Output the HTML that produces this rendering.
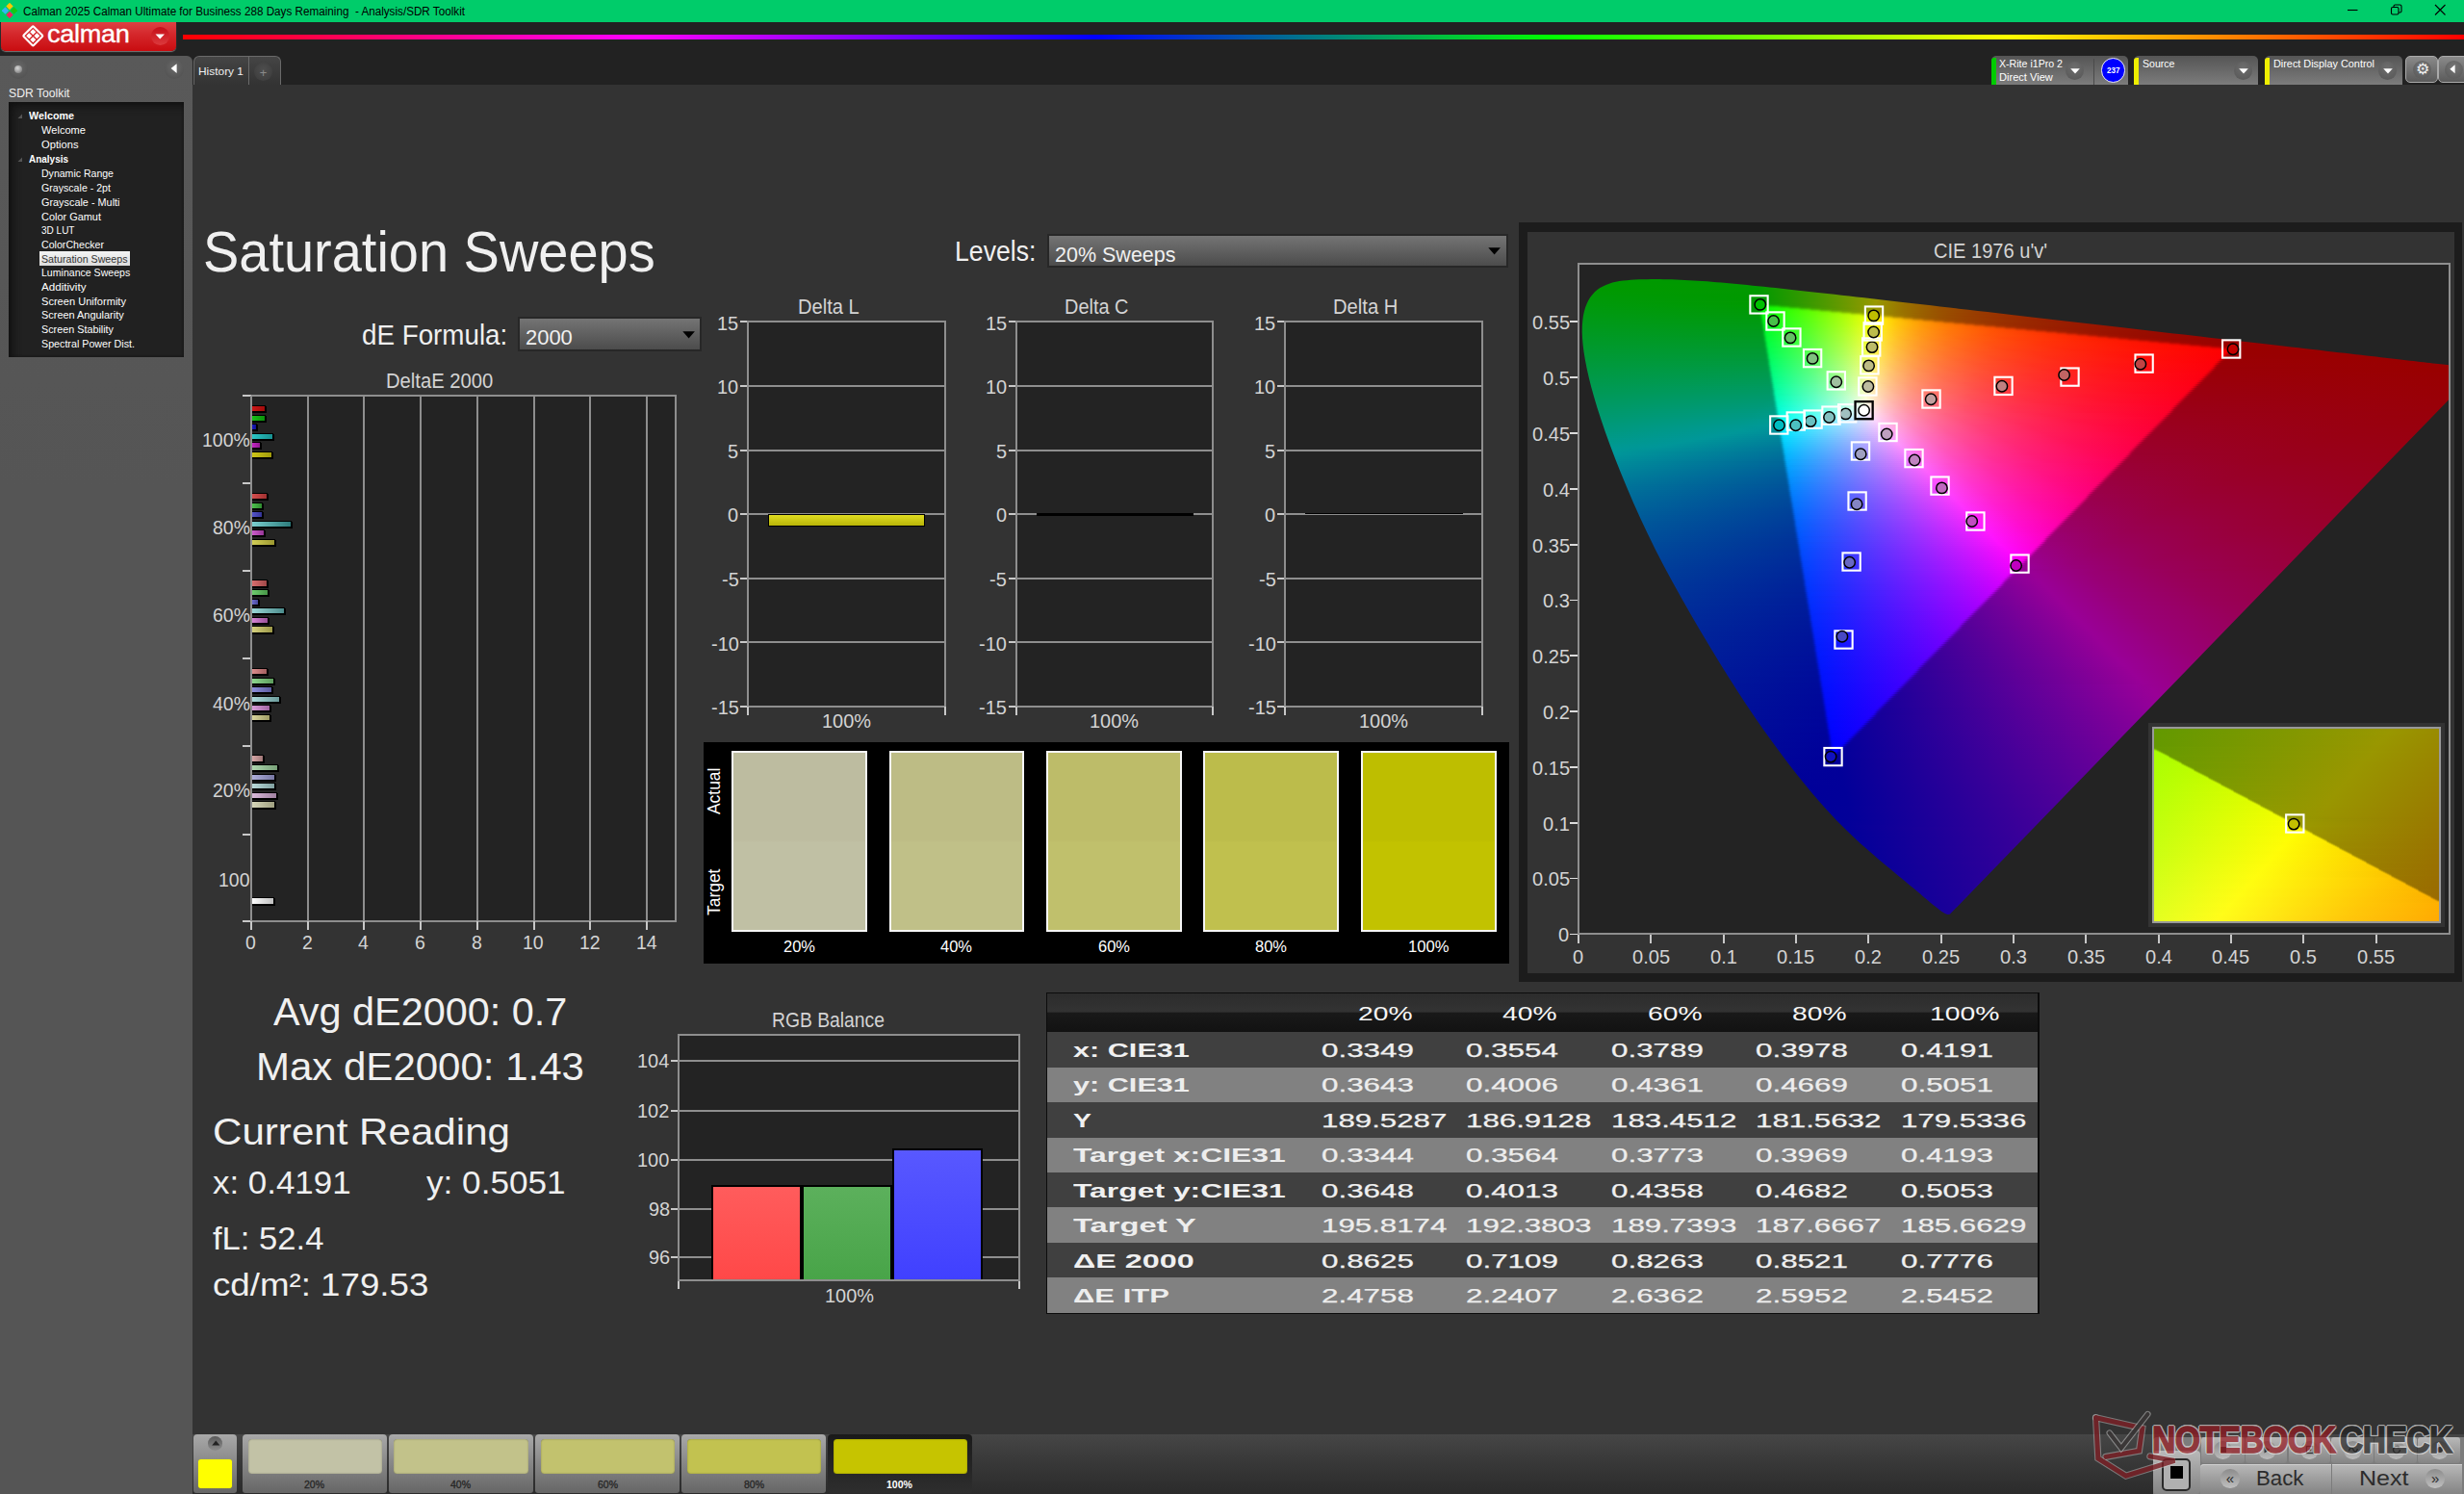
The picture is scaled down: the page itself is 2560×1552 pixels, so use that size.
<!DOCTYPE html>
<html><head><meta charset="utf-8"><title>Calman - Saturation Sweeps</title>
<style>
html,body{margin:0;padding:0;background:#333;}
body{width:2560px;height:1552px;position:relative;overflow:hidden;font-family:"Liberation Sans",sans-serif;}
div,svg.a{position:absolute;}
.t{position:absolute;white-space:nowrap;line-height:1;transform-origin:0 0;}
.cie i{display:block;height:2px;}
.c1 i,.cie i.h{height:1px;}
</style></head><body>
<!-- s_chrome -->
<div style="left:0px;top:0px;width:2560px;height:23px;background:#00cc6a"></div>
<svg class="a" style="left:2px;top:3px" width="16" height="16" viewBox="0 0 16 16"><rect x="5.4" y="0.9" width="5.2" height="5.2" transform="rotate(45 8 3.5)" fill="#ffc800"/><rect x="0.9" y="5.4" width="5.2" height="5.2" transform="rotate(45 3.5 8)" fill="#35b4f4"/><rect x="9.9" y="5.4" width="5.2" height="5.2" transform="rotate(45 12.5 8)" fill="#14c814"/><rect x="5.4" y="9.9" width="5.2" height="5.2" transform="rotate(45 8 12.5)" fill="#ee2460"/></svg>
<span class="t" style="left:23.8px;top:6px;font-size:12px;color:#000;transform:scaleX(0.9738);white-space:pre;">Calman 2025 Calman Ultimate for Business 288 Days Remaining  - Analysis/SDR Toolkit</span>
<svg class="a" style="left:2430px;top:0" width="130" height="23" viewBox="0 0 130 23" fill="none" stroke="#000" stroke-width="1.1"><path d="M9 10.5h10.5"/><rect x="54.5" y="7.5" width="7.5" height="7.5" rx="1.5"/><path d="M57 7.5v-1a1.5 1.5 0 0 1 1.5-1.5h5a1.5 1.5 0 0 1 1.5 1.5v5a1.5 1.5 0 0 1-1.5 1.5h-1.5"/><path d="M100 5l10.5 10.5M110.5 5l-10.5 10.5"/></svg>
<div style="left:0px;top:23px;width:2560px;height:65px;background:#222"></div>
<div style="left:190px;top:35.5px;width:2370px;height:5px;background:linear-gradient(90deg,#f00 0%,#f0f 20%,#00f 40%,#0f0 60%,#ff0 80%,#f00 100%)"></div>
<div style="left:1px;top:23px;width:181.5px;height:29.5px;background:linear-gradient(#de4043,#d4262a 45%,#c90c10);border-radius:0 0 5px 5px;box-shadow:0 1px 1px #777"></div>
<svg class="a" style="left:21px;top:24px" width="28" height="28" viewBox="0 0 28 28"><g transform="translate(13.3 13.3) rotate(45)"><rect x="-7.3" y="-7.3" width="14.6" height="14.6" rx="1" fill="none" stroke="#fff" stroke-width="2.1"/><rect x="-5" y="-5" width="4.3" height="4.3" fill="#fff"/><rect x="0.7" y="-5" width="4.3" height="4.3" fill="#fff"/><rect x="-5" y="0.7" width="4.3" height="4.3" fill="#fff"/><rect x="0.7" y="0.7" width="4.3" height="4.3" fill="#fff"/></g></svg>
<span class="t" style="left:49.3px;top:22px;font-size:26.5px;color:#fff;transform:scaleX(1.0242);letter-spacing:-0.3px;-webkit-text-stroke:0.35px #fff;">calman</span>
<div style="left:156.5px;top:27.5px;width:19.5px;height:19.5px;border-radius:50%;background:linear-gradient(#c40d18,#dc3a3d)"></div>
<svg class="a" style="left:161px;top:35px" width="11" height="7"><path d="M0.5 0.5h9.5l-4.75 5z" fill="#fff"/></svg>
<div style="left:0px;top:58px;width:199.5px;height:1494px;background:linear-gradient(#595959,#555 30%);border-radius:0 6px 0 0"></div>
<div style="left:9px;top:62px;width:20px;height:20px;border-radius:50%;background:radial-gradient(circle at 50% 40%,#6a6a6a,#4c4c4c)"></div>
<div style="left:14.5px;top:67.5px;width:8.5px;height:8.5px;border-radius:50%;background:radial-gradient(circle at 40% 35%,#d8d8d8,#8a8a8a 70%,#666)"></div>
<div style="left:171px;top:62px;width:20px;height:20px;border-radius:50%;background:radial-gradient(circle at 50% 40%,#6a6a6a,#4c4c4c)"></div>
<svg class="a" style="left:177px;top:66px" width="8" height="11"><path d="M6.6 0.3v9.6L0.6 5.1z" fill="#fff"/></svg>
<span class="t" style="left:9px;top:91px;font-size:12.5px;color:#f0f0f0;transform:scaleX(0.9759);">SDR Toolkit</span>
<div style="left:9px;top:105.5px;width:182px;height:265px;background:#212121;box-shadow:inset 6px 6px 8px -2px #111, inset 0 0 3px #111"></div>
<div style="left:41px;top:260.7px;width:94.2px;height:15.3px;background:linear-gradient(#f4f4f4,#dcdcdc)"></div>
<span class="t" style="left:30px;top:115px;font-size:11.3px;color:#fff;font-weight:700;transform:scaleX(0.9513);">Welcome</span>
<span class="t" style="left:43px;top:130px;font-size:11.3px;color:#fff;transform:scaleX(0.9810);">Welcome</span>
<span class="t" style="left:43px;top:145px;font-size:11.3px;color:#fff;transform:scaleX(0.9886);">Options</span>
<span class="t" style="left:30px;top:160px;font-size:11.3px;color:#fff;font-weight:700;transform:scaleX(0.8821);">Analysis</span>
<span class="t" style="left:43px;top:175px;font-size:11.3px;color:#fff;transform:scaleX(0.9329);">Dynamic Range</span>
<span class="t" style="left:43px;top:190px;font-size:11.3px;color:#fff;transform:scaleX(0.9397);">Grayscale - 2pt</span>
<span class="t" style="left:43px;top:205px;font-size:11.3px;color:#fff;transform:scaleX(0.9614);">Grayscale - Multi</span>
<span class="t" style="left:43px;top:220px;font-size:11.3px;color:#fff;transform:scaleX(0.9679);">Color Gamut</span>
<span class="t" style="left:43px;top:234px;font-size:11.3px;color:#fff;transform:scaleX(0.8861);">3D LUT</span>
<span class="t" style="left:43px;top:249px;font-size:11.3px;color:#fff;transform:scaleX(0.9409);">ColorChecker</span>
<span class="t" style="left:43px;top:264px;font-size:11.3px;color:#333;transform:scaleX(0.9435);">Saturation Sweeps</span>
<span class="t" style="left:43px;top:278px;font-size:11.3px;color:#fff;transform:scaleX(0.9349);">Luminance Sweeps</span>
<span class="t" style="left:43px;top:293px;font-size:11.3px;color:#fff;transform:scaleX(1.0284);">Additivity</span>
<span class="t" style="left:43px;top:308px;font-size:11.3px;color:#fff;transform:scaleX(0.9799);">Screen Uniformity</span>
<span class="t" style="left:43px;top:322px;font-size:11.3px;color:#fff;transform:scaleX(0.9676);">Screen Angularity</span>
<span class="t" style="left:43px;top:337px;font-size:11.3px;color:#fff;transform:scaleX(0.9553);">Screen Stability</span>
<span class="t" style="left:43px;top:352px;font-size:11.3px;color:#fff;transform:scaleX(0.9476);">Spectral Power Dist.</span>
<svg class="a" style="left:18px;top:117.5px" width="6" height="6"><path d="M5 0.5v4.5H0.5z" fill="#555"/></svg>
<svg class="a" style="left:18px;top:162.5px" width="6" height="6"><path d="M5 0.5v4.5H0.5z" fill="#555"/></svg>
<div style="left:200px;top:88px;width:2360px;height:1464px;background:#333"></div>
<div style="left:200.5px;top:58px;width:91.5px;height:30px;background:linear-gradient(#454545,#333);border:1px solid #6a6a6a;border-bottom:none;border-radius:6px 6px 0 0;box-sizing:border-box"></div>
<div style="left:257.5px;top:59px;width:1.2px;height:29px;background:#6a6a6a"></div>
<span class="t" style="left:206px;top:69px;font-size:11.5px;color:#f0f0f0;transform:scaleX(1.0359);">History 1</span>
<div style="left:264px;top:65px;width:19px;height:19px;border-radius:50%;background:radial-gradient(circle at 50% 40%,#4e4e4e,#3a3a3a)"></div>
<span class="t" style="left:269.8px;top:69px;font-size:13px;color:#8a8a8a;">+</span>
<div style="left:2068.5px;top:58.3px;width:142.2px;height:29.7px;background:linear-gradient(#555,#7c7c7c);border-radius:5px 5px 0 0;"></div>
<div style="left:2068.5px;top:59.5px;width:5.5px;height:28.5px;background:#0c0;border-radius:3px 0 0 0"></div>
<div style="left:2174.5px;top:61px;width:1.2px;height:27px;background:#4a4a4a"></div>
<span class="t" style="left:2076.6px;top:61px;font-size:11.3px;color:#fff;transform:scaleX(0.9383);">X-Rite i1Pro 2</span>
<span class="t" style="left:2076.6px;top:75px;font-size:11.3px;color:#fff;transform:scaleX(0.9800);">Direct View</span>
<div style="left:2182.7px;top:60.1px;width:25.6px;height:25.6px;border-radius:50%;background:#00f;border:1.2px solid #eee;box-sizing:border-box"></div>
<span class="t" style="left:2188.85px;top:68px;font-size:9.8px;color:#fff;font-weight:700;transform:scaleX(0.8256);">237</span>
<div style="left:2217.3px;top:58.3px;width:129.2px;height:29.7px;background:linear-gradient(#555,#7c7c7c);border-radius:5px 5px 0 0;"></div>
<div style="left:2217.3px;top:59.5px;width:5px;height:28.5px;background:#ee0;border-radius:3px 0 0 0"></div>
<span class="t" style="left:2225.5px;top:61px;font-size:11.3px;color:#fff;transform:scaleX(0.9356);">Source</span>
<div style="left:2353.2px;top:58.3px;width:142.7px;height:29.7px;background:linear-gradient(#555,#7c7c7c);border-radius:5px 5px 0 0;"></div>
<div style="left:2353.2px;top:59.5px;width:5px;height:28.5px;background:#ee0;border-radius:3px 0 0 0"></div>
<span class="t" style="left:2361.8px;top:61px;font-size:11.3px;color:#fff;transform:scaleX(0.9609);">Direct Display Control</span>
<div style="left:2146px;top:63.5px;width:19px;height:19px;border-radius:50%;background:radial-gradient(circle at 50% 35%,#6e6e6e,#555)"></div>
<svg class="a" style="left:2150.5px;top:70.5px" width="10" height="6"><path d="M0.2 0.3h9.6L5 5.6z" fill="#fff"/></svg>
<div style="left:2321px;top:63.5px;width:19px;height:19px;border-radius:50%;background:radial-gradient(circle at 50% 35%,#6e6e6e,#555)"></div>
<svg class="a" style="left:2325.5px;top:70.5px" width="10" height="6"><path d="M0.2 0.3h9.6L5 5.6z" fill="#fff"/></svg>
<div style="left:2471px;top:63.5px;width:19px;height:19px;border-radius:50%;background:radial-gradient(circle at 50% 35%,#6e6e6e,#555)"></div>
<svg class="a" style="left:2475.5px;top:70.5px" width="10" height="6"><path d="M0.2 0.3h9.6L5 5.6z" fill="#fff"/></svg>
<div style="left:2499.3px;top:58.3px;width:33.5px;height:27.5px;background:linear-gradient(#8a8a8a,#5a5a5a);border:1px solid #aaa;border-radius:5px;box-sizing:border-box"></div>
<div style="left:2532.8px;top:58.3px;width:33.5px;height:27.5px;background:linear-gradient(#8a8a8a,#5a5a5a);border:1px solid #aaa;border-radius:5px;box-sizing:border-box"></div>
<div style="left:2506.5px;top:62.5px;width:19px;height:19px;border-radius:50%;background:radial-gradient(circle at 50% 35%,#777,#555)"></div>
<div style="left:2539.5px;top:62.5px;width:19px;height:19px;border-radius:50%;background:radial-gradient(circle at 50% 35%,#777,#555)"></div>
<span class="t" style="left:2510px;top:64px;font-size:16px;color:#eee;font-family:'DejaVu Sans',sans-serif;">⚙</span>
<svg class="a" style="left:2545px;top:67px" width="7" height="10"><path d="M5.6 0.3v9L0.4 4.8z" fill="#fff"/></svg>
<!-- s_left -->
<span class="t" style="left:211.3px;top:232px;font-size:59.5px;color:#f0f0f0;transform:scaleX(0.9404);">Saturation Sweeps</span>
<span class="t" style="left:375.8px;top:333px;font-size:29.5px;color:#f0f0f0;transform:scaleX(0.9411);">dE Formula:</span>
<div style="left:538.3px;top:328.8px;width:191px;height:36.2px;background:linear-gradient(#747474,#4c4c4c);border:2px solid #272727;box-sizing:border-box"></div>
<span class="t" style="left:546px;top:341px;font-size:21.5px;color:#f0f0f0;transform:scaleX(1.0203);">2000</span>
<svg class="a" style="left:708.5px;top:343.5px" width="14" height="8"><path d="M0.3 0.3h12.6L6.6 7.6z" fill="#000"/></svg>
<span class="t" style="left:400.75px;top:386px;font-size:21.5px;color:#d4d4d4;transform:scaleX(0.9405);">DeltaE 2000</span>
<div style="left:259.8px;top:410px;width:442.8px;height:548px;background:#232323;border:2px solid #8e8e8e;box-sizing:border-box"></div>
<div style="left:318.56px;top:411px;width:2px;height:546px;background:#8e8e8e"></div>
<div style="left:377.32px;top:411px;width:2px;height:546px;background:#8e8e8e"></div>
<div style="left:436.08px;top:411px;width:2px;height:546px;background:#8e8e8e"></div>
<div style="left:494.84px;top:411px;width:2px;height:546px;background:#8e8e8e"></div>
<div style="left:553.6px;top:411px;width:2px;height:546px;background:#8e8e8e"></div>
<div style="left:612.36px;top:411px;width:2px;height:546px;background:#8e8e8e"></div>
<div style="left:671.12px;top:411px;width:2px;height:546px;background:#8e8e8e"></div>
<div style="left:259.8px;top:957px;width:2px;height:9px;background:#c8c8c8"></div>
<span class="t" style="left:254.88px;top:969px;font-size:20.3px;color:#d4d4d4;transform:scaleX(0.9600);">0</span>
<div style="left:318.56px;top:957px;width:2px;height:9px;background:#c8c8c8"></div>
<span class="t" style="left:313.64px;top:969px;font-size:20.3px;color:#d4d4d4;transform:scaleX(0.9600);">2</span>
<div style="left:377.32px;top:957px;width:2px;height:9px;background:#c8c8c8"></div>
<span class="t" style="left:372.4px;top:969px;font-size:20.3px;color:#d4d4d4;transform:scaleX(0.9600);">4</span>
<div style="left:436.08px;top:957px;width:2px;height:9px;background:#c8c8c8"></div>
<span class="t" style="left:431.16px;top:969px;font-size:20.3px;color:#d4d4d4;transform:scaleX(0.9600);">6</span>
<div style="left:494.84px;top:957px;width:2px;height:9px;background:#c8c8c8"></div>
<span class="t" style="left:489.92px;top:969px;font-size:20.3px;color:#d4d4d4;transform:scaleX(0.9600);">8</span>
<div style="left:553.6px;top:957px;width:2px;height:9px;background:#c8c8c8"></div>
<span class="t" style="left:543.26px;top:969px;font-size:20.3px;color:#d4d4d4;transform:scaleX(0.9600);">10</span>
<div style="left:612.36px;top:957px;width:2px;height:9px;background:#c8c8c8"></div>
<span class="t" style="left:602.02px;top:969px;font-size:20.3px;color:#d4d4d4;transform:scaleX(0.9600);">12</span>
<div style="left:671.12px;top:957px;width:2px;height:9px;background:#c8c8c8"></div>
<span class="t" style="left:660.78px;top:969px;font-size:20.3px;color:#d4d4d4;transform:scaleX(0.9600);">14</span>
<div style="left:251.8px;top:410px;width:9px;height:2px;background:#c8c8c8"></div>
<div style="left:251.8px;top:501px;width:9px;height:2px;background:#c8c8c8"></div>
<div style="left:251.8px;top:591.5px;width:9px;height:2px;background:#c8c8c8"></div>
<div style="left:251.8px;top:683px;width:9px;height:2px;background:#c8c8c8"></div>
<div style="left:251.8px;top:773.5px;width:9px;height:2px;background:#c8c8c8"></div>
<div style="left:251.8px;top:865.5px;width:9px;height:2px;background:#c8c8c8"></div>
<div style="left:251.8px;top:956px;width:9px;height:2px;background:#c8c8c8"></div>
<span class="t" style="left:209.66px;top:447px;font-size:20.3px;color:#d4d4d4;transform:scaleX(0.9600);">100%</span>
<span class="t" style="left:220.5px;top:538px;font-size:20.3px;color:#d4d4d4;transform:scaleX(0.9600);">80%</span>
<span class="t" style="left:220.5px;top:629px;font-size:20.3px;color:#d4d4d4;transform:scaleX(0.9600);">60%</span>
<span class="t" style="left:220.5px;top:721px;font-size:20.3px;color:#d4d4d4;transform:scaleX(0.9600);">40%</span>
<span class="t" style="left:220.5px;top:811px;font-size:20.3px;color:#d4d4d4;transform:scaleX(0.9600);">20%</span>
<span class="t" style="left:226.98px;top:904px;font-size:20.3px;color:#d4d4d4;transform:scaleX(0.9600);">100</span>
<div style="left:261.3px;top:420.9px;width:14.5px;height:7.2px;background:linear-gradient(90deg,#d01818,#a00c0c);border:1.3px solid #000;border-left:none;box-sizing:border-box;box-shadow:1px 1px 0 #000"></div>
<div style="left:261.3px;top:430.5px;width:14.5px;height:7.2px;background:linear-gradient(90deg,#18c418,#0c900c);border:1.3px solid #000;border-left:none;box-sizing:border-box;box-shadow:1px 1px 0 #000"></div>
<div style="left:261.3px;top:440.1px;width:6px;height:7.2px;background:linear-gradient(90deg,#1c1cd0,#101090);border:1.3px solid #000;border-left:none;box-sizing:border-box;box-shadow:1px 1px 0 #000"></div>
<div style="left:261.3px;top:449.7px;width:23.2px;height:7.2px;background:linear-gradient(90deg,#2cc8c8,#189090);border:1.3px solid #000;border-left:none;box-sizing:border-box;box-shadow:1px 1px 0 #000"></div>
<div style="left:261.3px;top:459.3px;width:10px;height:7.2px;background:linear-gradient(90deg,#cc28cc,#901890);border:1.3px solid #000;border-left:none;box-sizing:border-box;box-shadow:1px 1px 0 #000"></div>
<div style="left:261.3px;top:468.9px;width:22.2px;height:7.2px;background:linear-gradient(90deg,#d0c818,#a09a0c);border:1.3px solid #000;border-left:none;box-sizing:border-box;box-shadow:1px 1px 0 #000"></div>
<div style="left:261.3px;top:511.9px;width:16.5px;height:7.2px;background:linear-gradient(90deg,#d85050,#a03030);border:1.3px solid #000;border-left:none;box-sizing:border-box;box-shadow:1px 1px 0 #000"></div>
<div style="left:261.3px;top:521.5px;width:12px;height:7.2px;background:linear-gradient(90deg,#50c850,#308a30);border:1.3px solid #000;border-left:none;box-sizing:border-box;box-shadow:1px 1px 0 #000"></div>
<div style="left:261.3px;top:531.1px;width:12px;height:7.2px;background:linear-gradient(90deg,#5858d0,#343496);border:1.3px solid #000;border-left:none;box-sizing:border-box;box-shadow:1px 1px 0 #000"></div>
<div style="left:261.3px;top:540.7px;width:41.3px;height:7.2px;background:linear-gradient(90deg,#7cd0d0,#2c7c7c);border:1.3px solid #000;border-left:none;box-sizing:border-box;box-shadow:1px 1px 0 #000"></div>
<div style="left:261.3px;top:550.3px;width:14px;height:7.2px;background:linear-gradient(90deg,#d060d0,#963696);border:1.3px solid #000;border-left:none;box-sizing:border-box;box-shadow:1px 1px 0 #000"></div>
<div style="left:261.3px;top:559.9px;width:25.2px;height:7.2px;background:linear-gradient(90deg,#d4d058,#9c9830);border:1.3px solid #000;border-left:none;box-sizing:border-box;box-shadow:1px 1px 0 #000"></div>
<div style="left:261.3px;top:602.4px;width:16.5px;height:7.2px;background:linear-gradient(90deg,#dc7070,#a04848);border:1.3px solid #000;border-left:none;box-sizing:border-box;box-shadow:1px 1px 0 #000"></div>
<div style="left:261.3px;top:612px;width:18.2px;height:7.2px;background:linear-gradient(90deg,#70d070,#489648);border:1.3px solid #000;border-left:none;box-sizing:border-box;box-shadow:1px 1px 0 #000"></div>
<div style="left:261.3px;top:621.6px;width:8px;height:7.2px;background:linear-gradient(90deg,#7070d4,#484898);border:1.3px solid #000;border-left:none;box-sizing:border-box;box-shadow:1px 1px 0 #000"></div>
<div style="left:261.3px;top:631.2px;width:35.2px;height:7.2px;background:linear-gradient(90deg,#9cd8d8,#4c8c8c);border:1.3px solid #000;border-left:none;box-sizing:border-box;box-shadow:1px 1px 0 #000"></div>
<div style="left:261.3px;top:640.8px;width:18.2px;height:7.2px;background:linear-gradient(90deg,#d888d8,#985098);border:1.3px solid #000;border-left:none;box-sizing:border-box;box-shadow:1px 1px 0 #000"></div>
<div style="left:261.3px;top:650.4px;width:23.2px;height:7.2px;background:linear-gradient(90deg,#d8d480,#9c9848);border:1.3px solid #000;border-left:none;box-sizing:border-box;box-shadow:1px 1px 0 #000"></div>
<div style="left:261.3px;top:693.9px;width:16.5px;height:7.2px;background:linear-gradient(90deg,#e09090,#a46060);border:1.3px solid #000;border-left:none;box-sizing:border-box;box-shadow:1px 1px 0 #000"></div>
<div style="left:261.3px;top:703.5px;width:23.5px;height:7.2px;background:linear-gradient(90deg,#90d890,#5c9c5c);border:1.3px solid #000;border-left:none;box-sizing:border-box;box-shadow:1px 1px 0 #000"></div>
<div style="left:261.3px;top:713.1px;width:22px;height:7.2px;background:linear-gradient(90deg,#9090dc,#5c5ca0);border:1.3px solid #000;border-left:none;box-sizing:border-box;box-shadow:1px 1px 0 #000"></div>
<div style="left:261.3px;top:722.7px;width:29.5px;height:7.2px;background:linear-gradient(90deg,#b0dcdc,#6c9c9c);border:1.3px solid #000;border-left:none;box-sizing:border-box;box-shadow:1px 1px 0 #000"></div>
<div style="left:261.3px;top:732.3px;width:20.2px;height:7.2px;background:linear-gradient(90deg,#dca0dc,#a064a0);border:1.3px solid #000;border-left:none;box-sizing:border-box;box-shadow:1px 1px 0 #000"></div>
<div style="left:261.3px;top:741.9px;width:20.2px;height:7.2px;background:linear-gradient(90deg,#dcd8a0,#a09c64);border:1.3px solid #000;border-left:none;box-sizing:border-box;box-shadow:1px 1px 0 #000"></div>
<div style="left:261.3px;top:784.4px;width:12.7px;height:7.2px;background:linear-gradient(90deg,#dcacac,#a07878);border:1.3px solid #000;border-left:none;box-sizing:border-box;box-shadow:1px 1px 0 #000"></div>
<div style="left:261.3px;top:794px;width:27.7px;height:7.2px;background:linear-gradient(90deg,#b0d8b0,#78a078);border:1.3px solid #000;border-left:none;box-sizing:border-box;box-shadow:1px 1px 0 #000"></div>
<div style="left:261.3px;top:803.6px;width:25.2px;height:7.2px;background:linear-gradient(90deg,#b0b0dc,#7878a4);border:1.3px solid #000;border-left:none;box-sizing:border-box;box-shadow:1px 1px 0 #000"></div>
<div style="left:261.3px;top:813.2px;width:25.2px;height:7.2px;background:linear-gradient(90deg,#bcdcdc,#80a0a0);border:1.3px solid #000;border-left:none;box-sizing:border-box;box-shadow:1px 1px 0 #000"></div>
<div style="left:261.3px;top:822.8px;width:27.2px;height:7.2px;background:linear-gradient(90deg,#dcbcdc,#a080a0);border:1.3px solid #000;border-left:none;box-sizing:border-box;box-shadow:1px 1px 0 #000"></div>
<div style="left:261.3px;top:832.4px;width:25.2px;height:7.2px;background:linear-gradient(90deg,#d8d8bc,#a0a080);border:1.3px solid #000;border-left:none;box-sizing:border-box;box-shadow:1px 1px 0 #000"></div>
<div style="left:261.3px;top:932.4px;width:23.5px;height:7.2px;background:linear-gradient(90deg,#ffffff,#c0c0c0);border:1.3px solid #000;border-left:none;box-sizing:border-box;box-shadow:1px 1px 0 #000"></div>
<div style="left:259.8px;top:411px;width:2px;height:546px;background:#8e8e8e"></div>
<span class="t" style="left:283.9px;top:1031px;font-size:40.7px;color:#f0f0f0;transform:scaleX(1.0172);">Avg dE2000: 0.7</span>
<span class="t" style="left:266px;top:1088px;font-size:40.7px;color:#f0f0f0;transform:scaleX(1.0322);">Max dE2000: 1.43</span>
<span class="t" style="left:221.4px;top:1157px;font-size:38.5px;color:#f0f0f0;transform:scaleX(1.0938);">Current Reading</span>
<span class="t" style="left:221.4px;top:1213px;font-size:32.5px;color:#f0f0f0;transform:scaleX(1.0739);">x: 0.4191</span>
<span class="t" style="left:442.9px;top:1213px;font-size:32.5px;color:#f0f0f0;transform:scaleX(1.0814);">y: 0.5051</span>
<span class="t" style="left:221.4px;top:1271px;font-size:32.5px;color:#f0f0f0;transform:scaleX(1.0644);">fL: 52.4</span>
<span class="t" style="left:221.4px;top:1319px;font-size:32.5px;color:#f0f0f0;transform:scaleX(1.1287);">cd/m²: 179.53</span>
<!-- s_mid -->
<span class="t" style="left:991.8px;top:246px;font-size:29.5px;color:#f0f0f0;transform:scaleX(0.9030);">Levels:</span>
<div style="left:1087.5px;top:243px;width:479.3px;height:34.5px;background:linear-gradient(#747474,#4c4c4c);border:2px solid #272727;box-sizing:border-box;overflow:hidden"><span class="t" style="left:6px;top:9px;font-size:21.7px;color:#f0f0f0;transform:scaleX(0.9916);">20% Sweeps</span></div>
<svg class="a" style="left:1545.5px;top:256.5px" width="14" height="8"><path d="M0.3 0.3h12.6L6.6 7.6z" fill="#000"/></svg>
<div style="left:776px;top:333.3px;width:206.5px;height:401.6px;background:#232323;border:2px solid #8e8e8e;box-sizing:border-box"></div>
<div style="left:769px;top:333.3px;width:7px;height:2px;background:#c8c8c8"></div>
<span class="t" style="left:745.31px;top:325px;font-size:21px;color:#d4d4d4;transform:scaleX(0.9500);">15</span>
<div style="left:776px;top:399.9px;width:206.5px;height:2px;background:#8e8e8e"></div>
<div style="left:769px;top:399.9px;width:7px;height:2px;background:#c8c8c8"></div>
<span class="t" style="left:745.31px;top:391px;font-size:21px;color:#d4d4d4;transform:scaleX(0.9500);">10</span>
<div style="left:776px;top:466.5px;width:206.5px;height:2px;background:#8e8e8e"></div>
<div style="left:769px;top:466.5px;width:7px;height:2px;background:#c8c8c8"></div>
<span class="t" style="left:756.4px;top:458px;font-size:21px;color:#d4d4d4;transform:scaleX(0.9500);">5</span>
<div style="left:776px;top:533.1px;width:206.5px;height:2px;background:#8e8e8e"></div>
<div style="left:769px;top:533.1px;width:7px;height:2px;background:#c8c8c8"></div>
<span class="t" style="left:756.4px;top:524px;font-size:21px;color:#d4d4d4;transform:scaleX(0.9500);">0</span>
<div style="left:776px;top:599.7px;width:206.5px;height:2px;background:#8e8e8e"></div>
<div style="left:769px;top:599.7px;width:7px;height:2px;background:#c8c8c8"></div>
<span class="t" style="left:749.76px;top:591px;font-size:21px;color:#d4d4d4;transform:scaleX(0.9500);">-5</span>
<div style="left:776px;top:666.3px;width:206.5px;height:2px;background:#8e8e8e"></div>
<div style="left:769px;top:666.3px;width:7px;height:2px;background:#c8c8c8"></div>
<span class="t" style="left:738.66px;top:658px;font-size:21px;color:#d4d4d4;transform:scaleX(0.9500);">-10</span>
<div style="left:769px;top:732.9px;width:7px;height:2px;background:#c8c8c8"></div>
<span class="t" style="left:738.66px;top:724px;font-size:21px;color:#d4d4d4;transform:scaleX(0.9500);">-15</span>
<div style="left:776px;top:733.9px;width:2px;height:9px;background:#c8c8c8"></div>
<div style="left:980.5px;top:733.9px;width:2px;height:9px;background:#c8c8c8"></div>
<span class="t" style="left:853.75px;top:738px;font-size:21px;color:#d4d4d4;transform:scaleX(0.9495);">100%</span>
<span class="t" style="left:828.7px;top:308px;font-size:21.7px;color:#d4d4d4;transform:scaleX(0.9279);">Delta L</span>
<div style="left:797.5px;top:534.1px;width:163px;height:13.3px;background:linear-gradient(#e0dc20,#b8b408);border:1.5px solid #000;box-sizing:border-box"></div>
<div style="left:1054.7px;top:333.3px;width:206.5px;height:401.6px;background:#232323;border:2px solid #8e8e8e;box-sizing:border-box"></div>
<div style="left:1047.7px;top:333.3px;width:7px;height:2px;background:#c8c8c8"></div>
<span class="t" style="left:1024.01px;top:325px;font-size:21px;color:#d4d4d4;transform:scaleX(0.9500);">15</span>
<div style="left:1054.7px;top:399.9px;width:206.5px;height:2px;background:#8e8e8e"></div>
<div style="left:1047.7px;top:399.9px;width:7px;height:2px;background:#c8c8c8"></div>
<span class="t" style="left:1024.01px;top:391px;font-size:21px;color:#d4d4d4;transform:scaleX(0.9500);">10</span>
<div style="left:1054.7px;top:466.5px;width:206.5px;height:2px;background:#8e8e8e"></div>
<div style="left:1047.7px;top:466.5px;width:7px;height:2px;background:#c8c8c8"></div>
<span class="t" style="left:1035.1px;top:458px;font-size:21px;color:#d4d4d4;transform:scaleX(0.9500);">5</span>
<div style="left:1054.7px;top:533.1px;width:206.5px;height:2px;background:#8e8e8e"></div>
<div style="left:1047.7px;top:533.1px;width:7px;height:2px;background:#c8c8c8"></div>
<span class="t" style="left:1035.1px;top:524px;font-size:21px;color:#d4d4d4;transform:scaleX(0.9500);">0</span>
<div style="left:1054.7px;top:599.7px;width:206.5px;height:2px;background:#8e8e8e"></div>
<div style="left:1047.7px;top:599.7px;width:7px;height:2px;background:#c8c8c8"></div>
<span class="t" style="left:1028.46px;top:591px;font-size:21px;color:#d4d4d4;transform:scaleX(0.9500);">-5</span>
<div style="left:1054.7px;top:666.3px;width:206.5px;height:2px;background:#8e8e8e"></div>
<div style="left:1047.7px;top:666.3px;width:7px;height:2px;background:#c8c8c8"></div>
<span class="t" style="left:1017.36px;top:658px;font-size:21px;color:#d4d4d4;transform:scaleX(0.9500);">-10</span>
<div style="left:1047.7px;top:732.9px;width:7px;height:2px;background:#c8c8c8"></div>
<span class="t" style="left:1017.36px;top:724px;font-size:21px;color:#d4d4d4;transform:scaleX(0.9500);">-15</span>
<div style="left:1054.7px;top:733.9px;width:2px;height:9px;background:#c8c8c8"></div>
<div style="left:1259.2px;top:733.9px;width:2px;height:9px;background:#c8c8c8"></div>
<span class="t" style="left:1132.45px;top:738px;font-size:21px;color:#d4d4d4;transform:scaleX(0.9495);">100%</span>
<span class="t" style="left:1106.35px;top:308px;font-size:21.7px;color:#d4d4d4;transform:scaleX(0.9190);">Delta C</span>
<div style="left:1076.5px;top:532.6px;width:163.5px;height:3px;background:#000"></div>
<div style="left:1334px;top:333.3px;width:206.5px;height:401.6px;background:#232323;border:2px solid #8e8e8e;box-sizing:border-box"></div>
<div style="left:1327px;top:333.3px;width:7px;height:2px;background:#c8c8c8"></div>
<span class="t" style="left:1303.31px;top:325px;font-size:21px;color:#d4d4d4;transform:scaleX(0.9500);">15</span>
<div style="left:1334px;top:399.9px;width:206.5px;height:2px;background:#8e8e8e"></div>
<div style="left:1327px;top:399.9px;width:7px;height:2px;background:#c8c8c8"></div>
<span class="t" style="left:1303.31px;top:391px;font-size:21px;color:#d4d4d4;transform:scaleX(0.9500);">10</span>
<div style="left:1334px;top:466.5px;width:206.5px;height:2px;background:#8e8e8e"></div>
<div style="left:1327px;top:466.5px;width:7px;height:2px;background:#c8c8c8"></div>
<span class="t" style="left:1314.4px;top:458px;font-size:21px;color:#d4d4d4;transform:scaleX(0.9500);">5</span>
<div style="left:1334px;top:533.1px;width:206.5px;height:2px;background:#8e8e8e"></div>
<div style="left:1327px;top:533.1px;width:7px;height:2px;background:#c8c8c8"></div>
<span class="t" style="left:1314.4px;top:524px;font-size:21px;color:#d4d4d4;transform:scaleX(0.9500);">0</span>
<div style="left:1334px;top:599.7px;width:206.5px;height:2px;background:#8e8e8e"></div>
<div style="left:1327px;top:599.7px;width:7px;height:2px;background:#c8c8c8"></div>
<span class="t" style="left:1307.76px;top:591px;font-size:21px;color:#d4d4d4;transform:scaleX(0.9500);">-5</span>
<div style="left:1334px;top:666.3px;width:206.5px;height:2px;background:#8e8e8e"></div>
<div style="left:1327px;top:666.3px;width:7px;height:2px;background:#c8c8c8"></div>
<span class="t" style="left:1296.66px;top:658px;font-size:21px;color:#d4d4d4;transform:scaleX(0.9500);">-10</span>
<div style="left:1327px;top:732.9px;width:7px;height:2px;background:#c8c8c8"></div>
<span class="t" style="left:1296.66px;top:724px;font-size:21px;color:#d4d4d4;transform:scaleX(0.9500);">-15</span>
<div style="left:1334px;top:733.9px;width:2px;height:9px;background:#c8c8c8"></div>
<div style="left:1538.5px;top:733.9px;width:2px;height:9px;background:#c8c8c8"></div>
<span class="t" style="left:1411.75px;top:738px;font-size:21px;color:#d4d4d4;transform:scaleX(0.9495);">100%</span>
<span class="t" style="left:1384.85px;top:308px;font-size:21.7px;color:#d4d4d4;transform:scaleX(0.9328);">Delta H</span>
<div style="left:1356px;top:532.8px;width:163.5px;height:1.6px;background:#000"></div>
<div style="left:730.5px;top:770.5px;width:837.5px;height:230.5px;background:#000"></div>
<div style="left:760px;top:780px;width:140.5px;height:188px;background:linear-gradient(#bdbca0 0 49.5%,#c0c0a4 50.5% 100%);border:2px solid #f6f6f6;box-sizing:border-box"></div>
<span class="t" style="left:813.5px;top:975px;font-size:16.3px;color:#fff;transform:scaleX(1.0115);">20%</span>
<div style="left:923.5px;top:780px;width:140.5px;height:188px;background:linear-gradient(#bdbc85 0 49.5%,#c0c088 50.5% 100%);border:2px solid #f6f6f6;box-sizing:border-box"></div>
<span class="t" style="left:977px;top:975px;font-size:16.3px;color:#fff;transform:scaleX(1.0115);">40%</span>
<div style="left:1087px;top:780px;width:140.5px;height:188px;background:linear-gradient(#bdbc69 0 49.5%,#c0c06c 50.5% 100%);border:2px solid #f6f6f6;box-sizing:border-box"></div>
<span class="t" style="left:1140.5px;top:975px;font-size:16.3px;color:#fff;transform:scaleX(1.0115);">60%</span>
<div style="left:1250.3px;top:780px;width:140.5px;height:188px;background:linear-gradient(#bcbc4b 0 49.5%,#c0c04e 50.5% 100%);border:2px solid #f6f6f6;box-sizing:border-box"></div>
<span class="t" style="left:1303.8px;top:975px;font-size:16.3px;color:#fff;transform:scaleX(1.0115);">80%</span>
<div style="left:1414px;top:780px;width:140.5px;height:188px;background:linear-gradient(#bebe00 0 49.5%,#c2c200 50.5% 100%);border:2px solid #f6f6f6;box-sizing:border-box"></div>
<span class="t" style="left:1462.75px;top:975px;font-size:16.3px;color:#fff;transform:scaleX(1.0194);">100%</span>
<span class="t" style="left:734px;top:846px;font-size:17.6px;color:#fff;transform:rotate(-90deg) scaleX(0.99);transform-origin:0 0">Actual</span>
<span class="t" style="left:734px;top:950.5px;font-size:17.6px;color:#fff;transform:rotate(-90deg) scaleX(0.99);transform-origin:0 0">Target</span>
<div style="left:704.3px;top:1074px;width:355.7px;height:256.8px;background:#232323;border:2px solid #8e8e8e;box-sizing:border-box"></div>
<div style="left:704.3px;top:1101px;width:355.7px;height:2px;background:#8e8e8e"></div>
<div style="left:697.3px;top:1101px;width:7px;height:2px;background:#c8c8c8"></div>
<span class="t" style="left:662.41px;top:1091px;font-size:21px;color:#d4d4d4;transform:scaleX(0.9500);">104</span>
<div style="left:704.3px;top:1153px;width:355.7px;height:2px;background:#8e8e8e"></div>
<div style="left:697.3px;top:1153px;width:7px;height:2px;background:#c8c8c8"></div>
<span class="t" style="left:662.41px;top:1143px;font-size:21px;color:#d4d4d4;transform:scaleX(0.9500);">102</span>
<div style="left:704.3px;top:1203.5px;width:355.7px;height:2px;background:#8e8e8e"></div>
<div style="left:697.3px;top:1203.5px;width:7px;height:2px;background:#c8c8c8"></div>
<span class="t" style="left:662.41px;top:1194px;font-size:21px;color:#d4d4d4;transform:scaleX(0.9500);">100</span>
<div style="left:704.3px;top:1254.7px;width:355.7px;height:2px;background:#8e8e8e"></div>
<div style="left:697.3px;top:1254.7px;width:7px;height:2px;background:#c8c8c8"></div>
<span class="t" style="left:673.51px;top:1245px;font-size:21px;color:#d4d4d4;transform:scaleX(0.9500);">98</span>
<div style="left:704.3px;top:1305px;width:355.7px;height:2px;background:#8e8e8e"></div>
<div style="left:697.3px;top:1305px;width:7px;height:2px;background:#c8c8c8"></div>
<span class="t" style="left:673.51px;top:1295px;font-size:21px;color:#d4d4d4;transform:scaleX(0.9500);">96</span>
<div style="left:704.3px;top:1329.8px;width:2px;height:9px;background:#c8c8c8"></div>
<div style="left:1058px;top:1329.8px;width:2px;height:9px;background:#c8c8c8"></div>
<div style="left:738.5px;top:1230.5px;width:94px;height:99.3px;background:linear-gradient(#ff5c5c,#ff4848);border:2px solid #000;border-bottom:none;box-sizing:border-box"></div>
<div style="left:833.3px;top:1230.5px;width:93.5px;height:99.3px;background:linear-gradient(#5cb05c,#48a448);border:2px solid #000;border-bottom:none;box-sizing:border-box"></div>
<div style="left:927px;top:1193px;width:94.3px;height:136.8px;background:linear-gradient(#5858ff,#4040ff);border:2px solid #000;border-bottom:none;box-sizing:border-box"></div>
<div style="left:704.3px;top:1328.8px;width:355.7px;height:2px;background:#8e8e8e"></div>
<span class="t" style="left:856.5px;top:1335px;font-size:21px;color:#d4d4d4;transform:scaleX(0.9495);">100%</span>
<span class="t" style="left:801.7px;top:1049px;font-size:21.7px;color:#d4d4d4;transform:scaleX(0.8899);">RGB Balance</span>
<div style="left:1086.5px;top:1030.5px;width:1032px;height:334.5px;background:#0c0c0c"></div>
<div style="left:1088.2px;top:1032px;width:1029px;height:40.3px;background:linear-gradient(#2c2c2c,#333 48%,#191919 50%,#121212)"></div>
<span class="t" style="left:1410.8px;top:1044px;font-size:19.6px;color:#f6f6f6;transform:scaleX(1.4403);">20%</span>
<span class="t" style="left:1561.3px;top:1044px;font-size:19.6px;color:#f6f6f6;transform:scaleX(1.4403);">40%</span>
<span class="t" style="left:1711.8px;top:1044px;font-size:19.6px;color:#f6f6f6;transform:scaleX(1.4403);">60%</span>
<span class="t" style="left:1862.1px;top:1044px;font-size:19.6px;color:#f6f6f6;transform:scaleX(1.4403);">80%</span>
<span class="t" style="left:2005px;top:1044px;font-size:19.6px;color:#f6f6f6;transform:scaleX(1.4462);">100%</span>
<div style="left:1088.2px;top:1072.2px;width:1029px;height:36.65px;background:#404040"></div>
<span class="t" style="left:1114.7px;top:1082px;font-size:19.3px;color:#f0f0f0;font-weight:700;transform:scaleX(1.5886);">x: CIE31</span>
<span class="t" style="left:1372.6px;top:1082px;font-size:19.3px;color:#f0f0f0;transform:scaleX(1.6262);-webkit-text-stroke:0.25px #f0f0f0;">0.3349</span>
<span class="t" style="left:1523px;top:1082px;font-size:19.3px;color:#f0f0f0;transform:scaleX(1.6262);-webkit-text-stroke:0.25px #f0f0f0;">0.3554</span>
<span class="t" style="left:1673.6px;top:1082px;font-size:19.3px;color:#f0f0f0;transform:scaleX(1.6262);-webkit-text-stroke:0.25px #f0f0f0;">0.3789</span>
<span class="t" style="left:1824px;top:1082px;font-size:19.3px;color:#f0f0f0;transform:scaleX(1.6262);-webkit-text-stroke:0.25px #f0f0f0;">0.3978</span>
<span class="t" style="left:1974.5px;top:1082px;font-size:19.3px;color:#f0f0f0;transform:scaleX(1.6262);-webkit-text-stroke:0.25px #f0f0f0;">0.4191</span>
<div style="left:1088.2px;top:1108.65px;width:1029px;height:36.65px;background:#818181"></div>
<span class="t" style="left:1114.7px;top:1118px;font-size:19.3px;color:#ededed;font-weight:700;transform:scaleX(1.5886);">y: CIE31</span>
<span class="t" style="left:1372.6px;top:1118px;font-size:19.3px;color:#ededed;transform:scaleX(1.6262);-webkit-text-stroke:0.25px #ededed;">0.3643</span>
<span class="t" style="left:1523px;top:1118px;font-size:19.3px;color:#ededed;transform:scaleX(1.6262);-webkit-text-stroke:0.25px #ededed;">0.4006</span>
<span class="t" style="left:1673.6px;top:1118px;font-size:19.3px;color:#ededed;transform:scaleX(1.6262);-webkit-text-stroke:0.25px #ededed;">0.4361</span>
<span class="t" style="left:1824px;top:1118px;font-size:19.3px;color:#ededed;transform:scaleX(1.6262);-webkit-text-stroke:0.25px #ededed;">0.4669</span>
<span class="t" style="left:1974.5px;top:1118px;font-size:19.3px;color:#ededed;transform:scaleX(1.6262);-webkit-text-stroke:0.25px #ededed;">0.5051</span>
<div style="left:1088.2px;top:1145.1px;width:1029px;height:36.65px;background:#404040"></div>
<span class="t" style="left:1114.7px;top:1155px;font-size:19.3px;color:#f0f0f0;font-weight:700;transform:scaleX(1.4759);">Y</span>
<span class="t" style="left:1372.6px;top:1155px;font-size:19.3px;color:#f0f0f0;transform:scaleX(1.6211);-webkit-text-stroke:0.25px #f0f0f0;">189.5287</span>
<span class="t" style="left:1523px;top:1155px;font-size:19.3px;color:#f0f0f0;transform:scaleX(1.6211);-webkit-text-stroke:0.25px #f0f0f0;">186.9128</span>
<span class="t" style="left:1673.6px;top:1155px;font-size:19.3px;color:#f0f0f0;transform:scaleX(1.6211);-webkit-text-stroke:0.25px #f0f0f0;">183.4512</span>
<span class="t" style="left:1824px;top:1155px;font-size:19.3px;color:#f0f0f0;transform:scaleX(1.6211);-webkit-text-stroke:0.25px #f0f0f0;">181.5632</span>
<span class="t" style="left:1974.5px;top:1155px;font-size:19.3px;color:#f0f0f0;transform:scaleX(1.6211);-webkit-text-stroke:0.25px #f0f0f0;">179.5336</span>
<div style="left:1088.2px;top:1181.55px;width:1029px;height:36.65px;background:#818181"></div>
<span class="t" style="left:1114.7px;top:1191px;font-size:19.3px;color:#ededed;font-weight:700;transform:scaleX(1.6527);">Target x:CIE31</span>
<span class="t" style="left:1372.6px;top:1191px;font-size:19.3px;color:#ededed;transform:scaleX(1.6262);-webkit-text-stroke:0.25px #ededed;">0.3344</span>
<span class="t" style="left:1523px;top:1191px;font-size:19.3px;color:#ededed;transform:scaleX(1.6262);-webkit-text-stroke:0.25px #ededed;">0.3564</span>
<span class="t" style="left:1673.6px;top:1191px;font-size:19.3px;color:#ededed;transform:scaleX(1.6262);-webkit-text-stroke:0.25px #ededed;">0.3773</span>
<span class="t" style="left:1824px;top:1191px;font-size:19.3px;color:#ededed;transform:scaleX(1.6262);-webkit-text-stroke:0.25px #ededed;">0.3969</span>
<span class="t" style="left:1974.5px;top:1191px;font-size:19.3px;color:#ededed;transform:scaleX(1.6262);-webkit-text-stroke:0.25px #ededed;">0.4193</span>
<div style="left:1088.2px;top:1218px;width:1029px;height:36.65px;background:#404040"></div>
<span class="t" style="left:1114.7px;top:1228px;font-size:19.3px;color:#f0f0f0;font-weight:700;transform:scaleX(1.6527);">Target y:CIE31</span>
<span class="t" style="left:1372.6px;top:1228px;font-size:19.3px;color:#f0f0f0;transform:scaleX(1.6262);-webkit-text-stroke:0.25px #f0f0f0;">0.3648</span>
<span class="t" style="left:1523px;top:1228px;font-size:19.3px;color:#f0f0f0;transform:scaleX(1.6262);-webkit-text-stroke:0.25px #f0f0f0;">0.4013</span>
<span class="t" style="left:1673.6px;top:1228px;font-size:19.3px;color:#f0f0f0;transform:scaleX(1.6262);-webkit-text-stroke:0.25px #f0f0f0;">0.4358</span>
<span class="t" style="left:1824px;top:1228px;font-size:19.3px;color:#f0f0f0;transform:scaleX(1.6262);-webkit-text-stroke:0.25px #f0f0f0;">0.4682</span>
<span class="t" style="left:1974.5px;top:1228px;font-size:19.3px;color:#f0f0f0;transform:scaleX(1.6262);-webkit-text-stroke:0.25px #f0f0f0;">0.5053</span>
<div style="left:1088.2px;top:1254.45px;width:1029px;height:36.65px;background:#818181"></div>
<span class="t" style="left:1114.7px;top:1264px;font-size:19.3px;color:#ededed;font-weight:700;transform:scaleX(1.6967);">Target Y</span>
<span class="t" style="left:1372.6px;top:1264px;font-size:19.3px;color:#ededed;transform:scaleX(1.6211);-webkit-text-stroke:0.25px #ededed;">195.8174</span>
<span class="t" style="left:1523px;top:1264px;font-size:19.3px;color:#ededed;transform:scaleX(1.6211);-webkit-text-stroke:0.25px #ededed;">192.3803</span>
<span class="t" style="left:1673.6px;top:1264px;font-size:19.3px;color:#ededed;transform:scaleX(1.6211);-webkit-text-stroke:0.25px #ededed;">189.7393</span>
<span class="t" style="left:1824px;top:1264px;font-size:19.3px;color:#ededed;transform:scaleX(1.6211);-webkit-text-stroke:0.25px #ededed;">187.6667</span>
<span class="t" style="left:1974.5px;top:1264px;font-size:19.3px;color:#ededed;transform:scaleX(1.6211);-webkit-text-stroke:0.25px #ededed;">185.6629</span>
<div style="left:1088.2px;top:1290.9px;width:1029px;height:36.65px;background:#404040"></div>
<span class="t" style="left:1114.7px;top:1301px;font-size:19.3px;color:#f0f0f0;font-weight:700;transform:scaleX(1.6790);">ΔE 2000</span>
<span class="t" style="left:1372.6px;top:1301px;font-size:19.3px;color:#f0f0f0;transform:scaleX(1.6262);-webkit-text-stroke:0.25px #f0f0f0;">0.8625</span>
<span class="t" style="left:1523px;top:1301px;font-size:19.3px;color:#f0f0f0;transform:scaleX(1.6262);-webkit-text-stroke:0.25px #f0f0f0;">0.7109</span>
<span class="t" style="left:1673.6px;top:1301px;font-size:19.3px;color:#f0f0f0;transform:scaleX(1.6262);-webkit-text-stroke:0.25px #f0f0f0;">0.8263</span>
<span class="t" style="left:1824px;top:1301px;font-size:19.3px;color:#f0f0f0;transform:scaleX(1.6262);-webkit-text-stroke:0.25px #f0f0f0;">0.8521</span>
<span class="t" style="left:1974.5px;top:1301px;font-size:19.3px;color:#f0f0f0;transform:scaleX(1.6262);-webkit-text-stroke:0.25px #f0f0f0;">0.7776</span>
<div style="left:1088.2px;top:1327.35px;width:1029px;height:36.65px;background:#818181"></div>
<span class="t" style="left:1114.7px;top:1337px;font-size:19.3px;color:#ededed;font-weight:700;transform:scaleX(1.6095);">ΔE ITP</span>
<span class="t" style="left:1372.6px;top:1337px;font-size:19.3px;color:#ededed;transform:scaleX(1.6262);-webkit-text-stroke:0.25px #ededed;">2.4758</span>
<span class="t" style="left:1523px;top:1337px;font-size:19.3px;color:#ededed;transform:scaleX(1.6262);-webkit-text-stroke:0.25px #ededed;">2.2407</span>
<span class="t" style="left:1673.6px;top:1337px;font-size:19.3px;color:#ededed;transform:scaleX(1.6262);-webkit-text-stroke:0.25px #ededed;">2.6362</span>
<span class="t" style="left:1824px;top:1337px;font-size:19.3px;color:#ededed;transform:scaleX(1.6262);-webkit-text-stroke:0.25px #ededed;">2.5952</span>
<span class="t" style="left:1974.5px;top:1337px;font-size:19.3px;color:#ededed;transform:scaleX(1.6262);-webkit-text-stroke:0.25px #ededed;">2.5452</span>
<!-- s_cie -->
<div style="left:1577.5px;top:231px;width:980px;height:789px;background:#1c1c1c"></div>
<div style="left:1587px;top:241px;width:963px;height:770px;background:#333"></div>
<span class="t" style="left:2009.2px;top:250px;font-size:21.7px;color:#d4d4d4;transform:scaleX(0.9255);">CIE 1976 u&#x27;v&#x27;</span>
<div style="left:1639px;top:273.3px;width:907.2px;height:698px;background:#232323;border:2px solid #8e8e8e;box-sizing:border-box"></div>
<div class="cie" style="left:1641px;top:275px;width:903px;height:694px;overflow:hidden;clip-path:polygon(384.75px 674.87px,382.25px 675.01px,379.82px 674.1px,377.71px 672.79px,376.06px 671.64px,374.18px 670.22px,372px 668.53px,369.45px 666.54px,368.04px 665.42px,366.54px 664.23px,364.96px 662.95px,363.31px 661.58px,361.58px 660.12px,359.77px 658.55px,357.86px 656.9px,355.85px 655.17px,353.75px 653.37px,351.55px 651.51px,349.24px 649.58px,346.81px 647.55px,344.24px 645.41px,341.52px 643.16px,338.65px 640.78px,335.63px 638.27px,332.45px 635.63px,329.13px 632.88px,325.67px 630.03px,322.08px 627.06px,318.37px 623.99px,314.52px 620.78px,310.53px 617.42px,306.36px 613.86px,302px 610.1px,297.47px 606.1px,292.76px 601.88px,287.9px 597.43px,282.88px 592.74px,277.73px 587.8px,272.41px 582.57px,266.86px 576.94px,261.03px 570.81px,254.84px 564.04px,248.19px 556.51px,241.09px 548.18px,233.55px 539.07px,225.63px 529.22px,217.43px 518.71px,209.01px 507.61px,200.37px 495.86px,191.51px 483.48px,182.44px 470.43px,173.17px 456.69px,163.72px 442.29px,154.16px 427.28px,144.53px 411.77px,134.87px 395.85px,125.22px 379.63px,115.61px 363.2px,106.11px 346.59px,96.78px 329.83px,87.73px 313.01px,79.06px 296.21px,70.88px 279.57px,63.2px 263.19px,56.01px 247.14px,49.29px 231.46px,42.99px 216.21px,37.12px 201.45px,31.72px 187.26px,26.82px 173.72px,22.41px 160.87px,18.5px 148.74px,15.09px 137.36px,12.15px 126.7px,9.65px 116.72px,7.57px 107.4px,5.88px 98.71px,4.57px 90.64px,3.62px 83.19px,3.02px 76.32px,2.77px 69.98px,2.84px 64.1px,3.21px 58.64px,3.87px 53.58px,4.81px 48.9px,6.04px 44.61px,7.54px 40.69px,9.3px 37.11px,11.3px 33.87px,13.51px 30.96px,15.92px 28.37px,18.55px 26.09px,21.37px 24.11px,24.37px 22.39px,27.53px 20.91px,30.84px 19.66px,34.28px 18.62px,37.86px 17.77px,41.57px 17.09px,45.39px 16.56px,49.33px 16.13px,53.36px 15.8px,57.48px 15.54px,61.67px 15.35px,65.91px 15.22px,70.18px 15.14px,74.44px 15.1px,78.69px 15.09px,82.95px 15.11px,87.22px 15.16px,91.52px 15.24px,95.85px 15.36px,100.23px 15.51px,104.65px 15.69px,109.13px 15.9px,113.66px 16.13px,118.26px 16.4px,122.92px 16.7px,127.67px 17.02px,132.49px 17.37px,137.39px 17.75px,142.37px 18.15px,147.43px 18.58px,152.58px 19.03px,157.83px 19.51px,163.18px 20.01px,168.62px 20.53px,174.18px 21.07px,179.84px 21.63px,185.62px 22.22px,191.51px 22.83px,197.52px 23.45px,203.65px 24.1px,209.91px 24.77px,216.3px 25.46px,222.82px 26.17px,229.48px 26.9px,236.27px 27.65px,243.2px 28.42px,250.27px 29.21px,257.49px 30.02px,264.86px 30.85px,272.38px 31.69px,280.05px 32.56px,287.87px 33.45px,295.85px 34.36px,303.98px 35.29px,312.28px 36.24px,320.73px 37.21px,329.34px 38.2px,338.11px 39.21px,347.04px 40.24px,356.13px 41.29px,365.38px 42.35px,374.77px 43.44px,384.32px 44.54px,394.02px 45.66px,403.86px 46.8px,413.85px 47.95px,423.98px 49.11px,434.24px 50.3px,444.63px 51.49px,455.13px 52.7px,465.74px 53.92px,476.46px 55.15px,487.27px 56.39px,498.17px 57.65px,509.17px 58.92px,520.23px 60.2px,531.31px 61.48px,542.36px 62.76px,553.33px 64.03px,564.17px 65.28px,574.89px 66.52px,585.53px 67.74px,596.12px 68.96px,606.69px 70.18px,617.26px 71.4px,627.8px 72.61px,638.24px 73.81px,648.53px 75px,658.62px 76.16px,668.45px 77.29px,678.05px 78.39px,687.42px 79.46px,696.58px 80.51px,705.55px 81.54px,714.31px 82.55px,722.85px 83.53px,731.17px 84.49px,739.25px 85.42px,747.08px 86.33px,754.66px 87.21px,761.99px 88.05px,769.07px 88.87px,775.91px 89.66px,782.5px 90.42px,788.87px 91.16px,795.01px 91.86px,800.95px 92.54px,806.67px 93.2px,812.2px 93.84px,817.53px 94.45px,822.66px 95.04px,827.63px 95.61px,832.45px 96.17px,837.15px 96.71px,841.74px 97.24px,846.21px 97.75px,850.56px 98.25px,854.76px 98.74px,858.83px 99.21px,862.75px 99.66px,866.55px 100.1px,870.21px 100.52px,873.73px 100.93px,877.13px 101.32px,880.39px 101.7px,883.54px 102.06px,886.55px 102.41px,889.41px 102.74px,892.12px 103.05px,894.67px 103.35px,897.05px 103.62px,901.4px 104.12px,905.37px 104.58px,909.01px 105px,912.29px 105.38px,915.23px 105.72px,917.82px 106.02px,920.97px 106.38px,923.42px 106.67px,926.36px 107.01px,928.83px 107.29px,931.64px 107.62px,934.35px 107.93px,936.69px 108.2px,936.81px 105.46px)"><i></i><i></i><i></i><i></i><i></i><i></i><i></i><i style="margin-left:47px;width:68px;background:linear-gradient(90deg,#090 0,#090 67.5px)"></i><i style="margin-left:33px;width:111px;background:linear-gradient(90deg,#090 0,#090 110.5px)"></i><i style="margin-left:26px;width:141px;background:linear-gradient(90deg,#090 0,#090 140.5px)"></i><i style="margin-left:21px;width:166px;background:linear-gradient(90deg,#090 0,#029900 164.5px,#029900 165.5px)"></i><i style="margin-left:18px;width:189px;background:linear-gradient(90deg,#090 0,#019900 167.5px,#169900 188.5px)"></i><i style="margin-left:15px;width:210px;background:linear-gradient(90deg,#090 0,#019900 170.5px,#299900 209.5px)"></i><i style="margin-left:12px;width:231px;background:linear-gradient(90deg,#009901 0,#029900 174.5px,#3e9900 230.5px)"></i><i style="margin-left:10px;width:251px;background:linear-gradient(90deg,#009903 0,#019900 176.5px,#3f9900 233.5px,#549900 250.5px)"></i><i style="margin-left:9px;width:270px;background:linear-gradient(90deg,#009904 0,#090 142.5px,#029900 178.5px,#409900 235.5px,#6c9900 269.5px)"></i><i style="margin-left:7px;width:290px;background:linear-gradient(90deg,#009906 0,#090 148.5px,#029900 180.5px,#409900 237.5px,#829900 286.5px,#879900 289.5px)"></i><i class="h" style="margin-left:7px;width:298px;background:linear-gradient(90deg,#009907 0,#090 158.5px,#019900 180.5px,#3e9900 236.5px,#819900 285.5px,#939900 297.5px)"></i><i class="h" style="margin-left:6px;width:308px;background:linear-gradient(90deg,#009907 0,#090 167.5px,#029900 182.5px,#419900 239.5px,#849900 288.5px,#989700 302.5px,#999000 307.5px)"></i><i class="h" style="margin-left:5px;width:318px;background:linear-gradient(90deg,#009908 0,#090 177.5px,#069900 187.5px,#469900 244.5px,#899900 292.5px,#999700 303.5px,#998400 317.5px)"></i><i class="h" style="margin-left:5px;width:327px;background:linear-gradient(90deg,#009909 0,#019900 182.5px,#3d9900 237.5px,#809900 286.5px,#999700 303.5px,#997900 326.5px)"></i><i class="h" style="margin-left:4px;width:336px;background:linear-gradient(90deg,#00990a 0,#029a00 184.5px,#409900 240.5px,#819900 288.5px,#999700 304.5px,#997300 332.5px,#997000 335.5px)"></i><i class="h" style="margin-left:4px;width:345px;background:linear-gradient(90deg,#00990a 0,#009a00 182.5px,#089d00 190.5px,#139a00 201.5px,#539900 255.5px,#989800 303.5px,#997200 333.5px,#996700 344.5px)"></i><i class="h" style="margin-left:3px;width:355px;background:linear-gradient(90deg,#00990b 0,#009a00 181.5px,#03a800 186.5px,#09a700 192.5px,#0d9e00 196.5px,#279900 220.5px,#679900 271.5px,#989800 304.5px,#997200 334.5px,#995f00 354.5px)"></i><i class="h" style="margin-left:3px;width:363px;background:linear-gradient(90deg,#00990c 0,#009a01 181.5px,#00a301 183.5px,#02b501 185.5px,#04be01 187.5px,#09bd00 191.5px,#0bb600 193.5px,#0dac00 195.5px,#11a900 199.5px,#15a700 203.5px,#199e00 207.5px,#319900 229.5px,#739900 279.5px,#989800 304.5px,#997100 334.5px,#995900 362.5px)"></i><i class="h" style="margin-left:3px;width:372px;background:linear-gradient(90deg,#00990c 0,#009b01 181.5px,#009f01 182.5px,#00a901 183.5px,#02c801 185.5px,#03d301 186.5px,#06d901 188.5px,#0ad801 191.5px,#0cd001 193.5px,#0ec301 195.5px,#12be01 198.5px,#17bd00 202.5px,#18b600 204.5px,#1aac00 206.5px,#1fa900 211.5px,#22a500 214.5px,#249e00 217.5px,#3f9900 241.5px,#829900 289.5px,#999700 305.5px,#997200 333.5px,#995300 370.5px,#995200 371.5px)"></i><i class="h" style="margin-left:2px;width:382px;background:linear-gradient(90deg,#00990d 0,#009b02 182.5px,#009f02 183.5px,#00ab02 184.5px,#02d402 186.5px,#03e403 187.5px,#04ec03 188.5px,#09ef02 191.5px,#0cec02 193.5px,#10dd02 196.5px,#16da01 200.5px,#1ad801 203.5px,#1cd001 205.5px,#1dc301 207.5px,#20be01 210.5px,#25bb00 214.5px,#26ac00 217.5px,#2aa900 221.5px,#2fa700 225.5px,#319e00 229.5px,#4d9900 253.5px,#909900 299.5px,#999700 306.5px,#997200 334.5px,#995300 371.5px,#994c00 381.5px)"></i><i class="h" style="margin-left:2px;width:390px;background:linear-gradient(90deg,#00990e 0,#009a03 182.5px,#009f03 183.5px,#00aa03 184.5px,#01c003 185.5px,#02d904 186.5px,#03ed04 187.5px,#04f604 188.5px,#08fa04 190.5px,#0ef603 194.5px,#13f003 197.5px,#1cee02 203.5px,#1fe702 205.5px,#20dd02 207.5px,#29d801 213.5px,#2ad001 215.5px,#2bc301 217.5px,#2ebe01 220.5px,#33bd01 224.5px,#34b600 226.5px,#34ac00 228.5px,#38a900 232.5px,#3da700 236.5px,#3f9e00 240.5px,#599900 262.5px,#989800 305.5px,#997200 334.5px,#995200 371.5px,#994700 389.5px)"></i><i class="h" style="margin-left:2px;width:399px;background:linear-gradient(90deg,#00990f 0,#009a04 182.5px,#009e04 183.5px,#00a904 184.5px,#01bf04 185.5px,#02da05 186.5px,#03ef05 187.5px,#04fa06 188.5px,#08fe05 190.5px,#1ff903 204.5px,#25f003 208.5px,#2dee02 213.5px,#2fe702 215.5px,#30dd02 217.5px,#36da02 221.5px,#3bd801 224.5px,#3bd001 226.5px,#3bc301 228.5px,#3ebe01 231.5px,#43bd00 235.5px,#44b600 237.5px,#43ac00 239.5px,#48a900 244.5px,#4ba500 247.5px,#4c9e00 250.5px,#6a9900 274.5px,#989700 305.5px,#997200 334.5px,#995200 371.5px,#994200 398.5px)"></i><i class="h" style="margin-left:1px;width:409px;background:linear-gradient(90deg,#00990f 0,#009a05 183.5px,#009d05 184.5px,#00a805 185.5px,#01be06 186.5px,#01d806 187.5px,#03ee07 188.5px,#04fa07 189.5px,#07ff07 191.5px,#23fc05 207.5px,#31f904 215.5px,#36f003 219.5px,#40ee02 225.5px,#42e702 227.5px,#42dd02 229.5px,#48da02 233.5px,#4dd801 236.5px,#4dd001 238.5px,#4bc301 240.5px,#4fbe01 243.5px,#53bb00 247.5px,#51ac00 250.5px,#55a900 254.5px,#5aa700 258.5px,#5b9e00 262.5px,#7a9900 286.5px,#989700 306.5px,#997300 334.5px,#995300 371.5px,#993e00 408.5px)"></i><i class="h" style="margin-left:1px;width:417px;background:linear-gradient(90deg,#009910 0,#009a06 183.5px,#009d06 184.5px,#00a706 185.5px,#00bb07 186.5px,#01d507 187.5px,#02ec08 188.5px,#04f909 189.5px,#05fe09 190.5px,#33fd05 216.5px,#45f904 226.5px,#4af003 230.5px,#55ee02 236.5px,#56e702 238.5px,#56dd02 240.5px,#5ed801 246.5px,#5ed001 248.5px,#5bc301 250.5px,#5ebe01 253.5px,#64bd01 257.5px,#64b600 259.5px,#61ac00 261.5px,#65a900 265.5px,#6aa700 269.5px,#6b9e00 273.5px,#899900 295.5px,#999700 306.5px,#997200 334.5px,#995300 371.5px,#993a00 416.5px)"></i><i class="h" style="margin-left:1px;width:426px;background:linear-gradient(90deg,#091 0,#009a07 183.5px,#009c07 184.5px,#00a507 185.5px,#00b608 186.5px,#02e709 188.5px,#04f60a 189.5px,#05fd0a 190.5px,#18ff09 201.5px,#48fd05 227.5px,#5af904 237.5px,#5ff003 241.5px,#68ee03 246.5px,#69e702 248.5px,#68dd02 250.5px,#6eda02 254.5px,#73d801 257.5px,#72d001 259.5px,#6ec301 261.5px,#71be01 264.5px,#77bd01 268.5px,#76b600 270.5px,#73ac00 272.5px,#78a900 277.5px,#7aa500 280.5px,#7a9e00 283.5px,#999700 306.5px,#997200 334.5px,#995200 371.5px,#993600 424.5px,#993600 425.5px)"></i><i class="h" style="margin-left:1px;width:435px;background:linear-gradient(90deg,#091 0,#009908 183.5px,#009b08 184.5px,#00a208 185.5px,#00b108 186.5px,#02e20b 188.5px,#03f30b 189.5px,#05fc0c 190.5px,#0aff0b 193.5px,#5efd05 238.5px,#6ff904 247.5px,#73f003 251.5px,#7eee03 257.5px,#7fe702 259.5px,#7ddd02 261.5px,#83da02 265.5px,#88d801 268.5px,#86d001 270.5px,#82c301 272.5px,#84be01 275.5px,#89bb01 279.5px,#83ac00 282.5px,#87a900 286.5px,#8da700 290.5px,#8b9e00 294.5px,#989a00 304.5px,#997300 333.5px,#995400 369.5px,#993700 421.5px,#993200 434.5px)"></i><i class="h" style="margin-left:0px;width:444px;background:linear-gradient(90deg,#009912 0,#009a09 185.5px,#009f09 186.5px,#00ac09 187.5px,#01c30a 188.5px,#02dd0c 189.5px,#03f10d 190.5px,#05fb0d 191.5px,#08ff0d 193.5px,#5aff07 237.5px,#74fc05 250.5px,#86f904 259.5px,#8af003 263.5px,#96ee03 269.5px,#96e702 271.5px,#93dd02 273.5px,#9cd801 279.5px,#9ad001 281.5px,#94c301 283.5px,#97be01 286.5px,#9ebd01 290.5px,#9bb600 292.5px,#96ac00 294.5px,#9aa900 298.5px,#a0a700 302.5px,#9d9a00 308.5px,#9a8300 321.5px,#996400 349.5px,#994600 391.5px,#992f00 443.5px)"></i><i class="h" style="margin-left:0px;width:453px;background:linear-gradient(90deg,#009913 0,#009a09 185.5px,#009e0a 186.5px,#00aa0a 187.5px,#01bf0b 188.5px,#02da0d 189.5px,#03f00e 190.5px,#04fb0f 191.5px,#08ff0f 193.5px,#58ff09 236.5px,#8cfc05 261.5px,#9ff904 270.5px,#a2f003 274.5px,#acee03 279.5px,#ace702 281.5px,#a8dd02 283.5px,#afda02 287.5px,#b4d801 290.5px,#b1d001 292.5px,#aac301 294.5px,#acbe01 297.5px,#b4bd01 301.5px,#b1b600 303.5px,#a9a800 306.5px,#a79c00 312.5px,#9e8e00 316.5px,#9a7500 333.5px,#995700 365.5px,#993a00 414.5px,#992c00 452.5px)"></i><i class="h" style="margin-left:0px;width:462px;background:linear-gradient(90deg,#009914 0,#009a0a 185.5px,#009d0b 186.5px,#00a80b 187.5px,#01be0d 188.5px,#01d90e 189.5px,#03ee10 190.5px,#04fa10 191.5px,#08ff10 193.5px,#58ff0b 236.5px,#a4fd06 271.5px,#b6f904 280.5px,#b9f004 284.5px,#c7ee03 290.5px,#c5e702 292.5px,#c1dd02 294.5px,#c7da02 298.5px,#cdd801 301.5px,#c9d001 303.5px,#c0c201 305.5px,#bbaf01 312.5px,#ac9c00 315.5px,#a99300 319.5px,#a78b00 323.5px,#9e7f00 327.5px,#996700 346.5px,#994900 385.5px,#992e00 444.5px,#992900 461.5px)"></i><i class="h" style="margin-left:0px;width:470px;background:linear-gradient(90deg,#009914 0,#009a0b 185.5px,#009d0c 186.5px,#00a70c 187.5px,#01bb0e 188.5px,#01d50f 189.5px,#02ec11 190.5px,#04f912 191.5px,#06fe12 192.5px,#56ff0d 235.5px,#b1fe07 276.5px,#d2f904 291.5px,#d4f004 295.5px,#e2ee03 301.5px,#e0e703 303.5px,#d9d902 306.5px,#d8cc01 311.5px,#d0c001 313.5px,#c3b001 315.5px,#bea701 318.5px,#bda001 322.5px,#b69700 324.5px,#ac8b00 326.5px,#a98300 330.5px,#a77d00 334.5px,#9e7200 338.5px,#995c00 358.5px,#993f00 403.5px,#992600 469.5px)"></i><i class="h" style="margin-left:0px;width:479px;background:linear-gradient(90deg,#009915 0,#009a0c 185.5px,#009c0c 186.5px,#00a50d 187.5px,#00b60e 188.5px,#02e712 190.5px,#04f613 191.5px,#05fd14 192.5px,#19ff12 203.5px,#6bff0d 245.5px,#c7fe07 285.5px,#eff904 302.5px,#eee103 311.5px,#e7d602 313.5px,#ddc802 315.5px,#dabd02 319.5px,#d8b601 322.5px,#d0ab01 324.5px,#c39d01 326.5px,#be9501 329.5px,#bd8f00 333.5px,#b68700 335.5px,#ac7d00 337.5px,#a97500 342.5px,#a56f00 345.5px,#9e6800 348.5px,#995200 371.5px,#993600 423.5px,#992300 478.5px)"></i><i class="h" style="margin-left:0px;width:488px;background:linear-gradient(90deg,#009916 0,#00990d 185.5px,#009b0d 186.5px,#00a20e 187.5px,#00b10f 188.5px,#02e213 190.5px,#03f314 191.5px,#05fc15 192.5px,#0aff15 195.5px,#5cff10 238.5px,#b1ff0b 276.5px,#f6fd06 303.5px,#faf105 309.5px,#f6e304 313.5px,#f0d604 316.5px,#eec803 322.5px,#e7be02 324.5px,#ddb202 326.5px,#daa901 330.5px,#d8a301 333.5px,#d09a01 335.5px,#c38d01 337.5px,#be8601 340.5px,#bb7f00 344.5px,#ac7200 347.5px,#a96c00 351.5px,#a76700 355.5px,#9e5e00 359.5px,#994a00 383.5px,#992f00 440.5px,#992100 487.5px)"></i><i class="h" style="margin-left:0px;width:496px;background:linear-gradient(90deg,#009917 0,#009a0e 186.5px,#009f0f 187.5px,#00ac10 188.5px,#01c312 189.5px,#02dd14 190.5px,#03f116 191.5px,#05fb17 192.5px,#08ff17 194.5px,#5aff12 237.5px,#afff0d 275.5px,#fcfd08 305.5px,#fde906 313.5px,#f9cf04 323.5px,#f0bf03 327.5px,#eeb302 333.5px,#e7ab02 335.5px,#dda002 337.5px,#d89401 343.5px,#d08c01 345.5px,#c38001 347.5px,#be7a01 350.5px,#bd7500 354.5px,#b66f00 356.5px,#ac6700 358.5px,#a96100 362.5px,#a75d00 366.5px,#9e5500 370.5px,#994500 392.5px,#992a00 454.5px,#991f00 495.5px)"></i><i class="h" style="margin-left:0px;width:505px;background:linear-gradient(90deg,#009917 0,#009a0f 186.5px,#009e10 187.5px,#0a1 188.5px,#01bf13 189.5px,#02da15 190.5px,#03f017 191.5px,#05fb18 192.5px,#08ff18 194.5px,#5aff14 237.5px,#adff0f 274.5px,#fdfe0a 305.5px,#fed906 320.5px,#f9b904 334.5px,#f0ac03 338.5px,#eea302 343.5px,#e79b02 345.5px,#dd9202 347.5px,#da8a01 351.5px,#d88601 354.5px,#d07e01 356.5px,#c37401 358.5px,#be6f01 361.5px,#bd6a00 365.5px,#b66500 367.5px,#ac5d00 369.5px,#a95800 374.5px,#a55400 377.5px,#9e4e00 380.5px,#993e00 404.5px,#992500 472.5px,#991c00 504.5px)"></i><i class="h" style="margin-left:0px;width:514px;background:linear-gradient(90deg,#009918 0,#009a10 186.5px,#009d11 187.5px,#00a812 188.5px,#01be14 189.5px,#01d916 190.5px,#03ee19 191.5px,#04fa1a 192.5px,#08ff1a 194.5px,#59ff15 237.5px,#adff11 274.5px,#fdfe0c 305.5px,#fec406 330.5px,#f9a803 344.5px,#f09c03 348.5px,#ee9302 354.5px,#e78c02 356.5px,#dd8402 358.5px,#da7d01 362.5px,#d87901 365.5px,#d07201 367.5px,#c36901 369.5px,#be6501 372.5px,#bb6000 376.5px,#ac5600 379.5px,#a95100 383.5px,#a74e00 387.5px,#9e4700 391.5px,#993900 415.5px,#992000 489.5px,#991a00 513.5px)"></i><i class="h" style="margin-left:0px;width:522px;background:linear-gradient(90deg,#009919 0,#009a11 186.5px,#009d11 187.5px,#00a712 188.5px,#01bb15 189.5px,#01d517 190.5px,#03ec1a 191.5px,#04f91b 192.5px,#06fe1c 193.5px,#57ff17 236.5px,#aaff13 273.5px,#fdfd0e 305.5px,#ffc708 329.5px,#fca705 346.5px,#f99803 355.5px,#f08d03 359.5px,#ee8502 365.5px,#e77f02 367.5px,#dd7701 369.5px,#d86f01 375.5px,#d06901 377.5px,#c36101 379.5px,#be5c01 382.5px,#bd5900 386.5px,#b65400 388.5px,#ac4e00 390.5px,#a94a00 394.5px,#a74700 398.5px,#9e4100 402.5px,#993500 424.5px,#991c00 503.5px,#991900 521.5px)"></i><i class="h" style="margin-left:0px;width:531px;background:linear-gradient(90deg,#009919 0,#009a12 186.5px,#009c12 187.5px,#00a513 188.5px,#00b615 189.5px,#02e71b 191.5px,#04f61d 192.5px,#05fd1d 193.5px,#19ff1c 204.5px,#6aff18 245.5px,#beff14 281.5px,#fdfd10 305.5px,#ffc80a 328.5px,#fd9904 356.5px,#f98a03 366.5px,#f08002 370.5px,#ee7a02 375.5px,#e77502 377.5px,#dd6e01 379.5px,#da6801 383.5px,#d86501 386.5px,#d06001 388.5px,#c35801 390.5px,#be5400 393.5px,#bd5100 397.5px,#b64d00 399.5px,#ac4700 401.5px,#a94300 406.5px,#a54000 409.5px,#9e3c00 412.5px,#993000 436.5px,#991800 521.5px,#991700 530.5px)"></i><i class="h" style="margin-left:0px;width:540px;background:linear-gradient(90deg,#00991a 0,#009913 186.5px,#009b13 187.5px,#00a214 188.5px,#00b116 189.5px,#02e21c 191.5px,#04f31e 192.5px,#05fc1f 193.5px,#0aff1f 196.5px,#5bff1b 238.5px,#afff16 275.5px,#fdfd12 305.5px,#ffc80b 328.5px,#ff9e06 353.5px,#fc8904 368.5px,#f97e03 376.5px,#f07602 380.5px,#ee6f02 386.5px,#e76a02 388.5px,#dd6401 390.5px,#da5f01 394.5px,#d85c01 397.5px,#d05701 399.5px,#c35001 401.5px,#be4d00 404.5px,#bb4900 408.5px,#ac4200 411.5px,#a93e00 415.5px,#a73c00 419.5px,#9e3700 423.5px,#992c00 447.5px,#991500 539.5px)"></i><i class="h" style="margin-left:0px;width:548px;background:linear-gradient(90deg,#00991b 0,#009a14 187.5px,#009f15 188.5px,#00ac16 189.5px,#01c319 190.5px,#02dd1c 191.5px,#03f11f 192.5px,#05fb20 193.5px,#08ff21 195.5px,#59ff1d 237.5px,#adff18 274.5px,#fefd14 305.5px,#ffc80d 328.5px,#ff9e08 353.5px,#fc7d04 378.5px,#f97303 387.5px,#f06b02 391.5px,#ee6502 397.5px,#e76101 399.5px,#dd5b01 401.5px,#d85501 407.5px,#d05001 409.5px,#c34a01 411.5px,#be4700 414.5px,#bd4400 418.5px,#b64100 420.5px,#ac3c00 422.5px,#a93900 426.5px,#a73700 430.5px,#9e3200 434.5px,#992900 456.5px,#991300 547.5px)"></i><i class="h" style="margin-left:0px;width:557px;background:linear-gradient(90deg,#00991c 0,#009a15 187.5px,#009e16 188.5px,#00aa17 189.5px,#01bf1a 190.5px,#02da1e 191.5px,#03f020 192.5px,#05fb22 193.5px,#08ff22 195.5px,#59ff1e 237.5px,#adff1a 274.5px,#fcfe17 304.5px,#ffeb14 312.5px,#ffc00e 332.5px,#ff9708 358.5px,#fd7404 388.5px,#f96902 398.5px,#f06202 402.5px,#ee5d02 407.5px,#e75901 409.5px,#dd5401 411.5px,#da5001 415.5px,#d84e01 418.5px,#d04901 420.5px,#c34401 422.5px,#be4100 425.5px,#bd3e00 429.5px,#b63b00 431.5px,#ac3700 433.5px,#a93400 438.5px,#a53100 441.5px,#9e2e00 444.5px,#992500 468.5px,#991200 556.5px)"></i><i class="h" style="margin-left:0px;width:566px;background:linear-gradient(90deg,#00991c 0,#009a16 187.5px,#009d17 188.5px,#00a818 189.5px,#01be1b 190.5px,#02d91f 191.5px,#03ee22 192.5px,#04fa23 193.5px,#08ff24 195.5px,#59ff20 237.5px,#adff1c 274.5px,#fcfe19 304.5px,#ffe915 313.5px,#ffbc0f 334.5px,#ff9209 361.5px,#fd6903 399.5px,#f96002 408.5px,#f05a02 412.5px,#ee5501 418.5px,#e75101 420.5px,#dd4d01 422.5px,#da4901 426.5px,#d84701 429.5px,#d04301 431.5px,#c33e01 433.5px,#be3b00 436.5px,#bb3800 440.5px,#ac3300 443.5px,#a93000 447.5px,#a72e00 451.5px,#9e2a00 455.5px,#920 479.5px,#991000 565.5px)"></i><i class="h" style="margin-left:0px;width:574px;background:linear-gradient(90deg,#00991d 0,#009a17 187.5px,#009d18 188.5px,#00a719 189.5px,#01bb1c 190.5px,#01d520 191.5px,#03ec23 192.5px,#04f925 193.5px,#06fe26 194.5px,#56ff22 236.5px,#abff1f 273.5px,#fcfe1b 304.5px,#ffe617 314.5px,#ffba10 335.5px,#ff910a 362.5px,#ff6b05 398.5px,#fb5f03 411.5px,#f95802 419.5px,#f05202 423.5px,#ee4e01 429.5px,#e74a01 431.5px,#dd4601 433.5px,#d84101 439.5px,#d03e01 441.5px,#c33901 443.5px,#be3600 446.5px,#bd3400 450.5px,#b63200 452.5px,#ac2e00 454.5px,#a92c00 458.5px,#a72a00 462.5px,#9e2700 466.5px,#991f00 488.5px,#990f00 573.5px)"></i><i class="h" style="margin-left:0px;width:583px;background:linear-gradient(90deg,#00991e 0,#009a18 187.5px,#009c18 188.5px,#00a51a 189.5px,#00b61c 190.5px,#02e724 192.5px,#04f626 193.5px,#06fd27 194.5px,#19ff27 205.5px,#6cff23 246.5px,#c2ff20 282.5px,#fdfe1d 304.5px,#ffe118 316.5px,#ffb612 337.5px,#ff8d0b 365.5px,#ff6705 402.5px,#fc5703 421.5px,#f95002 430.5px,#f04b02 434.5px,#ee4801 439.5px,#e74501 441.5px,#dd4001 443.5px,#da3e01 447.5px,#d83c01 450.5px,#d03801 452.5px,#c33400 454.5px,#be3200 457.5px,#bd3000 461.5px,#b62d00 463.5px,#ac2a00 465.5px,#a92800 470.5px,#a52600 473.5px,#9e2400 476.5px,#991c00 500.5px,#990d00 582.5px)"></i><i class="h" style="margin-left:0px;width:592px;background:linear-gradient(90deg,#00991f 0,#009919 187.5px,#009b19 188.5px,#00a21a 189.5px,#00b11d 190.5px,#02e224 192.5px,#04f327 193.5px,#05fc29 194.5px,#0bff29 197.5px,#5dff26 239.5px,#b0ff22 275.5px,#fdfe1f 304.5px,#ffd919 319.5px,#ffaf12 341.5px,#ff870c 370.5px,#ff6206 408.5px,#fc5003 432.5px,#f94a02 440.5px,#f04502 444.5px,#ee4201 450.5px,#e73f01 452.5px,#dd3b01 454.5px,#da3801 458.5px,#d83701 461.5px,#d03401 463.5px,#c33000 465.5px,#be2d00 468.5px,#bb2b00 472.5px,#ac2700 475.5px,#a92500 479.5px,#a72300 483.5px,#9e2000 487.5px,#991a00 511.5px,#990c00 591.5px)"></i><i class="h" style="margin-left:0px;width:600px;background:linear-gradient(90deg,#00991f 0,#009a1a 188.5px,#009f1b 189.5px,#00ac1d 190.5px,#01c321 191.5px,#02dd25 192.5px,#03f129 193.5px,#05fb2a 194.5px,#09ff2b 196.5px,#5aff28 238.5px,#adff24 274.5px,#fdfe21 304.5px,#ffca18 326.5px,#ffa011 350.5px,#ff790b 382.5px,#ff5505 425.5px,#fc4a03 442.5px,#f94402 451.5px,#f03f02 455.5px,#ee3c01 461.5px,#e73901 463.5px,#dd3601 465.5px,#d83201 471.5px,#d02f01 473.5px,#c32c00 475.5px,#be2a00 478.5px,#bd2800 482.5px,#b62600 484.5px,#ac2300 486.5px,#a92200 490.5px,#a72000 494.5px,#9e1d00 498.5px,#991800 520.5px,#990b00 599.5px)"></i><i class="h" style="margin-left:0px;width:609px;background:linear-gradient(90deg,#009920 0,#009a1b 188.5px,#009e1c 189.5px,#00aa1e 190.5px,#01c022 191.5px,#02db26 192.5px,#03f02a 193.5px,#05fb2c 194.5px,#08ff2c 196.5px,#5aff2a 238.5px,#adff26 274.5px,#fdfe23 304.5px,#ffc81a 327.5px,#ff9d12 352.5px,#ff770c 384.5px,#ff5405 427.5px,#fc4303 453.5px,#f93e02 462.5px,#f03a02 466.5px,#ee3701 471.5px,#e73501 473.5px,#dd3101 475.5px,#da2f01 479.5px,#d82e01 482.5px,#d02b00 484.5px,#c32800 486.5px,#be2600 489.5px,#bd2500 493.5px,#b62300 495.5px,#ac2000 497.5px,#a91e00 502.5px,#a51d00 505.5px,#9e1b00 508.5px,#991500 532.5px,#990900 608.5px)"></i><i class="h" style="margin-left:0px;width:618px;background:linear-gradient(90deg,#009921 0,#009a1c 188.5px,#009e1d 189.5px,#00a91f 190.5px,#01be23 191.5px,#02da28 192.5px,#03ef2c 193.5px,#05fa2e 194.5px,#08ff2e 196.5px,#58ff2b 237.5px,#abff29 273.5px,#fdfd25 304.5px,#ffc71c 327.5px,#ff9d14 352.5px,#ff770d 384.5px,#ff5406 427.5px,#fd3e03 463.5px,#f93902 472.5px,#f03502 476.5px,#ee3201 482.5px,#e73001 484.5px,#dd2d01 486.5px,#da2b01 490.5px,#d82a01 493.5px,#d02700 495.5px,#c32400 497.5px,#be2300 500.5px,#bb2100 504.5px,#ac1d00 507.5px,#a91c00 511.5px,#a71b00 515.5px,#9e1800 519.5px,#991300 543.5px,#990800 617.5px)"></i><i class="h" style="margin-left:0px;width:626px;background:linear-gradient(90deg,#092 0,#009a1d 188.5px,#009d1e 189.5px,#00a820 190.5px,#01bd24 191.5px,#01d829 192.5px,#03ee2d 193.5px,#04fa2f 194.5px,#08ff30 196.5px,#58ff2d 237.5px,#abff2b 273.5px,#fdfd28 304.5px,#ffc71d 327.5px,#ff9e16 351.5px,#ff770e 383.5px,#ff5408 426.5px,#fd3903 473.5px,#f93402 483.5px,#f03001 487.5px,#ee2e01 493.5px,#e72c01 495.5px,#dd2901 497.5px,#d82601 503.5px,#d02400 505.5px,#c32100 507.5px,#be2000 510.5px,#bd1e00 514.5px,#b61d00 516.5px,#ac1b00 518.5px,#a91900 522.5px,#a71800 526.5px,#9e1600 530.5px,#910 552.5px,#990700 625.5px)"></i><i class="h" style="margin-left:0px;width:635px;background:linear-gradient(90deg,#092 0,#009a1e 188.5px,#009d1f 189.5px,#00a721 190.5px,#01bb25 191.5px,#01d52a 192.5px,#02ec2e 193.5px,#04f931 194.5px,#06fe31 195.5px,#56ff2f 236.5px,#a9ff2d 272.5px,#fdfd2a 304.5px,#ffc920 326.5px,#ff9f17 350.5px,#ff7910 381.5px,#ff5609 423.5px,#fd3402 484.5px,#f92f02 494.5px,#f02c01 498.5px,#ee2a01 503.5px,#e72801 505.5px,#dd2501 507.5px,#da2401 511.5px,#d82301 514.5px,#d02100 516.5px,#c31e00 518.5px,#be1d00 521.5px,#bd1b00 525.5px,#b61a00 527.5px,#ac1800 529.5px,#a91600 534.5px,#a51500 537.5px,#9e1400 540.5px,#990f00 564.5px,#990600 634.5px)"></i><i class="h" style="margin-left:0px;width:644px;background:linear-gradient(90deg,#009923 0,#009a1f 188.5px,#009c20 189.5px,#00a521 190.5px,#00b625 191.5px,#02e72f 193.5px,#04f632 194.5px,#05fd33 195.5px,#1aff33 206.5px,#6bff31 246.5px,#c0ff2e 281.5px,#fefd2c 304.5px,#ffc921 326.5px,#ff9f19 350.5px,#ff7911 381.5px,#ff550a 423.5px,#ff3604 481.5px,#fc2f02 496.5px,#f92b02 504.5px,#f02801 508.5px,#ee2601 514.5px,#e72401 516.5px,#dd2201 518.5px,#da2001 522.5px,#d81f01 525.5px,#d01d00 527.5px,#c31b00 529.5px,#be1a00 532.5px,#bb1800 536.5px,#ac1600 539.5px,#a91500 543.5px,#a71400 547.5px,#9e1200 551.5px,#990d00 575.5px,#990500 643.5px)"></i><i class="h" style="margin-left:0px;width:652px;background:linear-gradient(90deg,#009924 0,#009920 188.5px,#009b21 189.5px,#00a222 190.5px,#00b125 191.5px,#02e22f 193.5px,#03f333 194.5px,#05fc35 195.5px,#0bff35 198.5px,#5cff33 239.5px,#b0ff31 275.5px,#fcfe2f 303.5px,#ffeb2a 311.5px,#ffbe21 331.5px,#ff9518 357.5px,#ff6f10 391.5px,#ff4d09 436.5px,#fe2d03 501.5px,#f92702 515.5px,#f02401 519.5px,#ee2201 525.5px,#e72101 527.5px,#dd1e01 529.5px,#d81c01 535.5px,#d01b00 537.5px,#c31800 539.5px,#be1700 542.5px,#bd1600 546.5px,#b61500 548.5px,#ac1300 550.5px,#a91200 554.5px,#a71100 558.5px,#9e1000 562.5px,#990c00 584.5px,#990400 651.5px)"></i><i class="h" style="margin-left:0px;width:661px;background:linear-gradient(90deg,#009925 0,#009a21 189.5px,#009f22 190.5px,#00ac25 191.5px,#01c32a 192.5px,#02dd30 193.5px,#03f134 194.5px,#05fb36 195.5px,#08ff37 197.5px,#59ff35 238.5px,#aeff33 274.5px,#fcfe31 303.5px,#ffe82c 312.5px,#ffbc22 332.5px,#ff931a 358.5px,#ff6e11 392.5px,#ff4b0a 438.5px,#ff2c03 502.5px,#fc2702 517.5px,#f92302 526.5px,#f02101 530.5px,#ee1f01 535.5px,#e71d01 537.5px,#dd1c01 539.5px,#da1a01 543.5px,#d81900 546.5px,#d01800 548.5px,#c31600 550.5px,#be1500 553.5px,#bd1400 557.5px,#b61300 559.5px,#ac1100 561.5px,#a91000 566.5px,#a50f00 569.5px,#9e0e00 572.5px,#990a00 596.5px,#990300 660.5px)"></i><i class="h" style="margin-left:0px;width:670px;background:linear-gradient(90deg,#009926 0,#009a22 189.5px,#009e23 190.5px,#00aa26 191.5px,#01bf2b 192.5px,#02da31 193.5px,#03f035 194.5px,#05fb38 195.5px,#08ff39 197.5px,#59ff37 238.5px,#aeff35 274.5px,#fcfe33 303.5px,#ffe52d 313.5px,#ffba24 333.5px,#ff921b 359.5px,#ff6c12 393.5px,#ff4a0b 439.5px,#ff2c04 503.5px,#fc2302 528.5px,#f92002 536.5px,#f01e01 540.5px,#ee1c01 546.5px,#e71a01 548.5px,#dd1901 550.5px,#da1701 554.5px,#d81600 557.5px,#d01500 559.5px,#c31300 561.5px,#be1200 564.5px,#b10 568.5px,#ac0f00 571.5px,#a90e00 575.5px,#a70e00 579.5px,#9e0c00 583.5px,#990900 607.5px,#990200 669.5px)"></i><i class="h" style="margin-left:0px;width:679px;background:linear-gradient(90deg,#009926 0,#009a23 189.5px,#009d24 190.5px,#00a827 191.5px,#01be2c 192.5px,#01d932 193.5px,#03ee37 194.5px,#04fa39 195.5px,#08ff3a 197.5px,#59ff39 238.5px,#aeff37 274.5px,#fdfe35 303.5px,#ffe02e 315.5px,#ffb424 336.5px,#ff8c1b 363.5px,#ff6712 399.5px,#ff460b 447.5px,#ff2704 515.5px,#fc1f02 538.5px,#f91c01 547.5px,#f01a01 551.5px,#ee1901 557.5px,#e71701 559.5px,#dd1601 561.5px,#d81400 567.5px,#d01300 569.5px,#c31100 571.5px,#be1000 574.5px,#bd0f00 578.5px,#b60f00 580.5px,#ac0d00 582.5px,#a90d00 586.5px,#a70c00 590.5px,#9e0b00 594.5px,#990700 616.5px,#990100 678.5px)"></i><i class="h" style="margin-left:0px;width:687px;background:linear-gradient(90deg,#009927 0,#009a25 189.5px,#009d25 190.5px,#00a728 191.5px,#01bb2c 192.5px,#01d533 193.5px,#03ec38 194.5px,#04f93b 195.5px,#06fe3c 196.5px,#57ff3b 237.5px,#abff39 273.5px,#fdfe37 303.5px,#ffd92f 318.5px,#ffad24 340.5px,#ff861b 368.5px,#ff6212 405.5px,#ff400b 456.5px,#ff2303 528.5px,#fc1c02 549.5px,#f91901 558.5px,#f01701 562.5px,#ee1601 567.5px,#e71501 569.5px,#dd1301 571.5px,#da1201 575.5px,#d81200 578.5px,#d01000 580.5px,#c30f00 582.5px,#be0e00 585.5px,#bd0d00 589.5px,#b60d00 591.5px,#ac0c00 593.5px,#a90b00 598.5px,#a50a00 601.5px,#9e0900 604.5px,#990600 628.5px,#900 686.5px)"></i><i class="h" style="margin-left:0px;width:696px;background:linear-gradient(90deg,#009928 0,#009a26 189.5px,#009c26 190.5px,#00a528 191.5px,#00b62c 192.5px,#02e738 194.5px,#04f63c 195.5px,#06fd3e 196.5px,#1aff3e 207.5px,#6bff3c 246.5px,#c0ff3b 281.5px,#fdfe3a 303.5px,#ffc92d 325.5px,#ff9f22 349.5px,#ff7819 380.5px,#ff5510 422.5px,#ff3509 479.5px,#fd1902 559.5px,#f91601 568.5px,#f01501 572.5px,#ee1301 578.5px,#e71201 580.5px,#dd1101 582.5px,#da1001 586.5px,#d80f00 589.5px,#d00e00 591.5px,#c30d00 593.5px,#be0c00 596.5px,#bb0b00 600.5px,#ac0a00 603.5px,#a90900 607.5px,#a70900 611.5px,#9e0800 615.5px,#990500 639.5px,#900 695.5px)"></i><i class="h" style="margin-left:0px;width:705px;background:linear-gradient(90deg,#009929 0,#009927 189.5px,#009b27 190.5px,#00a229 191.5px,#00b12c 192.5px,#02e239 194.5px,#04f33d 195.5px,#05fc3f 196.5px,#0bff40 199.5px,#5bff3f 239.5px,#aeff3d 274.5px,#fdfd3c 303.5px,#ffc72e 326.5px,#ff9d24 350.5px,#ff771a 381.5px,#ff5411 423.5px,#ff3409 481.5px,#fe1802 565.5px,#f91401 579.5px,#f01201 583.5px,#ee1101 589.5px,#e71001 591.5px,#dd0f01 593.5px,#d80d00 599.5px,#d00c00 601.5px,#c30b00 603.5px,#be0a00 606.5px,#bd0a00 610.5px,#b60900 612.5px,#ac0800 614.5px,#a90800 618.5px,#a70700 622.5px,#9e0600 626.5px,#990400 648.5px,#900 704.5px)"></i><i class="h" style="margin-left:0px;width:713px;background:linear-gradient(90deg,#009929 0,#009a28 190.5px,#009f29 191.5px,#00ac2c 192.5px,#01c332 193.5px,#02dd39 194.5px,#03f13e 195.5px,#05fb41 196.5px,#09ff42 198.5px,#59ff41 238.5px,#acff40 273.5px,#fdfd3e 303.5px,#ffc830 325.5px,#ff9e26 349.5px,#ff781c 380.5px,#ff5412 422.5px,#ff350a 479.5px,#ff1803 561.5px,#fc1302 581.5px,#f91101 590.5px,#f00f01 594.5px,#ee0e01 599.5px,#e70d01 601.5px,#dd0c01 603.5px,#da0c01 607.5px,#d80b00 610.5px,#d00a00 612.5px,#c30900 614.5px,#be0900 617.5px,#bd0800 621.5px,#b60700 623.5px,#ac0700 625.5px,#a90600 630.5px,#a50500 633.5px,#9e0500 636.5px,#990200 660.5px,#900 712.5px)"></i><i class="h" style="margin-left:0px;width:722px;background:linear-gradient(90deg,#00992a 0,#009a29 190.5px,#009e2a 191.5px,#00aa2d 192.5px,#01bf33 193.5px,#02da3a 194.5px,#03f03f 195.5px,#05fb42 196.5px,#08ff44 198.5px,#59ff43 238.5px,#acff42 273.5px,#fdfd40 303.5px,#ffc832 325.5px,#ff9e27 349.5px,#ff771d 380.5px,#ff5414 422.5px,#ff340b 480.5px,#ff1804 563.5px,#fd1102 591.5px,#f90f01 600.5px,#f00d01 604.5px,#ee0c01 610.5px,#e70b01 612.5px,#dd0a01 614.5px,#da0900 618.5px,#d80900 621.5px,#d00800 623.5px,#c30700 625.5px,#be0700 628.5px,#bb0600 632.5px,#ac0500 635.5px,#a90500 639.5px,#a70400 643.5px,#9e0400 647.5px,#990100 671.5px,#900 721.5px)"></i><i class="h" style="margin-left:0px;width:731px;background:linear-gradient(90deg,#00992b 0,#009a2a 190.5px,#009d2b 191.5px,#00a82e 192.5px,#01be34 193.5px,#02d93b 194.5px,#03ee41 195.5px,#04fa44 196.5px,#08ff45 198.5px,#58ff45 238.5px,#acff44 273.5px,#fdfd43 303.5px,#ffc834 325.5px,#ff9d29 349.5px,#ff771e 380.5px,#ff5415 422.5px,#ff340c 480.5px,#ff1804 563.5px,#fd0e02 601.5px,#f90c01 611.5px,#f00b01 615.5px,#ee0a01 621.5px,#e70901 623.5px,#dd0801 625.5px,#d80700 631.5px,#d00700 633.5px,#c30600 635.5px,#be0500 638.5px,#bd0500 642.5px,#b60400 644.5px,#ac0400 646.5px,#a90300 650.5px,#a70300 654.5px,#9e0200 658.5px,#900 680.5px,#900 730.5px)"></i><i class="h" style="margin-left:0px;width:739px;background:linear-gradient(90deg,#00992c 0,#009a2b 190.5px,#009d2c 191.5px,#00a72f 192.5px,#01bb34 193.5px,#01d53c 194.5px,#03ec42 195.5px,#04f945 196.5px,#06fe47 197.5px,#56ff47 237.5px,#a9ff46 272.5px,#fcfe45 302.5px,#ffed41 309.5px,#ffc134 328.5px,#ff9729 353.5px,#ff721e 385.5px,#ff4f15 428.5px,#ff300c 488.5px,#ff1404 575.5px,#fd0c02 612.5px,#f90a01 622.5px,#f00901 626.5px,#ee0801 631.5px,#e70701 633.5px,#dd0701 635.5px,#da0600 639.5px,#d80500 642.5px,#d00500 644.5px,#c30400 646.5px,#be0400 649.5px,#bd0300 653.5px,#b60300 655.5px,#ac0300 657.5px,#a90200 662.5px,#a50200 665.5px,#9e0100 668.5px,#9b0000 677.5px,#900 738.5px)"></i><i class="h" style="margin-left:0px;width:748px;background:linear-gradient(90deg,#00992d 0,#009a2c 190.5px,#009c2d 191.5px,#00a52f 192.5px,#00b634 193.5px,#02e742 195.5px,#04f647 196.5px,#06fd48 197.5px,#1aff49 208.5px,#6cff49 247.5px,#c1ff48 281.5px,#fcfe48 302.5px,#ffea42 310.5px,#ffbd35 330.5px,#ff9429 355.5px,#ff6f1f 388.5px,#ff4d15 432.5px,#ff2e0c 494.5px,#ff1204 584.5px,#fd0a02 623.5px,#f90801 632.5px,#f00701 636.5px,#ee0601 642.5px,#e70501 644.5px,#dd0501 646.5px,#da0400 650.5px,#d80400 653.5px,#d00300 655.5px,#c30300 657.5px,#be0200 660.5px,#bb0200 664.5px,#ac0100 667.5px,#a90100 671.5px,#a60000 675.5px,#9a0000 679.5px,#900 747.5px)"></i><i class="h" style="margin-left:0px;width:757px;background:linear-gradient(90deg,#00992d 0,#00992d 190.5px,#009b2e 191.5px,#00a22f 192.5px,#00b134 193.5px,#02e242 195.5px,#04f347 196.5px,#05fc4a 197.5px,#0bff4b 200.5px,#5dff4b 240.5px,#b1ff4b 275.5px,#fcfe4a 302.5px,#ffe743 311.5px,#ffbb36 331.5px,#ff932a 356.5px,#ff6d20 389.5px,#ff4b15 434.5px,#ff2c0c 497.5px,#ff1104 588.5px,#fd0802 633.5px,#f90601 643.5px,#f00501 647.5px,#ee0401 653.5px,#e70301 655.5px,#dd0301 657.5px,#d80200 663.5px,#d00200 665.5px,#c30100 667.5px,#be0100 670.5px,#bc0000 674.5px,#af0000 676.5px,#9e0000 678.5px,#900 680.5px,#900 756.5px)"></i><i class="h" style="margin-left:0px;width:765px;background:linear-gradient(90deg,#00992e 0,#009a2f 191.5px,#009f30 192.5px,#00ac34 193.5px,#01c33b 194.5px,#02dd42 195.5px,#03f149 196.5px,#05fb4c 197.5px,#09ff4d 199.5px,#5aff4d 239.5px,#afff4d 274.5px,#fcfe4c 302.5px,#ffe545 312.5px,#ffb938 332.5px,#ff902b 358.5px,#ff6a20 392.5px,#ff4816 438.5px,#ff2a0d 502.5px,#ff0f04 596.5px,#fd0502 644.5px,#f90401 654.5px,#f00301 658.5px,#ee0201 663.5px,#e70201 665.5px,#dd0101 667.5px,#d80100 673.5px,#d40000 674.5px,#cb0000 675.5px,#ad0000 677.5px,#a10000 678.5px,#9b0000 679.5px,#900 689.5px,#900 764.5px)"></i><i class="h" style="margin-left:0px;width:774px;background:linear-gradient(90deg,#00992f 0,#009a2f 191.5px,#009e31 192.5px,#00aa34 193.5px,#01bf3b 194.5px,#02da43 195.5px,#03f04a 196.5px,#05fb4d 197.5px,#09ff4f 199.5px,#5aff4f 239.5px,#afff4f 274.5px,#fdfe4f 302.5px,#ffdf45 314.5px,#ffb338 335.5px,#ff8a2b 362.5px,#ff6620 397.5px,#ff4415 445.5px,#ff260c 512.5px,#ff0c04 611.5px,#fd0302 655.5px,#f90201 664.5px,#f00101 668.5px,#ee0101 672.5px,#ea0101 673.5px,#e30001 674.5px,#d50001 675.5px,#af0000 677.5px,#a20000 678.5px,#9b0000 679.5px,#900 688.5px,#900 773.5px)"></i><i class="h" style="margin-left:0px;width:783px;background:linear-gradient(90deg,#009930 0,#009a31 191.5px,#009d32 192.5px,#00a835 193.5px,#01be3c 194.5px,#02d944 195.5px,#03ee4b 196.5px,#05fa4f 197.5px,#08ff50 199.5px,#5aff51 239.5px,#afff51 274.5px,#fdfe51 302.5px,#ffd845 317.5px,#ffad38 338.5px,#ff852b 366.5px,#ff601f 403.5px,#ff3f15 453.5px,#ff220c 524.5px,#ff0804 629.5px,#fd0202 665.5px,#f90101 671.5px,#f60101 672.5px,#ee0001 673.5px,#e20001 674.5px,#aa0001 677.5px,#9f0001 678.5px,#990001 680.5px,#900 782.5px)"></i><i class="h" style="margin-left:0px;width:791px;background:linear-gradient(90deg,#009930 0,#009a32 191.5px,#009d33 192.5px,#00a736 193.5px,#01bb3c 194.5px,#01d545 195.5px,#03ec4c 196.5px,#04f950 197.5px,#06fe52 198.5px,#58ff53 238.5px,#acff53 273.5px,#fdfd53 302.5px,#ffc842 324.5px,#ff9e35 347.5px,#ff7828 377.5px,#ff551d 417.5px,#ff3513 473.5px,#ff190a 553.5px,#fe0102 669.5px,#f90102 671.5px,#f20002 672.5px,#e60001 673.5px,#b00001 676.5px,#a30001 677.5px,#9d0001 678.5px,#990001 682.5px,#900 790.5px)"></i><i class="h" style="margin-left:1px;width:799px;background:linear-gradient(90deg,#009931 0,#009a33 190.5px,#009c34 191.5px,#00a536 192.5px,#00b63c 193.5px,#02e74c 195.5px,#04f651 196.5px,#06fd54 197.5px,#1bff54 208.5px,#6cff55 246.5px,#c2ff56 280.5px,#fdfd56 301.5px,#ffc744 323.5px,#ff9e36 346.5px,#ff782a 376.5px,#ff551e 416.5px,#ff3514 472.5px,#ff190a 552.5px,#fd0102 668.5px,#fa0102 669.5px,#f30002 670.5px,#e70002 671.5px,#b10001 674.5px,#a50001 675.5px,#9e0001 676.5px,#990001 679.5px,#900 798.5px)"></i><i class="h" style="margin-left:1px;width:808px;background:linear-gradient(90deg,#009932 0,#009934 190.5px,#009b34 191.5px,#00a237 192.5px,#00b13c 193.5px,#02e24c 195.5px,#04f352 196.5px,#06fc55 197.5px,#0bff56 200.5px,#5cff57 239.5px,#afff58 273.5px,#fdfd58 301.5px,#ffc746 323.5px,#ff9e38 346.5px,#ff782b 376.5px,#ff551f 416.5px,#ff3515 472.5px,#ff190b 552.5px,#fd0103 667.5px,#fa0103 668.5px,#f30003 669.5px,#e70002 670.5px,#b10002 673.5px,#a50002 674.5px,#9e0002 675.5px,#990001 678.5px,#900 807.5px)"></i><i class="h" style="margin-left:1px;width:817px;background:linear-gradient(90deg,#093 0,#009a35 191.5px,#009f37 192.5px,#00ac3b 193.5px,#01c343 194.5px,#02dd4c 195.5px,#04f153 196.5px,#05fb57 197.5px,#09ff58 199.5px,#59ff59 238.5px,#acff5a 272.5px,#fdfd5b 301.5px,#ffc748 323.5px,#ff9d3a 346.5px,#ff772c 376.5px,#ff5520 416.5px,#ff3515 472.5px,#ff180c 552.5px,#fd0103 666.5px,#fa0103 667.5px,#f30003 668.5px,#e70003 669.5px,#b10002 672.5px,#a50002 673.5px,#9e0002 674.5px,#990002 677.5px,#900 816.5px)"></i><i class="h" style="margin-left:1px;width:825px;background:linear-gradient(90deg,#009934 0,#009a36 191.5px,#009e38 192.5px,#00aa3c 193.5px,#01bf44 194.5px,#02da4d 195.5px,#03f055 196.5px,#05fb58 197.5px,#09ff5a 199.5px,#59ff5b 238.5px,#acff5d 272.5px,#fcfe5d 300.5px,#fff058 306.5px,#ffc248 325.5px,#ff993a 349.5px,#ff732c 380.5px,#ff5020 422.5px,#ff3115 480.5px,#ff150b 564.5px,#fd0104 665.5px,#fa0104 666.5px,#f30004 667.5px,#e70003 668.5px,#b10003 671.5px,#a50002 672.5px,#9e0002 673.5px,#990002 676.5px,#900 824.5px)"></i><i class="h" style="margin-left:1px;width:834px;background:linear-gradient(90deg,#009935 0,#009a37 191.5px,#009d39 192.5px,#00a83d 193.5px,#01be44 194.5px,#02d94e 195.5px,#03ee56 196.5px,#05fa5a 197.5px,#08ff5c 199.5px,#59ff5d 238.5px,#adff5f 272.5px,#fcfe60 300.5px,#ffed5a 307.5px,#ffc049 326.5px,#ff973b 350.5px,#ff712d 382.5px,#ff4e20 425.5px,#ff2f15 484.5px,#ff130b 570.5px,#fd0105 664.5px,#fa0104 665.5px,#f30004 666.5px,#e70004 667.5px,#b10003 670.5px,#a50003 671.5px,#9e0003 672.5px,#990002 675.5px,#900 833.5px)"></i><i class="h" style="margin-left:1px;width:843px;background:linear-gradient(90deg,#009935 0,#009a38 191.5px,#009d3a 192.5px,#00a73d 193.5px,#01bb45 194.5px,#01d54e 195.5px,#03ec57 196.5px,#04f95c 197.5px,#06fe5d 198.5px,#57ff5f 237.5px,#aaff61 271.5px,#fcfe62 300.5px,#ffea5b 308.5px,#ffbe4b 327.5px,#ff953c 351.5px,#ff6f2e 383.5px,#ff4d21 426.5px,#ff2e16 486.5px,#ff120c 573.5px,#fd0105 663.5px,#fa0105 664.5px,#f30005 665.5px,#e70004 666.5px,#b10003 669.5px,#a50003 670.5px,#9e0003 671.5px,#990003 674.5px,#900 842.5px)"></i><i class="h" style="margin-left:2px;width:850px;background:linear-gradient(90deg,#009936 0,#009a3a 190.5px,#009c3b 191.5px,#00a53e 192.5px,#01b644 193.5px,#03e757 195.5px,#04f65d 196.5px,#06fd5f 197.5px,#1bff60 208.5px,#6eff62 246.5px,#c3ff64 279.5px,#fcfe65 299.5px,#ffe75c 308.5px,#ffbb4c 327.5px,#ff923c 352.5px,#ff6c2e 385.5px,#ff4a21 429.5px,#ff2c16 490.5px,#ff110c 579.5px,#fd0106 661.5px,#fa0106 662.5px,#f30005 663.5px,#e70005 664.5px,#b10004 667.5px,#a50003 668.5px,#9e0003 669.5px,#990003 672.5px,#900 849.5px)"></i><i style="margin-left:2px;width:868px;background:linear-gradient(90deg,#009937 0,#00993b 190.5px,#009b3c 191.5px,#00a03e 192.5px,#00ae43 193.5px,#02df56 195.5px,#04f25e 196.5px,#06fb61 197.5px,#0bff63 200.5px,#5dff65 239.5px,#b2ff67 273.5px,#fcfe68 299.5px,#ffe15d 310.5px,#ffb54c 330.5px,#ff8c3d 356.5px,#ff672e 390.5px,#ff4521 436.5px,#ff2816 500.5px,#ff0d0b 594.5px,#fe0107 659.5px,#f70106 661.5px,#ed0006 662.5px,#cc0005 664.5px,#ab0004 666.5px,#a10004 667.5px,#9a0004 669.5px,#900 867.5px)"></i><i style="margin-left:2px;width:885px;background:linear-gradient(90deg,#009939 0,#009a3e 191.5px,#009e3f 192.5px,#00a944 193.5px,#01bf4d 194.5px,#02da58 195.5px,#03ef60 196.5px,#05fa65 197.5px,#09ff67 199.5px,#58ff69 237.5px,#adff6c 271.5px,#fdfd6d 299.5px,#ffd25c 316.5px,#ffa84b 337.5px,#ff803b 365.5px,#ff5c2d 402.5px,#ff3c1f 453.5px,#ff1f14 525.5px,#ff0509 632.5px,#fe0108 657.5px,#f70107 659.5px,#ed0007 660.5px,#cc0006 662.5px,#ab0005 664.5px,#a10005 665.5px,#9a0004 667.5px,#900 884.5px)"></i><i style="margin-left:3px;width:900px;background:linear-gradient(90deg,#00993b 0,#009a40 190.5px,#009d42 191.5px,#00a846 192.5px,#01bc4f 193.5px,#01d75a 194.5px,#03ed63 195.5px,#04f968 196.5px,#08ff6b 198.5px,#58ff6e 236.5px,#adff70 270.5px,#fdfd72 298.5px,#ffc85c 319.5px,#ff9e4a 342.5px,#ff773a 372.5px,#ff532b 412.5px,#ff341e 467.5px,#ff1812 546.5px,#fe0109 654.5px,#f70108 656.5px,#ed0008 657.5px,#cc0007 659.5px,#ab0006 661.5px,#a10005 662.5px,#9a0005 664.5px,#900 899.5px)"></i><i style="margin-left:3px;width:900px;background:linear-gradient(90deg,#00993c 0,#009a42 190.5px,#009c43 191.5px,#00a347 192.5px,#00b44e 193.5px,#02e463 195.5px,#04f56a 196.5px,#06fc6e 197.5px,#11ff6f 203.5px,#64ff72 241.5px,#b8ff76 274.5px,#fdfd77 298.5px,#ffc760 319.5px,#ff9d4e 342.5px,#ff763d 372.5px,#ff532e 412.5px,#ff3320 467.5px,#ff1714 546.5px,#fe010a 653.5px,#fb010a 654.5px,#f30009 655.5px,#e40009 656.5px,#bc0007 658.5px,#ac0006 659.5px,#a20006 660.5px,#9a0006 662.5px,#900 899.5px)"></i><i style="margin-left:3px;width:900px;background:linear-gradient(90deg,#00993e 0,#009a45 191.5px,#009f47 192.5px,#00ab4d 193.5px,#01c157 194.5px,#02dc63 195.5px,#03f06c 196.5px,#05fb71 197.5px,#09ff73 199.5px,#5aff77 237.5px,#adff7a 270.5px,#fcfe7d 297.5px,#ffec75 304.5px,#ffc061 322.5px,#ff984f 345.5px,#ff713e 376.5px,#ff4f2e 417.5px,#ff3020 474.5px,#ff1414 556.5px,#fe010b 651.5px,#f6000b 653.5px,#ec000a 654.5px,#dc0009 655.5px,#b40008 657.5px,#a50007 658.5px,#9d0007 659.5px,#990006 662.5px,#900 899.5px)"></i><i style="margin-left:4px;width:899px;background:linear-gradient(90deg,#009940 0,#009a47 190.5px,#009d49 191.5px,#00a84e 192.5px,#01bc58 193.5px,#01d764 194.5px,#03ed6f 195.5px,#05f974 196.5px,#08ff77 198.5px,#5aff7b 236.5px,#adff7f 269.5px,#fcfe82 296.5px,#ffe677 305.5px,#ffba62 324.5px,#ff9150 348.5px,#ff6c3e 380.5px,#ff4a2e 423.5px,#ff2b20 483.5px,#ff1014 570.5px,#fe010c 648.5px,#f7000c 650.5px,#ed000b 651.5px,#cc000a 653.5px,#ab0008 655.5px,#a10007 656.5px,#9a0007 658.5px,#900 898.5px)"></i><i style="margin-left:4px;width:899px;background:linear-gradient(90deg,#009942 0,#009a4a 190.5px,#009c4b 191.5px,#00a34e 192.5px,#00b456 193.5px,#02e46e 195.5px,#04f576 196.5px,#06fc7a 197.5px,#12ff7c 203.5px,#63ff80 240.5px,#b9ff84 273.5px,#fdfe87 296.5px,#ffdb77 309.5px,#ffaf62 329.5px,#ff874e 355.5px,#ff633d 389.5px,#ff422d 435.5px,#ff241f 500.5px,#ff0a12 596.5px,#fe010e 646.5px,#f7000d 648.5px,#ed000c 649.5px,#cc000a 651.5px,#ab0009 653.5px,#a10008 654.5px,#9a0008 656.5px,#900 898.5px)"></i><i style="margin-left:5px;width:898px;background:linear-gradient(90deg,#009943 0,#009a4d 190.5px,#009f4f 191.5px,#00ab55 192.5px,#01c160 193.5px,#02dc6d 194.5px,#03f078 195.5px,#05fb7d 196.5px,#09ff80 198.5px,#59ff84 235.5px,#aeff89 268.5px,#fdfd8d 295.5px,#ffc772 316.5px,#ff9e5d 338.5px,#ff774a 367.5px,#ff5438 406.5px,#ff3428 460.5px,#ff181a 537.5px,#fe010f 643.5px,#f7000e 645.5px,#ed000d 646.5px,#cc000b 648.5px,#ab000a 650.5px,#a10009 651.5px,#9a0008 653.5px,#990001 897.5px)"></i><i style="margin-left:5px;width:898px;background:linear-gradient(90deg,#009945 0,#009a4f 190.5px,#009d51 191.5px,#00a856 192.5px,#01bc61 193.5px,#02d76f 194.5px,#03ed7a 195.5px,#05f981 196.5px,#09ff84 198.5px,#59ff89 235.5px,#aeff8e 268.5px,#fdfd92 295.5px,#ffc676 316.5px,#ff9d60 338.5px,#ff764d 367.5px,#ff533a 406.5px,#ff332a 460.5px,#ff171c 537.5px,#fe0110 641.5px,#f7000f 643.5px,#ed000f 644.5px,#cc000c 646.5px,#ab000a 648.5px,#a1000a 649.5px,#9a0009 651.5px,#990001 897.5px)"></i><i style="margin-left:5px;width:898px;background:linear-gradient(90deg,#009947 0,#009a51 190.5px,#009c53 191.5px,#00a356 192.5px,#00b45f 193.5px,#02e479 195.5px,#04f582 196.5px,#06fc86 197.5px,#12ff89 203.5px,#62ff8e 239.5px,#b7ff94 271.5px,#fcfe98 294.5px,#ffef90 300.5px,#ffc178 318.5px,#ff9861 341.5px,#ff714d 371.5px,#ff4f3b 411.5px,#ff302a 467.5px,#ff141b 548.5px,#fe0111 639.5px,#f70011 641.5px,#ed0010 642.5px,#cc000d 644.5px,#ab000b 646.5px,#a1000a 647.5px,#9a000a 649.5px,#990002 897.5px)"></i><i style="margin-left:6px;width:897px;background:linear-gradient(90deg,#009949 0,#009a54 190.5px,#009f57 191.5px,#00ab5e 192.5px,#01c16a 193.5px,#02dc78 194.5px,#04f084 195.5px,#05fb8a 196.5px,#09ff8c 198.5px,#5bff92 235.5px,#aeff98 267.5px,#fcfe9d 293.5px,#ffe892 301.5px,#ffbc79 319.5px,#ff9463 342.5px,#ff6f4f 372.5px,#ff4c3c 413.5px,#ff2d2b 470.5px,#ff121c 553.5px,#fe0112 636.5px,#f70012 638.5px,#ed0011 639.5px,#cc000e 641.5px,#ab000c 643.5px,#a1000b 644.5px,#9a000b 646.5px,#990002 896.5px)"></i><i style="margin-left:6px;width:897px;background:linear-gradient(90deg,#00994a 0,#009a57 190.5px,#009d59 191.5px,#00a85f 192.5px,#01bc6a 193.5px,#02d77a 194.5px,#03ed86 195.5px,#05f98d 196.5px,#09ff91 198.5px,#5aff97 235.5px,#aeff9d 267.5px,#fcfea3 293.5px,#ffe293 303.5px,#ffb67a 322.5px,#ff8d63 346.5px,#ff684e 378.5px,#ff473b 421.5px,#ff282a 481.5px,#ff0e1b 569.5px,#fe0114 634.5px,#f70013 636.5px,#ed0012 637.5px,#cc000f 639.5px,#ab000d 641.5px,#a1000c 642.5px,#9a000b 644.5px,#990003 896.5px)"></i><i style="margin-left:7px;width:896px;background:linear-gradient(90deg,#00994c 0,#009a59 189.5px,#009c5a 190.5px,#00a35f 191.5px,#00b468 192.5px,#03e485 194.5px,#04f58f 195.5px,#06fc93 196.5px,#12ff96 202.5px,#64ff9d 238.5px,#b7ffa3 269.5px,#fdfda8 292.5px,#ffcf8d 309.5px,#ffa474 330.5px,#ff7d5e 357.5px,#ff5949 393.5px,#ff3936 442.5px,#ff1d25 512.5px,#ff0317 617.5px,#fe0115 631.5px,#f70014 633.5px,#ed0013 634.5px,#cc0010 636.5px,#ab000e 638.5px,#a1000d 639.5px,#9a000c 641.5px,#990003 895.5px)"></i><i style="margin-left:7px;width:896px;background:linear-gradient(90deg,#00994e 0,#009a5c 190.5px,#009f5f 191.5px,#00ab66 192.5px,#01c174 193.5px,#02dc84 194.5px,#04f090 195.5px,#06fb97 196.5px,#0aff9a 198.5px,#5affa1 234.5px,#afffa8 266.5px,#fdfdae 292.5px,#ffc88e 312.5px,#ff9f75 333.5px,#ff785e 361.5px,#ff5549 398.5px,#ff3536 449.5px,#ff1925 522.5px,#fe0116 629.5px,#f70115 631.5px,#ed0015 632.5px,#c01 634.5px,#ab000f 636.5px,#a1000e 637.5px,#9a000d 639.5px,#990003 895.5px)"></i><i style="margin-left:8px;width:895px;background:linear-gradient(90deg,#009950 0,#009a5f 189.5px,#009d61 190.5px,#00a867 191.5px,#01bc74 192.5px,#02d785 193.5px,#03ed93 194.5px,#05f99a 195.5px,#09ff9e 197.5px,#5affa6 233.5px,#afffad 265.5px,#fbfeb4 290.5px,#ffefab 296.5px,#ffc28f 313.5px,#ff9976 335.5px,#ff735e 364.5px,#ff5048 403.5px,#ff3035 457.5px,#ff1524 535.5px,#fe0118 626.5px,#f70117 628.5px,#ed0016 629.5px,#cc0013 631.5px,#ab000f 633.5px,#a1000e 634.5px,#9a000e 636.5px,#990004 894.5px)"></i><i style="margin-left:9px;width:894px;background:linear-gradient(90deg,#009952 0,#009a61 188.5px,#009c63 189.5px,#00a367 190.5px,#00b472 191.5px,#03e491 193.5px,#04f59c 194.5px,#06fca1 195.5px,#13ffa4 201.5px,#63ffac 236.5px,#b8ffb4 267.5px,#fcfeba 289.5px,#ffebae 296.5px,#ffc092 313.5px,#ff9778 335.5px,#ff7160 364.5px,#ff4e4a 403.5px,#ff2f37 457.5px,#ff1425 535.5px,#fe0119 623.5px,#f70118 625.5px,#ed0017 626.5px,#cc0014 628.5px,#ab0010 630.5px,#a1000f 631.5px,#9a000f 633.5px,#990004 893.5px)"></i><i style="margin-left:9px;width:894px;background:linear-gradient(90deg,#009953 0,#009964 188.5px,#009f67 190.5px,#00ab6f 191.5px,#01c17e 192.5px,#02dc90 193.5px,#04f09d 194.5px,#06fba4 195.5px,#0affa8 197.5px,#5cffb0 233.5px,#afffb8 264.5px,#fcfebf 289.5px,#ffe4af 298.5px,#ffb892 316.5px,#ff9078 339.5px,#ff6b60 369.5px,#ff494a 410.5px,#ff2b36 467.5px,#ff1024 550.5px,#fe011a 621.5px,#f70119 623.5px,#ed0018 624.5px,#cc0015 626.5px,#ab0011 628.5px,#a10010 629.5px,#9a000f 631.5px,#990005 893.5px)"></i><i style="margin-left:10px;width:893px;background:linear-gradient(90deg,#095 0,#096 187.5px,#009e69 189.5px,#00a971 190.5px,#01be80 191.5px,#02d992 192.5px,#03efa1 193.5px,#05faa8 194.5px,#09ffac 196.5px,#59ffb5 231.5px,#acffbe 262.5px,#fdfdc5 288.5px,#ffdbaf 300.5px,#ffb091 319.5px,#f87 343.5px,#ff645e 375.5px,#ff4248 419.5px,#ff2534 480.5px,#ff0a22 570.5px,#fe011c 618.5px,#f7011b 620.5px,#ed0019 621.5px,#cc0016 623.5px,#ab0012 625.5px,#a10011 626.5px,#9a0010 628.5px,#990005 892.5px)"></i><i style="margin-left:10px;width:893px;background:linear-gradient(90deg,#009957 0,#009969 187.5px,#009d6c 189.5px,#00a672 190.5px,#01b97f 191.5px,#03eaa1 193.5px,#04f8ab 194.5px,#06fdaf 195.5px,#56ffba 230.5px,#aaffc3 261.5px,#fdfdcb 288.5px,#ffc7a6 308.5px,#ff9d89 329.5px,#ff776f 356.5px,#ff5456 393.5px,#ff3440 444.5px,#ff182d 517.5px,#fe011d 616.5px,#f7011c 618.5px,#ed001b 619.5px,#cc0017 621.5px,#ab0013 623.5px,#a10012 624.5px,#9a0011 626.5px,#990005 892.5px)"></i><i style="margin-left:11px;width:892px;background:linear-gradient(90deg,#009959 0,#00996c 187.5px,#009b6d 188.5px,#00a071 189.5px,#00ae7b 190.5px,#02df9e 192.5px,#04f2ac 193.5px,#06fbb3 194.5px,#0cffb6 197.5px,#5dffc0 232.5px,#b3ffca 263.5px,#fbfed1 286.5px,#fff1c9 291.5px,#ffc6aa 307.5px,#ff9c8d 328.5px,#ff7672 355.5px,#ff5359 392.5px,#ff3342 443.5px,#ff172e 516.5px,#fe011e 613.5px,#f7011d 615.5px,#ed001c 616.5px,#cc0018 618.5px,#ab0014 620.5px,#a10013 621.5px,#9a0012 623.5px,#990006 891.5px)"></i><i style="margin-left:11px;width:892px;background:linear-gradient(90deg,#00995b 0,#00996e 186.5px,#009a6f 188.5px,#009e72 189.5px,#00a97b 190.5px,#01bf8a 191.5px,#02d99e 192.5px,#03efae 193.5px,#05fab7 194.5px,#09ffba 196.5px,#5affc5 231.5px,#b0ffcf 262.5px,#fcfed7 286.5px,#fec 292.5px,#ffc1ab 309.5px,#ff978d 331.5px,#ff7171 359.5px,#ff4f58 397.5px,#ff2f42 450.5px,#ff142e 526.5px,#fe0120 611.5px,#f7011f 613.5px,#ed001d 614.5px,#cc0019 616.5px,#ab0015 618.5px,#a10014 619.5px,#9a0013 621.5px,#990006 891.5px)"></i><i style="margin-left:12px;width:891px;background:linear-gradient(90deg,#00995d 0,#009971 184.5px,#009a72 187.5px,#009d74 188.5px,#00a67b 189.5px,#01b98a 190.5px,#03eaaf 192.5px,#05f8b9 193.5px,#07fdbe 194.5px,#58ffc9 229.5px,#adffd4 260.5px,#fcfede 285.5px,#ffeacf 292.5px,#ffbeae 309.5px,#ff948f 331.5px,#ff6e73 360.5px,#ff4c59 399.5px,#ff2d42 453.5px,#ff122e 531.5px,#fe0121 608.5px,#f70120 610.5px,#ed001f 611.5px,#cc001a 613.5px,#ab0016 615.5px,#a10014 616.5px,#9a0013 618.5px,#990007 890.5px)"></i><i style="margin-left:12px;width:891px;background:linear-gradient(90deg,#00995f 0,#009973 181.5px,#009b76 188.5px,#00a07a 189.5px,#00ae85 190.5px,#02dfab 192.5px,#04f2ba 193.5px,#06fbc1 194.5px,#0cffc5 197.5px,#5cffcf 231.5px,#b0ffdb 261.5px,#fcfde4 285.5px,#ffe0ce 295.5px,#ffb4ac 313.5px,#ff8c8d 336.5px,#ff6771 366.5px,#ff4657 407.5px,#ff2840 464.5px,#ff0d2c 548.5px,#fe0123 606.5px,#f70121 608.5px,#ed0020 609.5px,#cc001b 611.5px,#ab0017 613.5px,#a10015 614.5px,#9a0014 616.5px,#990007 890.5px)"></i><i style="margin-left:13px;width:890px;background:linear-gradient(90deg,#009961 0,#009976 177.5px,#009a78 187.5px,#009e7b 188.5px,#00a984 189.5px,#01bf95 190.5px,#02d9ab 191.5px,#03efbc 192.5px,#05fac5 193.5px,#0affc9 195.5px,#5affd5 229.5px,#adffe0 259.5px,#fdfdea 284.5px,#ffcfc6 300.5px,#ffa6a6 319.5px,#ff7f87 344.5px,#ff5b6b 377.5px,#ff3b52 423.5px,#ff1e3b 488.5px,#ff0427 585.5px,#fe0124 603.5px,#f70123 605.5px,#ed0021 606.5px,#cc001c 608.5px,#ab0018 610.5px,#a10016 611.5px,#9a0015 613.5px,#990007 889.5px)"></i><i style="margin-left:14px;width:888px;background:linear-gradient(90deg,#009963 0,#009978 174.5px,#009a7b 186.5px,#009d7d 187.5px,#00a685 188.5px,#01b994 189.5px,#03eabc 191.5px,#05f8c8 192.5px,#07fdcd 193.5px,#57ffda 227.5px,#aaffe6 257.5px,#fbfef1 282.5px,#fff1e7 287.5px,#ffc5c3 303.5px,#ff9ca2 323.5px,#ff7583 350.5px,#ff5267 386.5px,#ff334e 436.5px,#ff1737 507.5px,#fe0126 600.5px,#f70124 602.5px,#ed0023 603.5px,#cc001e 605.5px,#ab0019 607.5px,#a10017 608.5px,#9a0016 610.5px,#990008 882.5px,#990008 887.5px)"></i><i style="margin-left:14px;width:886px;background:linear-gradient(90deg,#009965 0,#00997a 171.5px,#009b7f 187.5px,#00a084 188.5px,#00ae8f 189.5px,#02dfb8 191.5px,#04f2c8 192.5px,#06fbd0 193.5px,#0dffd4 196.5px,#5effe0 230.5px,#b4ffed 260.5px,#fbfef7 282.5px,#fff1ed 287.5px,#ffc4c8 303.5px,#ff9ba6 323.5px,#ff7587 350.5px,#ff526a 386.5px,#ff3250 436.5px,#ff1639 508.5px,#fd0127 599.5px,#f90126 600.5px,#ef0024 601.5px,#e00022 602.5px,#ba001c 604.5px,#ab001a 605.5px,#a10018 606.5px,#9a0017 608.5px,#990009 874.5px,#990008 885.5px)"></i><i style="margin-left:15px;width:883px;background:linear-gradient(90deg,#009967 0,#00997d 167.5px,#009a81 186.5px,#009e85 187.5px,#00a98e 188.5px,#01bfa1 189.5px,#02d9b8 190.5px,#04efca 191.5px,#05fad4 192.5px,#0affd9 194.5px,#5bffe5 228.5px,#b1fff3 258.5px,#fafcfc 281.5px,#fff0f2 286.5px,#ffc3cd 302.5px,#ff9baa 322.5px,#ff748a 349.5px,#ff516c 385.5px,#ff3252 435.5px,#ff163a 507.5px,#fe0128 596.5px,#f60027 598.5px,#ea0025 599.5px,#ae001b 602.5px,#a20019 603.5px,#9a0018 605.5px,#990009 864.5px,#990009 882.5px)"></i><i style="margin-left:16px;width:880px;background:linear-gradient(90deg,#009969 0,#00997f 164.5px,#009a84 185.5px,#009d87 186.5px,#00a68f 187.5px,#01b99f 188.5px,#03eaca 190.5px,#05f8d7 191.5px,#07fddc 192.5px,#58ffeb 226.5px,#aefff8 256.5px,#f7f8fe 280.5px,#ffeff8 285.5px,#ffc0cf 302.5px,#ff97ab 323.5px,#ff718b 350.5px,#ff4e6d 387.5px,#ff2f52 438.5px,#ff133a 512.5px,#fe012a 593.5px,#f70028 595.5px,#ed0027 596.5px,#de0024 597.5px,#b8001e 599.5px,#a9001b 600.5px,#9f0019 601.5px,#990018 603.5px,#99000a 863.5px,#990009 879.5px)"></i><i style="margin-left:16px;width:878px;background:linear-gradient(90deg,#00996b 0,#009982 161.5px,#009b88 186.5px,#00a08d 187.5px,#00ae9a 188.5px,#02dfc6 190.5px,#04f2d7 191.5px,#06fbdf 192.5px,#0dffe4 195.5px,#5dfff1 228.5px,#befbfe 262.5px,#fceffd 284.5px,#ffd9eb 292.5px,#ffaec5 310.5px,#ff86a2 333.5px,#ff6181 364.5px,#ff4064 406.5px,#ff234a 465.5px,#ff0933 552.5px,#fe012b 591.5px,#f7002a 593.5px,#ed0028 594.5px,#c02 596.5px,#ab001c 598.5px,#a1001b 599.5px,#9a0019 601.5px,#99000b 850.5px,#99000a 877.5px)"></i><i style="margin-left:17px;width:875px;background:linear-gradient(90deg,#00996d 0,#009984 159.5px,#009a8b 185.5px,#009e8e 186.5px,#00a999 187.5px,#01bfac 188.5px,#02d9c5 189.5px,#04efd9 190.5px,#06fae3 191.5px,#0affe8 193.5px,#5afff6 226.5px,#a7f9ff 254.5px,#fce8fd 285.5px,#ffd3eb 293.5px,#ffa9c6 311.5px,#ff81a2 335.5px,#ff5d81 367.5px,#ff3d63 410.5px,#ff2049 471.5px,#ff0632 562.5px,#fe012d 588.5px,#f7012b 590.5px,#ed0029 591.5px,#cc0023 593.5px,#ab001d 595.5px,#a1001c 596.5px,#9a001a 598.5px,#99000b 840.5px,#99000a 874.5px)"></i><i style="margin-left:17px;width:873px;background:linear-gradient(90deg,#00996f 0,#009986 156.5px,#009a8d 185.5px,#009d90 186.5px,#00a699 187.5px,#01b9ab 188.5px,#03ead9 190.5px,#05f8e6 191.5px,#07fdec 192.5px,#5afefc 226.5px,#b6f0ff 261.5px,#fce1fd 287.5px,#ffcae9 296.5px,#ffa1c3 315.5px,#ff7a9f 340.5px,#ff577e 373.5px,#ff3761 419.5px,#ff1b47 484.5px,#ff022f 582.5px,#fc012e 587.5px,#f7012d 588.5px,#ed002b 589.5px,#cc0025 591.5px,#ab001e 593.5px,#a1001d 594.5px,#9a001b 596.5px,#99000c 833.5px,#99000b 872.5px)"></i><i style="margin-left:18px;width:870px;background:linear-gradient(90deg,#009971 0,#009989 153.5px,#009b92 185.5px,#00a097 186.5px,#00aea5 187.5px,#03dfd4 189.5px,#04f2e6 190.5px,#06fbef 191.5px,#0dfff4 194.5px,#5bfbfe 226.5px,#fcdafd 288.5px,#ffc5ea 297.5px,#ff9bc2 317.5px,#ff749e 343.5px,#ff517c 378.5px,#ff325f 426.5px,#ff1645 495.5px,#fe0130 583.5px,#f7012e 585.5px,#ed002c 586.5px,#cc0026 588.5px,#ab0020 590.5px,#a1001e 591.5px,#9a001c 593.5px,#99000d 824.5px,#99000b 869.5px)"></i><i style="margin-left:19px;width:867px;background:linear-gradient(90deg,#009973 0,#00998c 151.5px,#009a94 184.5px,#009e98 185.5px,#00a9a3 186.5px,#01bfb8 187.5px,#02d9d3 188.5px,#04efe8 189.5px,#06faf3 190.5px,#0afff9 192.5px,#4df8ff 220.5px,#e0dbff 278.5px,#fcd4fd 289.5px,#ffbfea 298.5px,#ff96c3 318.5px,#ff719f 344.5px,#ff4f7e 379.5px,#ff3060 428.5px,#ff1445 499.5px,#fe0132 580.5px,#f70130 582.5px,#ed002e 583.5px,#cc0027 585.5px,#ab0021 587.5px,#a1001f 588.5px,#9a001d 590.5px,#99000e 816.5px,#99000c 866.5px)"></i><i style="margin-left:19px;width:865px;background:linear-gradient(90deg,#009976 0,#00998e 148.5px,#009997 184.5px,#009c9a 185.5px,#00a5a3 186.5px,#01b8b6 187.5px,#03e9e7 189.5px,#05f7f5 190.5px,#07fcfb 191.5px,#2af9ff 206.5px,#bcdcff 266.5px,#fccdfd 291.5px,#ffb9ea 300.5px,#ff91c2 321.5px,#ff6c9d 348.5px,#ff4a7c 385.5px,#ff2b5d 437.5px,#ff1043 512.5px,#fe0133 578.5px,#f70131 580.5px,#ed002f 581.5px,#cc0028 583.5px,#ab0022 585.5px,#a10020 586.5px,#9a001e 588.5px,#99000e 809.5px,#99000c 864.5px)"></i><i style="margin-left:20px;width:862px;background:linear-gradient(90deg,#009978 0,#009991 146.5px,#00999a 184.5px,#009fa0 185.5px,#00acae 186.5px,#03dcdf 188.5px,#04eef2 189.5px,#07f7fb 190.5px,#0df9ff 193.5px,#9fdcff 255.5px,#fcc7fd 292.5px,#ffb2e8 302.5px,#ff8abf 324.5px,#ff659a 353.5px,#ff4379 392.5px,#ff265a 447.5px,#ff0b40 527.5px,#fe0135 575.5px,#f70133 577.5px,#ed0031 578.5px,#cc002a 580.5px,#ab0023 582.5px,#a10021 583.5px,#9a001f 585.5px,#99000f 801.5px,#99000d 861.5px)"></i><i style="margin-left:21px;width:859px;background:linear-gradient(90deg,#00997a 0,#009993 143.5px,#00969a 183.5px,#00999e 184.5px,#00a4a9 185.5px,#01b9bf 186.5px,#02d3da 187.5px,#04e7ef 188.5px,#06f1fa 189.5px,#0af4ff 191.5px,#9cd7ff 254.5px,#fcc2fd 293.5px,#ffade9 303.5px,#ff86c0 325.5px,#ff629b 354.5px,#ff427a 393.5px,#ff245b 448.5px,#ff0b41 528.5px,#fe0137 572.5px,#f70135 574.5px,#ed0032 575.5px,#cc002b 577.5px,#ab0024 579.5px,#a10022 580.5px,#9a0020 582.5px,#990010 794.5px,#99000d 858.5px)"></i><i style="margin-left:22px;width:856px;background:linear-gradient(90deg,#00997c 0,#009996 144.5px,#00939a 182.5px,#00969d 183.5px,#009fa8 184.5px,#01b2bc 185.5px,#02cbd7 186.5px,#03e0ed 187.5px,#05ebf9 188.5px,#09efff 190.5px,#9bd1ff 254.5px,#fcbcfe 294.5px,#ffa8e9 304.5px,#ff82c1 326.5px,#ff5f9c 355.5px,#ff407b 394.5px,#ff235c 449.5px,#ff0a42 529.5px,#fe0138 569.5px,#f70136 571.5px,#ed0034 572.5px,#cc002c 574.5px,#ab0025 576.5px,#a10023 577.5px,#9a0021 579.5px,#901 786.5px,#99000e 855.5px)"></i><i style="margin-left:22px;width:854px;background:linear-gradient(90deg,#00997e 0,#009799 149.5px,#008f9a 182.5px,#00919c 183.5px,#0098a3 184.5px,#00a7b4 185.5px,#03d3e4 187.5px,#04e2f5 188.5px,#06e9fc 189.5px,#13e8ff 195.5px,#a6caff 260.5px,#fcb7fe 296.5px,#ffa3e9 306.5px,#ff7fc2 328.5px,#ff5d9d 357.5px,#ff3d7b 397.5px,#ff215d 453.5px,#ff0842 534.5px,#fe013a 567.5px,#f70138 569.5px,#ed0035 570.5px,#cc002e 572.5px,#ab0026 574.5px,#a10024 575.5px,#9a0022 577.5px,#990012 779.5px,#99000e 853.5px)"></i><i style="margin-left:23px;width:851px;background:linear-gradient(90deg,#009981 0,#009799 137.5px,#008d9a 182.5px,#00919f 183.5px,#009bab 184.5px,#01afc1 185.5px,#02c7dc 186.5px,#04d9f0 187.5px,#06e2fb 188.5px,#0ae5ff 190.5px,#9bc7ff 256.5px,#fcb1fe 297.5px,#ff9de8 308.5px,#ff78bf 331.5px,#ff579b 361.5px,#ff3979 402.5px,#ff1d5b 460.5px,#ff0541 544.5px,#fe013c 564.5px,#f7013a 566.5px,#ed0037 567.5px,#cc002f 569.5px,#ab0027 571.5px,#a10025 572.5px,#9a0023 574.5px,#990012 772.5px,#99000f 850.5px)"></i><i style="margin-left:24px;width:848px;background:linear-gradient(90deg,#009983 0,#009799 124.5px,#008a9a 181.5px,#008c9d 182.5px,#0096a8 183.5px,#01a8bc 184.5px,#02bfd7 185.5px,#03d2ed 186.5px,#05ddf9 187.5px,#09e1ff 189.5px,#9bc2ff 256.5px,#fcacfe 298.5px,#ff98e8 309.5px,#ff75c0 332.5px,#ff549b 363.5px,#ff3679 405.5px,#ff1b5b 464.5px,#ff0340 550.5px,#fe013d 561.5px,#f7013b 563.5px,#ed0039 564.5px,#cc0030 566.5px,#ab0028 568.5px,#a10026 569.5px,#9a0024 571.5px,#990013 765.5px,#99000f 847.5px)"></i><i style="margin-left:24px;width:847px;background:linear-gradient(90deg,#009985 0,#009799 113.5px,#00879a 181.5px,#00889c 182.5px,#008fa3 183.5px,#009db4 184.5px,#02c7e4 186.5px,#04d4f5 187.5px,#06dafc 188.5px,#12daff 194.5px,#a5bbff 262.5px,#fca7fe 300.5px,#ff94e8 311.5px,#ff70c0 335.5px,#ff519b 366.5px,#ff347a 408.5px,#ff195b 467.5px,#ff0241 554.5px,#fe013f 559.5px,#f7013d 561.5px,#ed003a 562.5px,#cc0032 564.5px,#ab0029 566.5px,#a10027 567.5px,#9a0025 569.5px,#990014 759.5px,#990010 846.5px)"></i><i style="margin-left:25px;width:844px;background:linear-gradient(90deg,#098 0,#009799 101.5px,#00849a 181.5px,#00889f 182.5px,#0092ab 183.5px,#01a5c1 184.5px,#02bbdc 185.5px,#04ccf0 186.5px,#05d5fb 187.5px,#09d7ff 189.5px,#9bb8ff 258.5px,#fca2fe 301.5px,#ff8ee7 313.5px,#ff6cbf 337.5px,#ff4d9a 369.5px,#ff3079 412.5px,#ff165a 473.5px,#fe0141 556.5px,#f7013f 558.5px,#ed003c 559.5px,#c03 561.5px,#ab002b 563.5px,#a10028 564.5px,#9a0026 566.5px,#990015 752.5px,#990010 843.5px)"></i><i style="margin-left:26px;width:841px;background:linear-gradient(90deg,#00998a 0,#009699 89.5px,#00829a 180.5px,#00849d 181.5px,#008da8 182.5px,#019ebc 183.5px,#02b4d7 184.5px,#03c6ed 185.5px,#05cff9 186.5px,#09d3ff 188.5px,#9ab4ff 258.5px,#fc9efe 302.5px,#ff8ae7 314.5px,#ff68be 339.5px,#ff4999 372.5px,#ff2d78 416.5px,#ff145a 478.5px,#fe0143 553.5px,#f70140 555.5px,#ed003e 556.5px,#cc0035 558.5px,#ab002c 560.5px,#a10029 561.5px,#9a0027 563.5px,#990016 745.5px,#901 840.5px)"></i><i style="margin-left:27px;width:838px;background:linear-gradient(90deg,#00998c 0,#009699 77.5px,#007f9a 179.5px,#00809c 180.5px,#0086a3 181.5px,#0093b4 182.5px,#02bbe4 184.5px,#04c8f5 185.5px,#06cdfc 186.5px,#12cdff 192.5px,#a4adff 263.5px,#fc99fe 303.5px,#ff86e7 315.5px,#ff65bf 340.5px,#ff479a 373.5px,#ff2b78 418.5px,#ff125a 481.5px,#fe0145 550.5px,#f70142 552.5px,#ed003f 553.5px,#cc0036 555.5px,#ab002d 557.5px,#a1002a 558.5px,#9a0028 560.5px,#990017 738.5px,#901 837.5px)"></i><i style="margin-left:27px;width:836px;background:linear-gradient(90deg,#00998f 0,#009699 66.5px,#007d9a 180.5px,#00809f 181.5px,#008aab 182.5px,#019bc1 183.5px,#02b0dc 184.5px,#03c0f0 185.5px,#05c8fb 186.5px,#09cbff 188.5px,#9babff 260.5px,#fc95fe 305.5px,#ff81e6 318.5px,#ff60bd 344.5px,#ff4298 378.5px,#ff2877 424.5px,#ff0f59 489.5px,#fe0146 548.5px,#f70144 550.5px,#ed0041 551.5px,#cc0038 553.5px,#ab002e 555.5px,#a1002c 556.5px,#9a0029 558.5px,#990018 732.5px,#990012 835.5px)"></i><i style="margin-left:28px;width:833px;background:linear-gradient(90deg,#009991 0,#009699 56.5px,#007a9a 179.5px,#007c9d 180.5px,#0084a8 181.5px,#0194bc 182.5px,#02a9d7 183.5px,#03baed 184.5px,#05c3f9 185.5px,#08c7ff 187.5px,#9aa7ff 260.5px,#fc90fe 306.5px,#ff7de6 319.5px,#ff5dbe 345.5px,#ff4099 379.5px,#ff2678 425.5px,#ff0e5a 490.5px,#fe0148 545.5px,#f70146 547.5px,#ed0143 548.5px,#cc0039 550.5px,#ab002f 552.5px,#a1002d 553.5px,#9a002a 555.5px,#990019 725.5px,#990012 832.5px)"></i><i style="margin-left:29px;width:830px;background:linear-gradient(90deg,#009994 0,#009499 50.5px,#00779a 178.5px,#00799c 179.5px,#007ea3 180.5px,#008bb4 181.5px,#02b0e4 183.5px,#04bcf5 184.5px,#06c1fc 185.5px,#11c1ff 191.5px,#a4a1ff 265.5px,#fc8cfe 307.5px,#ff79e6 320.5px,#ff5abe 346.5px,#ff3e9a 380.5px,#ff2478 427.5px,#ff0d5a 493.5px,#fe014a 542.5px,#f70148 544.5px,#ed0144 545.5px,#cc003b 547.5px,#ab0031 549.5px,#a1002e 550.5px,#9a002b 552.5px,#99001a 719.5px,#990013 829.5px)"></i><i style="margin-left:30px;width:827px;background:linear-gradient(90deg,#009996 0,#008e99 65.5px,#00769a 178.5px,#00799f 179.5px,#0082ab 180.5px,#0192c1 181.5px,#02a6dc 182.5px,#03b5f0 183.5px,#05bdfb 184.5px,#09bfff 186.5px,#9b9fff 261.5px,#fc88fe 308.5px,#ff74e5 322.5px,#ff56bc 349.5px,#ff3a98 384.5px,#ff2177 432.5px,#ff0b59 499.5px,#fe014c 539.5px,#f7014a 541.5px,#ed0146 542.5px,#cc003c 544.5px,#ab0032 546.5px,#a1002f 547.5px,#9a002d 549.5px,#99001b 712.5px,#990014 826.5px)"></i><i style="margin-left:30px;width:825px;background:linear-gradient(90deg,#009898 0,#00739a 178.5px,#00759d 179.5px,#007da8 180.5px,#018cbc 181.5px,#029fd7 182.5px,#03b0ed 183.5px,#04b8f9 184.5px,#08bbff 186.5px,#9a9bff 262.5px,#fc84fe 310.5px,#ff71e5 324.5px,#ff53bd 351.5px,#ff3898 387.5px,#ff1f76 436.5px,#ff0958 505.5px,#fe014e 538.5px,#fb014d 539.5px,#f3014a 540.5px,#e40045 541.5px,#bc0039 543.5px,#ac0033 544.5px,#a20030 545.5px,#9a002e 547.5px,#99001c 707.5px,#990014 824.5px)"></i><i style="margin-left:31px;width:822px;background:linear-gradient(90deg,#009799 0,#00719a 177.5px,#00729c 178.5px,#0077a3 179.5px,#0083b4 180.5px,#02a6e4 182.5px,#04b2f5 183.5px,#06b6fc 184.5px,#10b6ff 190.5px,#a395ff 267.5px,#fc80fe 311.5px,#ff6ee5 325.5px,#ff51be 352.5px,#ff3699 388.5px,#ff1d77 437.5px,#ff0859 506.5px,#fe0150 535.5px,#f6014d 537.5px,#ec0049 538.5px,#dc0044 539.5px,#b40037 541.5px,#a50033 542.5px,#9d0030 543.5px,#99002e 546.5px,#99001b 715.5px,#990015 821.5px)"></i><i style="margin-left:32px;width:819px;background:linear-gradient(90deg,#009499 0,#006f9a 177.5px,#00729f 178.5px,#007aab 179.5px,#018ac1 180.5px,#029ddc 181.5px,#03abf0 182.5px,#05b2fb 183.5px,#08b4ff 185.5px,#9a93ff 263.5px,#fc7cfe 312.5px,#ff69e4 327.5px,#ff4cbc 355.5px,#ff3297 392.5px,#ff1b76 442.5px,#ff0558 513.5px,#fe0152 532.5px,#f7014f 534.5px,#ed004b 535.5px,#cc0040 537.5px,#ab0036 539.5px,#a10032 540.5px,#9a0030 542.5px,#99001d 700.5px,#990015 818.5px)"></i><i style="margin-left:33px;width:816px;background:linear-gradient(90deg,#009299 0,#006d9a 176.5px,#006f9e 177.5px,#0076a9 178.5px,#0185be 179.5px,#0198d9 180.5px,#03a7ef 181.5px,#04aefa 182.5px,#08b1ff 184.5px,#9a90ff 263.5px,#fc78fe 313.5px,#ff66e4 328.5px,#ff4abd 356.5px,#ff3098 393.5px,#ff1976 444.5px,#ff0459 515.5px,#fe0154 529.5px,#f70151 531.5px,#ed004d 532.5px,#cc0042 534.5px,#ab0037 536.5px,#a10034 537.5px,#9a0031 539.5px,#99001e 690.5px,#990016 815.5px)"></i><i style="margin-left:33px;width:814px;background:linear-gradient(90deg,#009099 0,#006b9a 176.5px,#006c9d 177.5px,#0073a6 178.5px,#007fb9 179.5px,#02a0ea 181.5px,#04a9f8 182.5px,#05adfd 183.5px,#978dff 263.5px,#fc75fe 315.5px,#ff62e3 331.5px,#ff46bb 360.5px,#ff2d96 398.5px,#ff1675 450.5px,#ff0258 523.5px,#fc0155 528.5px,#f70153 529.5px,#ed004f 530.5px,#c04 532.5px,#ab0038 534.5px,#a10035 535.5px,#9a0032 537.5px,#99001f 685.5px,#990016 813.5px)"></i><i style="margin-left:34px;width:811px;background:linear-gradient(90deg,#008d99 0,#006899 175.5px,#00699b 176.5px,#006da0 177.5px,#0076ae 178.5px,#0296df 180.5px,#03a3f2 181.5px,#05a9fb 182.5px,#0aaaff 185.5px,#9c88ff 266.5px,#fc71fe 316.5px,#ff5fe3 332.5px,#f4b 361.5px,#ff2b96 400.5px,#ff1475 453.5px,#fe0158 524.5px,#f70155 526.5px,#ed0051 527.5px,#cc0045 529.5px,#ab003a 531.5px,#a10036 532.5px,#9a0033 534.5px,#990020 679.5px,#990017 810.5px)"></i><i style="margin-left:35px;width:808px;background:linear-gradient(90deg,#008b99 0,#00679a 175.5px,#00699e 176.5px,#0070a9 177.5px,#017ebf 178.5px,#0190d9 179.5px,#039eef 180.5px,#04a5fa 181.5px,#08a7ff 183.5px,#9985ff 265.5px,#fe6dfd 318.5px,#ff4dcd 348.5px,#ff34a7 382.5px,#ff1d84 428.5px,#ff0865 491.5px,#fe015a 521.5px,#f70157 523.5px,#ed0053 524.5px,#cc0047 526.5px,#ab003b 528.5px,#a10038 529.5px,#9a0035 531.5px,#990021 673.5px,#990018 807.5px)"></i><i style="margin-left:36px;width:805px;background:linear-gradient(90deg,#008999 0,#00659a 174.5px,#00669d 175.5px,#006ca6 176.5px,#0078b9 177.5px,#0298ea 179.5px,#04a0f8 180.5px,#05a3fd 181.5px,#9783ff 264.5px,#fe6afd 319.5px,#ff4acd 350.5px,#ff31a6 385.5px,#ff1a83 432.5px,#ff0664 497.5px,#fe015c 518.5px,#f70159 520.5px,#ed0055 521.5px,#cc0049 523.5px,#ab003d 525.5px,#a10039 526.5px,#9a0036 528.5px,#990023 667.5px,#990018 804.5px)"></i><i style="margin-left:37px;width:803px;background:linear-gradient(90deg,#008799 0,#006399 173.5px,#00649b 174.5px,#0067a0 175.5px,#0070ae 176.5px,#028edf 178.5px,#039af2 179.5px,#059ffb 180.5px,#0aa1ff 183.5px,#9c7eff 267.5px,#fe66fd 320.5px,#ff47cd 351.5px,#ff2fa7 386.5px,#ff1984 433.5px,#ff0565 498.5px,#fe015e 515.5px,#f7015b 517.5px,#ed0057 518.5px,#cc004a 520.5px,#ab003e 522.5px,#a1003a 523.5px,#9a0037 525.5px,#990024 661.5px,#990019 802.5px)"></i><i style="margin-left:37px;width:801px;background:linear-gradient(90deg,#008599 0,#00619a 174.5px,#00639e 175.5px,#006aa9 176.5px,#0178bf 177.5px,#0188d9 178.5px,#0395ef 179.5px,#049cfa 180.5px,#079eff 182.5px,#997cff 267.5px,#fe63fd 322.5px,#ff45ce 353.5px,#ff2da8 388.5px,#ff1885 435.5px,#ff0466 500.5px,#fe0161 513.5px,#f7015d 515.5px,#ed0059 516.5px,#cc004c 518.5px,#ab003f 520.5px,#a1003c 521.5px,#9a0038 523.5px,#990025 657.5px,#990019 800.5px)"></i><i style="margin-left:38px;width:798px;background:linear-gradient(90deg,#008399 0,#005f9a 173.5px,#00619d 174.5px,#0066a6 175.5px,#0072b9 176.5px,#028fea 178.5px,#0498f8 179.5px,#059bfd 180.5px,#9779ff 266.5px,#fe60fd 323.5px,#ff42cd 355.5px,#ff2ba7 391.5px,#ff1584 439.5px,#ff0265 506.5px,#fc0162 511.5px,#f7015f 512.5px,#ed005b 513.5px,#cc004e 515.5px,#ab0041 517.5px,#a1003d 518.5px,#9a003a 520.5px,#990026 651.5px,#99001a 797.5px)"></i><i style="margin-left:39px;width:795px;background:linear-gradient(90deg,#008199 0,#005e99 172.5px,#005e9b 173.5px,#0061a0 174.5px,#006aae 175.5px,#0287df 177.5px,#0392f2 178.5px,#0597fb 179.5px,#0998ff 182.5px,#9b75ff 269.5px,#fe5dfd 324.5px,#ff40cd 356.5px,#ff29a7 392.5px,#ff1484 441.5px,#fe0165 507.5px,#f70161 509.5px,#ed005d 510.5px,#cc0050 512.5px,#ab0042 514.5px,#a1003e 515.5px,#9a003b 517.5px,#990027 645.5px,#99001a 794.5px)"></i><i style="margin-left:40px;width:792px;background:linear-gradient(90deg,#007f99 0,#005c9a 172.5px,#005e9e 173.5px,#0065a9 174.5px,#0171bf 175.5px,#0181d9 176.5px,#038def 177.5px,#0494fa 178.5px,#0796ff 180.5px,#9973ff 268.5px,#fe5afd 325.5px,#ff3ece 357.5px,#ff27a7 394.5px,#ff1284 443.5px,#fe0167 504.5px,#f70164 506.5px,#ed005f 507.5px,#cc0051 509.5px,#ab0044 511.5px,#a10040 512.5px,#9a003c 514.5px,#990028 640.5px,#99001b 791.5px)"></i><i style="margin-left:41px;width:789px;background:linear-gradient(90deg,#007d99 0,#005a9a 171.5px,#005c9d 172.5px,#0061a6 173.5px,#006cb9 174.5px,#0288ea 176.5px,#038ff8 177.5px,#0592fd 178.5px,#9771ff 267.5px,#fe57fd 326.5px,#ff3bcd 359.5px,#ff25a7 396.5px,#ff1084 446.5px,#fe016a 501.5px,#f70166 503.5px,#ed0161 504.5px,#cc0053 506.5px,#ab0045 508.5px,#a10041 509.5px,#9a003e 511.5px,#990029 634.5px,#99001c 788.5px)"></i><i style="margin-left:41px;width:787px;background:linear-gradient(90deg,#007b99 0,#005999 171.5px,#00599b 172.5px,#005ca0 173.5px,#0064ae 174.5px,#027fdf 176.5px,#038af2 177.5px,#048ffb 178.5px,#0990ff 181.5px,#9b6dff 271.5px,#fe54fd 328.5px,#ff39cd 361.5px,#ff23a7 399.5px,#ff0e84 450.5px,#fe016c 499.5px,#f70168 501.5px,#ed0164 502.5px,#c05 504.5px,#ab0047 506.5px,#a10043 507.5px,#9a003f 509.5px,#99002a 630.5px,#99001c 786.5px)"></i><i style="margin-left:42px;width:784px;background:linear-gradient(90deg,#007999 0,#00579a 171.5px,#00599e 172.5px,#005fa9 173.5px,#016bbf 174.5px,#017ad9 175.5px,#0386ef 176.5px,#048cfa 177.5px,#078eff 179.5px,#996bff 270.5px,#fe52fd 329.5px,#ff37ce 362.5px,#ff21a7 400.5px,#ff0d84 451.5px,#fe016e 496.5px,#f7016a 498.5px,#ed0166 499.5px,#cc0057 501.5px,#ab0048 503.5px,#a10044 504.5px,#9a0041 506.5px,#99002c 624.5px,#99001d 783.5px)"></i><i style="margin-left:43px;width:781px;background:linear-gradient(90deg,#079 0,#00569a 170.5px,#00579d 171.5px,#005ca6 172.5px,#0066b9 173.5px,#0281ea 175.5px,#0388f8 176.5px,#058bfd 177.5px,#9769ff 269.5px,#fe4ffd 330.5px,#ff34cd 364.5px,#ff1fa7 402.5px,#ff0c85 453.5px,#fe0171 493.5px,#f7016d 495.5px,#ed0168 496.5px,#cc0059 498.5px,#ab004a 500.5px,#a10046 501.5px,#9a0042 503.5px,#99002d 619.5px,#99001d 780.5px)"></i><i style="margin-left:44px;width:778px;background:linear-gradient(90deg,#007599 0,#005499 169.5px,#00559b 170.5px,#0058a0 171.5px,#005fae 172.5px,#0279df 174.5px,#0383f2 175.5px,#0487fb 176.5px,#0988ff 179.5px,#9b65ff 272.5px,#fe4cfd 331.5px,#ff32ce 365.5px,#ff1da7 404.5px,#ff0a84 456.5px,#fe0173 490.5px,#f7016f 492.5px,#ed016a 493.5px,#cc005b 495.5px,#ab004c 497.5px,#a10047 498.5px,#9a0043 500.5px,#99002e 613.5px,#99001e 777.5px)"></i><i style="margin-left:45px;width:775px;background:linear-gradient(90deg,#007399 0,#00539a 169.5px,#00559e 170.5px,#005aa9 171.5px,#0166bf 172.5px,#0174da 173.5px,#027fef 174.5px,#0485fa 175.5px,#0786ff 177.5px,#9963ff 271.5px,#fe4afd 332.5px,#ff30ce 366.5px,#ff1ca8 405.5px,#ff0985 457.5px,#fe0176 487.5px,#f70171 489.5px,#ed016d 490.5px,#cc005d 492.5px,#ab004d 494.5px,#a10049 495.5px,#9a0045 497.5px,#990030 608.5px,#99001f 774.5px)"></i><i style="margin-left:46px;width:772px;background:linear-gradient(90deg,#007299 0,#00519a 168.5px,#00539d 169.5px,#0058a8 170.5px,#0063bc 171.5px,#0170d7 172.5px,#027ced 173.5px,#0382f9 174.5px,#0684ff 176.5px,#9861ff 271.5px,#fe47fd 333.5px,#ff2ecd 368.5px,#ff19a7 408.5px,#ff0784 461.5px,#fe0178 484.5px,#f70174 486.5px,#ed016f 487.5px,#cc005f 489.5px,#ab004f 491.5px,#a1004a 492.5px,#9a0046 494.5px,#990031 603.5px,#99001f 771.5px)"></i><i style="margin-left:46px;width:770px;background:linear-gradient(90deg,#007099 0,#00509a 168.5px,#00519c 169.5px,#0054a3 170.5px,#005db4 171.5px,#0275e4 173.5px,#037df5 174.5px,#0481fc 175.5px,#0d80ff 181.5px,#a05cff 277.5px,#fe44fd 335.5px,#ff2cce 370.5px,#ff18a7 410.5px,#ff0684 464.5px,#fe017b 482.5px,#f70176 484.5px,#ed0171 485.5px,#cc0061 487.5px,#ab0051 489.5px,#a1004c 490.5px,#9a0048 492.5px,#990032 599.5px,#990020 769.5px)"></i><i style="margin-left:47px;width:767px;background:linear-gradient(90deg,#006e99 0,#004f9a 168.5px,#00519f 169.5px,#0057ab 170.5px,#0162c1 171.5px,#016fdc 172.5px,#0279f0 173.5px,#047efb 174.5px,#077fff 176.5px,#995cff 273.5px,#fe42fd 336.5px,#ff2ace 371.5px,#ff17a8 411.5px,#ff0585 465.5px,#fe017d 479.5px,#f70179 481.5px,#ed0174 482.5px,#cc0063 484.5px,#ab0052 486.5px,#a1004d 487.5px,#9a0049 489.5px,#903 594.5px,#990021 766.5px)"></i><i style="margin-left:48px;width:764px;background:linear-gradient(90deg,#006d99 0,#004d9a 167.5px,#004f9d 168.5px,#0054a8 169.5px,#005ebc 170.5px,#016bd7 171.5px,#0275ed 172.5px,#037bf9 173.5px,#067dff 175.5px,#9859ff 273.5px,#fe40fd 337.5px,#ff27cd 373.5px,#ff14a7 414.5px,#ff0384 469.5px,#fd017f 477.5px,#f9017d 478.5px,#ef0177 479.5px,#e0006f 480.5px,#ba005c 482.5px,#ab0054 483.5px,#a1004f 484.5px,#9a004b 486.5px,#990035 588.5px,#990021 763.5px)"></i><i style="margin-left:49px;width:761px;background:linear-gradient(90deg,#006b99 0,#004c9a 166.5px,#004d9c 167.5px,#0050a3 168.5px,#0058b4 169.5px,#026fe4 171.5px,#0377f5 172.5px,#047afc 173.5px,#0d79ff 179.5px,#9f55ff 278.5px,#fe3dfd 338.5px,#ff26ce 374.5px,#ff13a8 415.5px,#ff0285 470.5px,#fe0182 474.5px,#f6017d 476.5px,#ea0076 477.5px,#ae0057 480.5px,#a20051 481.5px,#9a004c 483.5px,#990036 583.5px,#902 759.5px,#902 760.5px)"></i><i style="margin-left:50px;width:758px;background:linear-gradient(90deg,#006a99 0,#004b9a 166.5px,#004d9f 167.5px,#0052ab 168.5px,#015dc1 169.5px,#0169dc 170.5px,#0273f0 171.5px,#0477fb 172.5px,#0679ff 174.5px,#9855ff 274.5px,#fe3bfd 339.5px,#ff24ce 375.5px,#ff11a7 417.5px,#fe0185 471.5px,#f70180 473.5px,#ed007b 474.5px,#de0072 475.5px,#b8005e 477.5px,#a90056 478.5px,#9f0051 479.5px,#99004d 481.5px,#990036 587.5px,#990023 757.5px)"></i><i style="margin-left:51px;width:756px;background:linear-gradient(90deg,#006899 0,#00499a 165.5px,#004b9d 166.5px,#004fa8 167.5px,#0059bc 168.5px,#0165d7 169.5px,#026fed 170.5px,#0375f9 171.5px,#0677ff 173.5px,#9853ff 274.5px,#fe39fd 340.5px,#ff22ce 377.5px,#ff10a7 419.5px,#fe0188 468.5px,#f70183 470.5px,#ed007d 471.5px,#cc006b 473.5px,#ab0059 475.5px,#a10054 476.5px,#9a004f 478.5px,#990039 576.5px,#990024 746.5px,#990023 755.5px)"></i><i style="margin-left:52px;width:753px;background:linear-gradient(90deg,#069 0,#00489a 164.5px,#00499c 165.5px,#004ca3 166.5px,#0053b4 167.5px,#026ae4 169.5px,#0371f5 170.5px,#0474fc 171.5px,#0c73ff 177.5px,#9f4fff 279.5px,#fe36fd 341.5px,#ff20ce 378.5px,#ff0ea8 420.5px,#fe018b 465.5px,#f70185 467.5px,#ed0080 468.5px,#cc006d 470.5px,#ab005b 472.5px,#a10055 473.5px,#9a0051 475.5px,#99003a 570.5px,#990025 735.5px,#990024 752.5px)"></i><i style="margin-left:52px;width:751px;background:linear-gradient(90deg,#006599 0,#00479a 165.5px,#00499f 166.5px,#004eab 167.5px,#0158c1 168.5px,#0164dc 169.5px,#026df0 170.5px,#0471fb 171.5px,#0673ff 173.5px,#984eff 276.5px,#fe34fd 343.5px,#ff1ece 380.5px,#ff0da8 423.5px,#fe018d 463.5px,#f70188 465.5px,#ed0082 466.5px,#cc006f 468.5px,#ab005d 470.5px,#a10057 471.5px,#9a0052 473.5px,#99003c 566.5px,#990027 727.5px,#990025 750.5px)"></i><i style="margin-left:53px;width:748px;background:linear-gradient(90deg,#006499 0,#00469a 164.5px,#00479d 165.5px,#004ba8 166.5px,#0054bc 167.5px,#0160d7 168.5px,#026aed 169.5px,#036ff9 170.5px,#0671ff 172.5px,#984cff 276.5px,#fe32fe 344.5px,#ff1cce 382.5px,#ff0ba8 425.5px,#fe0190 460.5px,#f7018b 462.5px,#ed0085 463.5px,#cc0072 465.5px,#ab005f 467.5px,#a10059 468.5px,#9a0054 470.5px,#99003d 561.5px,#990028 719.5px,#990025 747.5px)"></i><i style="margin-left:54px;width:745px;background:linear-gradient(90deg,#006299 0,#00449a 163.5px,#00459c 164.5px,#0048a3 165.5px,#004fb4 166.5px,#0264e4 168.5px,#036bf5 169.5px,#046efc 170.5px,#0c6dff 176.5px,#9f49ff 281.5px,#fe30fe 345.5px,#ff1bce 383.5px,#ff0aa7 427.5px,#fe0193 457.5px,#f7018e 459.5px,#ed0188 460.5px,#cc0074 462.5px,#ab0060 464.5px,#a1005b 465.5px,#9a0056 467.5px,#99003f 556.5px,#990029 710.5px,#990026 744.5px)"></i><i style="margin-left:55px;width:742px;background:linear-gradient(90deg,#006199 0,#00439a 163.5px,#00459f 164.5px,#004aab 165.5px,#0154c1 166.5px,#015fdc 167.5px,#0267f0 168.5px,#046cfb 169.5px,#066dff 171.5px,#9848ff 277.5px,#fe2efe 346.5px,#ff19ce 384.5px,#ff09a8 428.5px,#fe0196 454.5px,#f70191 456.5px,#ed018a 457.5px,#cc0076 459.5px,#ab0062 461.5px,#a1005c 462.5px,#9a0058 464.5px,#990040 551.5px,#99002b 701.5px,#990027 741.5px)"></i><i style="margin-left:56px;width:739px;background:linear-gradient(90deg,#005f99 0,#00429a 162.5px,#00439d 163.5px,#0048a8 164.5px,#0050bc 165.5px,#015bd7 166.5px,#0264ed 167.5px,#0369f9 168.5px,#066bff 170.5px,#9846ff 277.5px,#fe2cfe 347.5px,#ff17ce 386.5px,#ff07a7 431.5px,#fe0199 451.5px,#f70194 453.5px,#ed018d 454.5px,#cc0079 456.5px,#ab0064 458.5px,#a1005e 459.5px,#9a0059 461.5px,#990042 546.5px,#99002c 692.5px,#990027 738.5px)"></i><i style="margin-left:57px;width:736px;background:linear-gradient(90deg,#005e99 0,#00419a 161.5px,#00429c 162.5px,#0045a3 163.5px,#004bb4 164.5px,#025fe4 166.5px,#0366f5 167.5px,#0468fc 168.5px,#0c68ff 174.5px,#9e43ff 282.5px,#fe2afe 348.5px,#ff16ce 387.5px,#ff06a8 432.5px,#fe019c 448.5px,#f70197 450.5px,#ed0190 451.5px,#cc007b 453.5px,#ab0066 455.5px,#a10060 456.5px,#9a005b 458.5px,#990043 542.5px,#99002d 686.5px,#990028 735.5px)"></i><i style="margin-left:58px;width:733px;background:linear-gradient(90deg,#005c99 0,#00409a 161.5px,#00429f 162.5px,#0046ab 163.5px,#014fc1 164.5px,#015adc 165.5px,#0262f0 166.5px,#0366fb 167.5px,#0667ff 169.5px,#9842ff 278.5px,#fe28fe 349.5px,#ff14cf 388.5px,#ff05a8 433.5px,#fe019f 445.5px,#f7019a 447.5px,#ed0193 448.5px,#cc007d 450.5px,#ab0068 452.5px,#a10062 453.5px,#9a005d 455.5px,#990045 537.5px,#99002f 677.5px,#990029 732.5px)"></i><i style="margin-left:59px;width:730px;background:linear-gradient(90deg,#005b99 0,#003f9a 160.5px,#00409d 161.5px,#0044a8 162.5px,#004cbc 163.5px,#0157d7 164.5px,#025fed 165.5px,#0364f9 166.5px,#0666ff 168.5px,#9841ff 278.5px,#fe26fe 350.5px,#ff13ce 390.5px,#ff03a7 436.5px,#fe01a3 442.5px,#f7019d 444.5px,#ed0196 445.5px,#cc0080 447.5px,#ab006a 449.5px,#a10064 450.5px,#9a005f 452.5px,#990047 532.5px,#990030 669.5px,#990029 729.5px)"></i><i style="margin-left:60px;width:727px;background:linear-gradient(90deg,#005a99 0,#003e9a 159.5px,#003e9c 160.5px,#0041a3 161.5px,#0047b4 162.5px,#025ae4 164.5px,#0361f5 165.5px,#0463fc 166.5px,#0b62ff 172.5px,#9e3dff 283.5px,#fe24fe 351.5px,#ff11ce 391.5px,#fe01a6 439.5px,#f701a0 441.5px,#ed0199 442.5px,#cc0082 444.5px,#ab006d 446.5px,#a10066 447.5px,#9a0061 449.5px,#990049 527.5px,#990032 660.5px,#99002a 726.5px)"></i><i style="margin-left:61px;width:724px;background:linear-gradient(90deg,#005899 0,#003d9a 159.5px,#003e9f 160.5px,#0043ab 161.5px,#014bc1 162.5px,#0156dc 163.5px,#025df0 164.5px,#0361fb 165.5px,#0662ff 167.5px,#983dff 279.5px,#fe22fe 352.5px,#ff10cf 392.5px,#fe01a9 436.5px,#f701a3 438.5px,#ed019c 439.5px,#cc0085 441.5px,#ab006f 443.5px,#a10068 444.5px,#9a0063 446.5px,#99004a 523.5px,#903 653.5px,#99002b 723.5px)"></i><i style="margin-left:61px;width:722px;background:linear-gradient(90deg,#005799 0,#003c9a 159.5px,#003d9e 160.5px,#0041a9 161.5px,#0049be 162.5px,#0153d9 163.5px,#025bef 164.5px,#035ffa 165.5px,#0560ff 167.5px,#973bff 280.5px,#fe21fe 354.5px,#ff0ece 395.5px,#fe01ac 434.5px,#f701a6 436.5px,#ed019f 437.5px,#c08 439.5px,#ab0071 441.5px,#a1006a 442.5px,#9a0064 444.5px,#99004c 519.5px,#990034 646.5px,#99002c 721.5px)"></i><i style="margin-left:62px;width:719px;background:linear-gradient(90deg,#005699 0,#003b9a 158.5px,#003c9d 159.5px,#003fa6 160.5px,#0046b9 161.5px,#0258ea 163.5px,#035df8 164.5px,#045ffd 165.5px,#963aff 279.5px,#fe1ffe 355.5px,#ff0dce 396.5px,#fe01b0 431.5px,#f701a9 433.5px,#ed01a2 434.5px,#cc008a 436.5px,#ab0073 438.5px,#a1006c 439.5px,#9a0066 441.5px,#99004e 514.5px,#990036 638.5px,#99002c 718.5px)"></i><i style="margin-left:63px;width:716px;background:linear-gradient(90deg,#059 0,#003a99 157.5px,#003a9b 158.5px,#003ca0 159.5px,#0041ae 160.5px,#0153df 162.5px,#0259f2 163.5px,#035cfb 164.5px,#075dff 167.5px,#9937ff 282.5px,#fe1dfe 356.5px,#ff0bcf 397.5px,#fe01b3 428.5px,#f701ad 430.5px,#ed01a5 431.5px,#cc008d 433.5px,#ab0075 435.5px,#a1006e 436.5px,#9a0068 438.5px,#990050 510.5px,#990038 631.5px,#99002d 715.5px)"></i><i style="margin-left:64px;width:713px;background:linear-gradient(90deg,#005499 0,#00399a 157.5px,#003a9e 158.5px,#003ea9 159.5px,#0046bf 160.5px,#014fd9 161.5px,#0257ef 162.5px,#035afa 163.5px,#055cff 165.5px,#9736ff 281.5px,#fe1bfe 357.5px,#ff0ace 399.5px,#fe01b7 425.5px,#f701b0 427.5px,#ed01a8 428.5px,#cc0090 430.5px,#ab0078 432.5px,#a10070 433.5px,#9a006a 435.5px,#990051 505.5px,#990039 623.5px,#99002e 712.5px)"></i><i style="margin-left:65px;width:711px;background:linear-gradient(90deg,#005299 0,#00389a 156.5px,#00399d 157.5px,#003ca6 158.5px,#0042b9 159.5px,#0253ea 161.5px,#0358f8 162.5px,#045afd 163.5px,#9635ff 280.5px,#fe1afe 358.5px,#ff08ce 400.5px,#fe01ba 422.5px,#f701b4 424.5px,#ed01ac 425.5px,#cc0093 427.5px,#ab007a 429.5px,#a10073 430.5px,#9a006c 432.5px,#990053 501.5px,#99003b 617.5px,#99002f 710.5px)"></i><i style="margin-left:66px;width:708px;background:linear-gradient(90deg,#005199 0,#003799 155.5px,#00379b 156.5px,#0039a0 157.5px,#003eae 158.5px,#014edf 160.5px,#0255f2 161.5px,#0358fb 162.5px,#0758ff 165.5px,#9932ff 283.5px,#fe18fe 359.5px,#ff07cf 401.5px,#fe02be 419.5px,#f701b7 421.5px,#ed01af 422.5px,#cc0095 424.5px,#ab007c 426.5px,#a10075 427.5px,#9a006f 429.5px,#905 496.5px,#99003d 609.5px,#99002f 707.5px)"></i><i style="margin-left:67px;width:705px;background:linear-gradient(90deg,#005099 0,#00369a 155.5px,#00379e 156.5px,#003ba9 157.5px,#0042bf 158.5px,#014bd9 159.5px,#0252ef 160.5px,#0356fa 161.5px,#0557ff 163.5px,#9731ff 282.5px,#fe16fe 360.5px,#ff06ce 403.5px,#fe02c2 416.5px,#f701bb 418.5px,#ed01b2 419.5px,#cc0098 421.5px,#ab007f 423.5px,#a10077 424.5px,#9a0071 426.5px,#990057 492.5px,#99003e 603.5px,#990030 704.5px)"></i><i style="margin-left:68px;width:702px;background:linear-gradient(90deg,#004f99 0,#00359a 154.5px,#00369d 155.5px,#0039a6 156.5px,#003fb9 157.5px,#024fea 159.5px,#0354f8 160.5px,#0455fd 161.5px,#9630ff 281.5px,#fe15fe 361.5px,#ff04cf 404.5px,#fe02c6 413.5px,#f701bf 415.5px,#ed01b6 416.5px,#cc009b 418.5px,#ab0081 420.5px,#a10079 421.5px,#9a0073 423.5px,#990059 487.5px,#990040 595.5px,#990031 701.5px)"></i><i style="margin-left:69px;width:699px;background:linear-gradient(90deg,#004e99 0,#003499 153.5px,#00349b 154.5px,#0036a0 155.5px,#003bae 156.5px,#014bdf 158.5px,#0251f2 159.5px,#0353fb 160.5px,#0754ff 163.5px,#992eff 284.5px,#fe13fe 362.5px,#ff03cf 405.5px,#fe01c8 411.5px,#fb01c5 412.5px,#f301be 413.5px,#e401b2 414.5px,#bc0091 416.5px,#ac0084 417.5px,#a2007c 418.5px,#9a0075 420.5px,#99005b 483.5px,#990042 588.5px,#990032 698.5px)"></i><i style="margin-left:70px;width:696px;background:linear-gradient(90deg,#004d99 0,#00339a 153.5px,#00349e 154.5px,#0038a9 155.5px,#003fbf 156.5px,#0147d9 157.5px,#024eef 158.5px,#0352fa 159.5px,#0553ff 161.5px,#972dff 283.5px,#fe12fe 363.5px,#fe01cd 408.5px,#f601c5 410.5px,#ec01bc 411.5px,#dc00ae 412.5px,#b4008d 414.5px,#a50081 415.5px,#9d007a 416.5px,#990076 419.5px,#990059 492.5px,#990040 602.5px,#990032 695.5px)"></i><i style="margin-left:71px;width:693px;background:linear-gradient(90deg,#004b99 0,#00329a 152.5px,#00339d 153.5px,#0036a6 154.5px,#003cb9 155.5px,#024bea 157.5px,#034ff8 158.5px,#0451fd 159.5px,#952cff 282.5px,#fe10fe 364.5px,#fe01d0 405.5px,#f701c9 407.5px,#ed01c0 408.5px,#cc00a4 410.5px,#ab0088 412.5px,#a1007f 413.5px,#9a0079 415.5px,#99005d 480.5px,#904 583.5px,#903 692.5px)"></i><i style="margin-left:72px;width:690px;background:linear-gradient(90deg,#004a99 0,#003299 151.5px,#00329b 152.5px,#0033a0 153.5px,#0038ae 154.5px,#0147df 156.5px,#024df2 157.5px,#034ffb 158.5px,#074fff 161.5px,#9929ff 285.5px,#fe0ffe 365.5px,#fe01d5 402.5px,#f701cd 404.5px,#ed01c4 405.5px,#cc00a7 407.5px,#ab008b 409.5px,#a10082 410.5px,#9a007b 412.5px,#990061 471.5px,#990047 570.5px,#990034 689.5px)"></i><i style="margin-left:73px;width:687px;background:linear-gradient(90deg,#004999 0,#00319a 151.5px,#00329e 152.5px,#0035a9 153.5px,#003cbf 154.5px,#0144d9 155.5px,#024aef 156.5px,#034efa 157.5px,#054eff 159.5px,#9728ff 284.5px,#fe0dfd 367.5px,#fe01d9 399.5px,#f701d0 401.5px,#ed01c7 402.5px,#c0a 404.5px,#ab008d 406.5px,#a10085 407.5px,#9a007e 409.5px,#990063 467.5px,#990049 564.5px,#990035 686.5px)"></i><i style="margin-left:74px;width:684px;background:linear-gradient(90deg,#004899 0,#00309a 150.5px,#00319d 151.5px,#0033a6 152.5px,#0039b9 153.5px,#0247ea 155.5px,#034bf8 156.5px,#044dfd 157.5px,#9527ff 283.5px,#fe0bfd 368.5px,#fe01dd 396.5px,#f701d5 398.5px,#ed01cb 399.5px,#cc00ad 401.5px,#ab0090 403.5px,#a10087 404.5px,#9a0080 406.5px,#906 462.5px,#99004b 556.5px,#990036 683.5px)"></i><i style="margin-left:75px;width:681px;background:linear-gradient(90deg,#004799 0,#002f99 149.5px,#002f9b 150.5px,#0031a0 151.5px,#0035ae 152.5px,#0143df 154.5px,#0249f2 155.5px,#034bfb 156.5px,#064bff 159.5px,#9925ff 286.5px,#fe0afd 369.5px,#fe01e1 393.5px,#f701d9 395.5px,#ed01cf 396.5px,#cc00b1 398.5px,#ab0093 400.5px,#a1008a 401.5px,#9a0083 403.5px,#990068 458.5px,#99004d 550.5px,#990037 680.5px)"></i><i style="margin-left:76px;width:678px;background:linear-gradient(90deg,#004699 0,#002e9a 149.5px,#002f9e 150.5px,#0033a9 151.5px,#0039bf 152.5px,#0141da 153.5px,#0247ef 154.5px,#034afa 155.5px,#054aff 157.5px,#9724ff 285.5px,#fe08fd 370.5px,#fe01e6 390.5px,#f701dd 392.5px,#ed01d3 393.5px,#cc00b4 395.5px,#ab0096 397.5px,#a1008d 398.5px,#9a0085 400.5px,#99006a 454.5px,#99004f 544.5px,#990037 677.5px)"></i><i style="margin-left:77px;width:675px;background:linear-gradient(90deg,#004599 0,#002e9a 148.5px,#002e9d 149.5px,#0031a8 150.5px,#0037bc 151.5px,#013fd7 152.5px,#0245ed 153.5px,#0248f9 154.5px,#0549ff 156.5px,#9723ff 285.5px,#fe07fd 371.5px,#fe02ea 387.5px,#f701e1 389.5px,#ed01d7 390.5px,#cc00b8 392.5px,#ab0099 394.5px,#a1008f 395.5px,#9a0088 397.5px,#99006d 449.5px,#990051 536.5px,#990039 668.5px,#990038 674.5px)"></i><i style="margin-left:78px;width:672px;background:linear-gradient(90deg,#049 0,#002d9a 147.5px,#002d9c 148.5px,#002fa3 149.5px,#0034b4 150.5px,#0141e4 152.5px,#0246f5 153.5px,#0348fc 154.5px,#0a47ff 160.5px,#9c20ff 290.5px,#fe06fd 372.5px,#fe02ef 384.5px,#f701e5 386.5px,#ed01db 387.5px,#c0b 389.5px,#ab009c 391.5px,#a10092 392.5px,#9a008a 394.5px,#99006f 445.5px,#990053 530.5px,#99003b 659.5px,#990039 671.5px)"></i><i style="margin-left:79px;width:669px;background:linear-gradient(90deg,#004399 0,#002c9a 147.5px,#002d9f 148.5px,#0030ab 149.5px,#0037c1 150.5px,#013edc 151.5px,#0243f0 152.5px,#0346fb 153.5px,#0547ff 155.5px,#9720ff 286.5px,#fe04fd 373.5px,#fe02f3 381.5px,#f701ea 383.5px,#ed01e0 384.5px,#cc00bf 386.5px,#ab009f 388.5px,#a10095 389.5px,#9a008d 391.5px,#990072 441.5px,#905 524.5px,#99003d 649.5px,#99003a 668.5px)"></i><i style="margin-left:80px;width:666px;background:linear-gradient(90deg,#004299 0,#002b9a 146.5px,#002c9d 147.5px,#002fa8 148.5px,#0034bc 149.5px,#013cd7 150.5px,#0241ed 151.5px,#0245f9 152.5px,#0545ff 154.5px,#971fff 286.5px,#fe03fd 374.5px,#fe02f8 378.5px,#f701ee 380.5px,#ed01e4 381.5px,#cc00c2 383.5px,#ab00a2 385.5px,#a10098 386.5px,#9a0090 388.5px,#990074 437.5px,#990057 519.5px,#99003e 641.5px,#99003b 665.5px)"></i><i style="margin-left:81px;width:663px;background:linear-gradient(90deg,#004199 0,#002b9a 145.5px,#002b9c 146.5px,#002da3 147.5px,#0031b4 148.5px,#013ee4 150.5px,#0242f5 151.5px,#0344fc 152.5px,#0943ff 158.5px,#9c1cff 291.5px,#fe02fe 374.5px,#fb01f9 376.5px,#f601f3 377.5px,#ed01e8 378.5px,#cc00c6 380.5px,#ab00a5 382.5px,#a1009b 383.5px,#9a0092 385.5px,#907 432.5px,#99005a 511.5px,#990041 629.5px,#99003c 662.5px)"></i><i style="margin-left:82px;width:661px;background:linear-gradient(90deg,#004099 0,#002a9a 145.5px,#002b9f 146.5px,#002eab 147.5px,#0034c1 148.5px,#013bdc 149.5px,#0240f0 150.5px,#0342fb 151.5px,#0543ff 153.5px,#971cff 287.5px,#fa02fe 372.5px,#f501f6 374.5px,#ec01ec 375.5px,#de00dd 376.5px,#ba00b7 378.5px,#ab00a8 379.5px,#a1009e 380.5px,#9a0095 382.5px,#990079 428.5px,#99005c 505.5px,#990043 620.5px,#99003c 660.5px)"></i><i style="margin-left:83px;width:658px;background:linear-gradient(90deg,#003f99 0,#00299a 144.5px,#002a9d 145.5px,#002ca8 146.5px,#0032bc 147.5px,#0138d7 148.5px,#023eed 149.5px,#0241f9 150.5px,#0442ff 152.5px,#961bff 287.5px,#f602fe 369.5px,#f101f7 371.5px,#e801ed 372.5px,#db00de 373.5px,#b900b9 375.5px,#a0a 376.5px,#a100a0 377.5px,#9a0098 379.5px,#99007c 425.5px,#99005e 501.5px,#904 613.5px,#99003d 657.5px)"></i><i style="margin-left:84px;width:655px;background:linear-gradient(90deg,#003e99 0,#00289a 143.5px,#00299c 144.5px,#002ba3 145.5px,#002fb4 146.5px,#013be4 148.5px,#023ff5 149.5px,#0340fc 150.5px,#0940ff 156.5px,#9c19ff 292.5px,#f102fe 366.5px,#ec01f7 368.5px,#e401ed 369.5px,#c600cc 371.5px,#a800ab 373.5px,#9f00a1 374.5px,#99009a 376.5px,#990079 432.5px,#99005c 511.5px,#990042 628.5px,#99003e 654.5px)"></i><i style="margin-left:85px;width:652px;background:linear-gradient(90deg,#003d99 0,#00289a 143.5px,#00299f 144.5px,#002cab 145.5px,#0031c1 146.5px,#0138dc 147.5px,#023df0 148.5px,#033ffb 149.5px,#0540ff 151.5px,#9719ff 288.5px,#ec02fe 363.5px,#e801f7 365.5px,#e001ed 366.5px,#c200cc 368.5px,#a500ab 370.5px,#9c00a1 371.5px,#96009a 373.5px,#99008a 401.5px,#99006b 467.5px,#99004f 562.5px,#99003f 651.5px)"></i><i style="margin-left:86px;width:649px;background:linear-gradient(90deg,#003d99 0,#00279a 142.5px,#00289d 143.5px,#002aa8 144.5px,#002fbc 145.5px,#0136d7 146.5px,#023bed 147.5px,#023ef9 148.5px,#043eff 150.5px,#9618ff 288.5px,#e802fe 360.5px,#e301f7 362.5px,#db01ed 363.5px,#bf00cc 365.5px,#a200ab 367.5px,#9900a1 368.5px,#94009a 370.5px,#990094 386.5px,#990074 446.5px,#990057 531.5px,#990040 648.5px)"></i><i style="margin-left:87px;width:646px;background:linear-gradient(90deg,#003c99 0,#00269a 141.5px,#00279c 142.5px,#0028a3 143.5px,#002cb4 144.5px,#0138e4 146.5px,#023cf5 147.5px,#033dfc 148.5px,#093cff 154.5px,#9c15ff 293.5px,#e302fe 357.5px,#df01f7 359.5px,#d701ed 360.5px,#b0c 362.5px,#9e00ab 364.5px,#9600a1 365.5px,#91009a 367.5px,#990096 385.5px,#990075 444.5px,#990059 528.5px,#990041 645.5px)"></i><i style="margin-left:89px;width:642px;background:linear-gradient(90deg,#003b99 0,#00269a 140.5px,#00279f 141.5px,#0029ab 142.5px,#002fc1 143.5px,#0135dc 144.5px,#0239f0 145.5px,#033cfb 146.5px,#053cff 148.5px,#9715ff 288.5px,#df02fe 353.5px,#da01f7 355.5px,#d301ed 356.5px,#b800cc 358.5px,#9b00ab 360.5px,#9300a1 361.5px,#8e009a 363.5px,#990096 384.5px,#990076 443.5px,#990059 527.5px,#990042 641.5px)"></i><i style="margin-left:90px;width:639px;background:linear-gradient(90deg,#003a99 0,#00259a 139.5px,#00269d 140.5px,#0028a8 141.5px,#002dbc 142.5px,#0133d7 143.5px,#0238ed 144.5px,#023af9 145.5px,#043bff 147.5px,#9614ff 288.5px,#da02fe 350.5px,#d601f7 352.5px,#cf01ed 353.5px,#b400cc 355.5px,#9900ab 357.5px,#9100a1 358.5px,#8b009a 360.5px,#990096 385.5px,#990076 445.5px,#990059 530.5px,#990043 638.5px)"></i><i style="margin-left:91px;width:636px;background:linear-gradient(90deg,#003999 0,#00249a 138.5px,#00259c 139.5px,#0026a3 140.5px,#002ab4 141.5px,#0135e4 143.5px,#0238f5 144.5px,#033afc 145.5px,#0939ff 151.5px,#9b12ff 293.5px,#d602fe 347.5px,#d201f7 349.5px,#cb01ed 350.5px,#b100cc 352.5px,#9600ab 354.5px,#8e00a1 355.5px,#89009a 357.5px,#990097 385.5px,#990076 445.5px,#99005a 530.5px,#904 635.5px)"></i><i style="margin-left:92px;width:633px;background:linear-gradient(90deg,#003899 0,#00249a 138.5px,#00259f 139.5px,#0027ab 140.5px,#002cc1 141.5px,#0132dc 142.5px,#0236f0 143.5px,#0339fb 144.5px,#0539ff 146.5px,#9712ff 289.5px,#d201fd 345.5px,#d001f9 346.5px,#c901ef 347.5px,#bd01e0 348.5px,#9f00ba 350.5px,#9300ab 351.5px,#8b00a1 352.5px,#86009a 354.5px,#990097 386.5px,#990076 447.5px,#990059 533.5px,#990045 632.5px)"></i><i style="margin-left:93px;width:630px;background:linear-gradient(90deg,#003799 0,#00239a 137.5px,#00249e 138.5px,#0026a9 139.5px,#002bbe 140.5px,#0131d9 141.5px,#0235ef 142.5px,#0238fa 143.5px,#0438ff 145.5px,#9611ff 289.5px,#cf01fe 342.5px,#ca01f6 344.5px,#c101ea 345.5px,#9300ae 348.5px,#8900a2 349.5px,#84009a 351.5px,#990097 387.5px,#990076 448.5px,#99005a 534.5px,#990046 629.5px)"></i><i style="margin-left:94px;width:627px;background:linear-gradient(90deg,#003699 0,#00229a 136.5px,#00239d 137.5px,#0025a6 138.5px,#0029b9 139.5px,#0133ea 141.5px,#0236f8 142.5px,#0337fd 143.5px,#8315ff 271.5px,#cb01fe 339.5px,#c701f7 341.5px,#c001ed 342.5px,#b500de 343.5px,#9800b8 345.5px,#8c00a9 346.5px,#85009f 347.5px,#810099 349.5px,#990097 388.5px,#990076 450.5px,#990059 537.5px,#990047 626.5px)"></i><i style="margin-left:95px;width:624px;background:linear-gradient(90deg,#003699 0,#029 135.5px,#00229b 136.5px,#0023a0 137.5px,#0026ae 138.5px,#0130df 140.5px,#0234f2 141.5px,#0336fb 142.5px,#0536ff 145.5px,#980eff 291.5px,#c701fe 336.5px,#c301f7 338.5px,#bd01ed 339.5px,#a400cc 341.5px,#8b00ab 343.5px,#8400a1 344.5px,#7f009a 346.5px,#990097 389.5px,#990076 451.5px,#990059 539.5px,#990048 623.5px)"></i><i style="margin-left:96px;width:621px;background:linear-gradient(90deg,#003599 0,#00219a 135.5px,#00229e 136.5px,#0024a9 137.5px,#0029bf 138.5px,#012ed9 139.5px,#0132ef 140.5px,#0235fa 141.5px,#0435ff 143.5px,#960eff 290.5px,#c301fe 333.5px,#bf01f7 335.5px,#b901ed 336.5px,#a100cc 338.5px,#8800ab 340.5px,#8100a1 341.5px,#7d009a 343.5px,#990097 390.5px,#907 452.5px,#99005a 540.5px,#990049 620.5px)"></i><i style="margin-left:97px;width:618px;background:linear-gradient(90deg,#003499 0,#00219a 134.5px,#00219d 135.5px,#0023a6 136.5px,#0027b9 137.5px,#0131ea 139.5px,#0233f8 140.5px,#0334fd 141.5px,#8112ff 270.5px,#bf01fe 330.5px,#bc01f7 332.5px,#b501ed 333.5px,#9e00cc 335.5px,#8600ab 337.5px,#7f00a1 338.5px,#7a009a 340.5px,#990097 391.5px,#990076 454.5px,#990059 543.5px,#99004a 617.5px)"></i><i style="margin-left:98px;width:615px;background:linear-gradient(90deg,#039 0,#002099 133.5px,#00209b 134.5px,#0021a0 135.5px,#0024ae 136.5px,#012edf 138.5px,#0231f2 139.5px,#0333fb 140.5px,#0533ff 143.5px,#980bff 292.5px,#bb01fe 327.5px,#b801f7 329.5px,#b201ed 330.5px,#9b00cc 332.5px,#8300ab 334.5px,#7c00a1 335.5px,#78009a 337.5px,#990097 392.5px,#907 455.5px,#99005a 544.5px,#99004b 614.5px)"></i><i style="margin-left:100px;width:612px;background:linear-gradient(90deg,#003299 0,#00209a 132.5px,#00209e 133.5px,#0022a9 134.5px,#0026bf 135.5px,#012cd9 136.5px,#0130ef 137.5px,#0232fa 138.5px,#0432ff 140.5px,#960bff 290.5px,#b801fe 323.5px,#b401f7 325.5px,#ae01ed 326.5px,#9800cc 328.5px,#8100ab 330.5px,#7a00a1 331.5px,#76009a 333.5px,#990097 392.5px,#990076 456.5px,#990059 546.5px,#99004b 611.5px)"></i><i style="margin-left:101px;width:609px;background:linear-gradient(90deg,#003299 0,#001f9a 131.5px,#001f9d 132.5px,#0021a6 133.5px,#0025b9 134.5px,#012eea 136.5px,#0230f8 137.5px,#0331fd 138.5px,#7f10ff 267.5px,#b401fe 320.5px,#b101f7 322.5px,#ab01ed 323.5px,#9500cc 325.5px,#7e00ab 327.5px,#7800a1 328.5px,#73009a 330.5px,#990097 393.5px,#990076 457.5px,#99005a 547.5px,#99004c 608.5px)"></i><i style="margin-left:102px;width:606px;background:linear-gradient(90deg,#003199 0,#001e99 130.5px,#001f9b 131.5px,#001fa0 132.5px,#0022ae 133.5px,#012bdf 135.5px,#022ff2 136.5px,#0330fb 137.5px,#0530ff 140.5px,#9808ff 292.5px,#b001fe 317.5px,#ad01f7 319.5px,#a701ed 320.5px,#9200cc 322.5px,#7c00ab 324.5px,#7500a1 325.5px,#71009a 327.5px,#990097 394.5px,#907 458.5px,#99005a 549.5px,#99004d 605.5px)"></i><i style="margin-left:103px;width:603px;background:linear-gradient(90deg,#003099 0,#001e9a 130.5px,#001e9e 131.5px,#0020a9 132.5px,#0024bf 133.5px,#0129d9 134.5px,#012def 135.5px,#022ffa 136.5px,#042fff 138.5px,#9608ff 291.5px,#ad01fe 314.5px,#aa01f7 316.5px,#a401ed 317.5px,#8f00cc 319.5px,#7900ab 321.5px,#7300a1 322.5px,#6f009a 324.5px,#990097 395.5px,#990076 460.5px,#990059 552.5px,#99004e 602.5px)"></i><i style="margin-left:104px;width:600px;background:linear-gradient(90deg,#002f99 0,#001d9a 129.5px,#001e9d 130.5px,#001fa6 131.5px,#0023b9 132.5px,#012bea 134.5px,#022ef8 135.5px,#032ffd 136.5px,#7c0eff 265.5px,#a901fe 311.5px,#a601f7 313.5px,#a101ed 314.5px,#8c00cc 316.5px,#7700ab 318.5px,#7100a1 319.5px,#6d009a 321.5px,#990097 396.5px,#907 461.5px,#99005a 553.5px,#990050 599.5px)"></i><i style="margin-left:105px;width:597px;background:linear-gradient(90deg,#002f99 0,#001d9b 129.5px,#001ea0 130.5px,#0020ae 131.5px,#0129df 133.5px,#022cf2 134.5px,#032dfb 135.5px,#052dff 138.5px,#9705ff 293.5px,#a601fe 308.5px,#a301f7 310.5px,#9d01ed 311.5px,#8900cc 313.5px,#7400ab 315.5px,#6e00a1 316.5px,#6b009a 318.5px,#990097 397.5px,#990076 463.5px,#990059 556.5px,#990051 596.5px)"></i><i style="margin-left:106px;width:594px;background:linear-gradient(90deg,#002e99 0,#001c9a 128.5px,#001d9e 129.5px,#001fa9 130.5px,#0022bf 131.5px,#0127d9 132.5px,#012bef 133.5px,#022cfa 134.5px,#042dff 136.5px,#9605ff 292.5px,#a201fe 305.5px,#a001f7 307.5px,#9a01ed 308.5px,#8600cc 310.5px,#7200ab 312.5px,#6c00a1 313.5px,#68009a 315.5px,#990097 398.5px,#907 464.5px,#99005a 557.5px,#990052 593.5px)"></i><i style="margin-left:107px;width:591px;background:linear-gradient(90deg,#002d99 0,#001c9a 127.5px,#001c9d 128.5px,#001ea6 129.5px,#0021b9 130.5px,#0129ea 132.5px,#022bf8 133.5px,#032cfd 134.5px,#7a0cff 263.5px,#9f01fe 302.5px,#9c01f7 304.5px,#9701ed 305.5px,#8400cc 307.5px,#7000ab 309.5px,#6a00a1 310.5px,#66009a 312.5px,#990097 399.5px,#990076 466.5px,#99005a 560.5px,#990053 590.5px)"></i><i style="margin-left:109px;width:587px;background:linear-gradient(90deg,#002c99 0,#001b9b 126.5px,#001ca0 127.5px,#001eae 128.5px,#0126df 130.5px,#0229f2 131.5px,#032bfb 132.5px,#052bff 135.5px,#9703ff 293.5px,#9c01fe 298.5px,#9901f7 300.5px,#9401ed 301.5px,#8100cc 303.5px,#6d00ab 305.5px,#6800a1 306.5px,#64009a 308.5px,#990097 399.5px,#907 466.5px,#99005a 561.5px,#990054 586.5px)"></i><i style="margin-left:110px;width:584px;background:linear-gradient(90deg,#002c99 0,#001b9a 125.5px,#001b9e 126.5px,#001da9 127.5px,#0020bf 128.5px,#0125d9 129.5px,#0128ef 130.5px,#022afa 131.5px,#042aff 133.5px,#9801fe 295.5px,#9601f7 297.5px,#9101ed 298.5px,#7e00cc 300.5px,#6b00ab 302.5px,#6600a1 303.5px,#62009a 305.5px,#990097 400.5px,#907 467.5px,#99005a 562.5px,#905 583.5px)"></i><i style="margin-left:111px;width:581px;background:linear-gradient(90deg,#002b99 0,#001a9a 124.5px,#001a9d 125.5px,#001ca6 126.5px,#001fb9 127.5px,#0127ea 129.5px,#0229f8 130.5px,#0329fd 131.5px,#770aff 260.5px,#9501fe 292.5px,#9301f7 294.5px,#8e01ed 295.5px,#7c00cc 297.5px,#6900ab 299.5px,#6400a1 300.5px,#60009a 302.5px,#990097 401.5px,#990076 469.5px,#99005a 565.5px,#990056 580.5px)"></i><i style="margin-left:112px;width:578px;background:linear-gradient(90deg,#002a99 0,#001a9b 124.5px,#001aa0 125.5px,#001dae 126.5px,#0124df 128.5px,#0227f2 129.5px,#0328fb 130.5px,#0528ff 133.5px,#9201fe 289.5px,#9001f7 291.5px,#8b01ed 292.5px,#7900cc 294.5px,#6700ab 296.5px,#6200a1 297.5px,#5e009a 299.5px,#990097 402.5px,#907 470.5px,#99005a 566.5px,#990057 577.5px)"></i><i style="margin-left:113px;width:575px;background:linear-gradient(90deg,#002a99 0,#00199a 123.5px,#001a9e 124.5px,#001ba9 125.5px,#001fbf 126.5px,#0123da 127.5px,#0126ef 128.5px,#0227fa 129.5px,#0428ff 131.5px,#8f01fe 286.5px,#8d01f7 288.5px,#8801ed 289.5px,#7600cc 291.5px,#6500ab 293.5px,#6000a1 294.5px,#5c009a 296.5px,#990097 403.5px,#990076 472.5px,#99005a 569.5px,#990058 574.5px)"></i><i style="margin-left:114px;width:572px;background:linear-gradient(90deg,#002999 0,#00199a 122.5px,#00199d 123.5px,#001ba8 124.5px,#001ebc 125.5px,#0122d7 126.5px,#0125ed 127.5px,#0227f9 128.5px,#0427ff 130.5px,#8c01fe 283.5px,#8a01f7 285.5px,#8501ed 286.5px,#7400cc 288.5px,#6300ab 290.5px,#5e00a1 291.5px,#5a009a 293.5px,#990097 404.5px,#907 473.5px,#99005a 570.5px,#99005a 571.5px)"></i><i style="margin-left:116px;width:568px;background:linear-gradient(90deg,#002899 0,#00189a 120.5px,#00189c 121.5px,#0019a3 122.5px,#001cb4 123.5px,#0123e4 125.5px,#0225f5 126.5px,#0326fc 127.5px,#0825ff 133.5px,#8901fe 279.5px,#8701f7 281.5px,#8201ed 282.5px,#7200cc 284.5px,#6000ab 286.5px,#5c00a1 287.5px,#59009a 289.5px,#990097 404.5px,#907 473.5px,#99005b 567.5px)"></i><i style="margin-left:117px;width:565px;background:linear-gradient(90deg,#002899 0,#00189a 120.5px,#00189f 121.5px,#001aab 122.5px,#001dc1 123.5px,#0121dc 124.5px,#0124f0 125.5px,#0225fb 126.5px,#0425ff 128.5px,#8601fe 276.5px,#8401f7 278.5px,#8001ed 279.5px,#6f00cc 281.5px,#5e00ab 283.5px,#5a00a1 284.5px,#57009a 286.5px,#990097 405.5px,#907 475.5px,#99005c 564.5px)"></i><i style="margin-left:118px;width:562px;background:linear-gradient(90deg,#002799 0,#00179a 119.5px,#00189d 120.5px,#0019a8 121.5px,#001cbc 122.5px,#0120d7 123.5px,#0123ed 124.5px,#0224f9 125.5px,#0425ff 127.5px,#8401fe 274.5px,#8301fb 275.5px,#8001f3 276.5px,#7900e4 277.5px,#6500bc 279.5px,#5d00ac 280.5px,#5800a2 281.5px,#55009a 283.5px,#990097 406.5px,#907 476.5px,#99005d 561.5px)"></i><i style="margin-left:119px;width:560px;background:linear-gradient(90deg,#002699 0,#00179a 118.5px,#00179c 119.5px,#0018a3 120.5px,#001ab4 121.5px,#0121e4 123.5px,#0223f5 124.5px,#0224fc 125.5px,#0723ff 131.5px,#8101fe 271.5px,#7f01f6 273.5px,#7a00ec 274.5px,#7300dc 275.5px,#5f00b4 277.5px,#5800a5 278.5px,#54009d 279.5px,#540099 282.5px,#990097 407.5px,#907 478.5px,#99005e 559.5px)"></i><i style="margin-left:120px;width:557px;background:linear-gradient(90deg,#002699 0,#00169a 118.5px,#00179f 119.5px,#0018ab 120.5px,#001bc1 121.5px,#011fdc 122.5px,#0122f0 123.5px,#0223fb 124.5px,#0423ff 126.5px,#7e01fe 268.5px,#7c01f7 270.5px,#7800ed 271.5px,#6900cc 273.5px,#5900ab 275.5px,#5400a1 276.5px,#52009a 278.5px,#990097 408.5px,#907 479.5px,#99005f 556.5px)"></i><i style="margin-left:121px;width:554px;background:linear-gradient(90deg,#002599 0,#00169a 117.5px,#00169d 118.5px,#0017a8 119.5px,#001abc 120.5px,#011ed7 121.5px,#0121ed 122.5px,#0222f9 123.5px,#0422ff 125.5px,#7b01fe 265.5px,#7901f7 267.5px,#7500ed 268.5px,#60c 270.5px,#5700ab 272.5px,#5300a1 273.5px,#50009a 275.5px,#990097 409.5px,#907 480.5px,#990061 553.5px)"></i><i style="margin-left:123px;width:550px;background:linear-gradient(90deg,#002499 0,#00159a 115.5px,#00169c 116.5px,#0016a3 117.5px,#0018b4 118.5px,#011fe4 120.5px,#0221f5 121.5px,#0222fc 122.5px,#0721ff 128.5px,#7801fe 261.5px,#7601f7 263.5px,#7300ed 264.5px,#6400cc 266.5px,#5500ab 268.5px,#5100a1 269.5px,#4e009a 271.5px,#990097 409.5px,#907 481.5px,#990062 549.5px)"></i><i style="margin-left:124px;width:547px;background:linear-gradient(90deg,#002499 0,#00159a 115.5px,#00159f 116.5px,#0017ab 117.5px,#001ac1 118.5px,#011ddc 119.5px,#011ff0 120.5px,#0221fb 121.5px,#0421ff 123.5px,#7501fe 258.5px,#7401f7 260.5px,#7000ed 261.5px,#6200cc 263.5px,#5300ab 265.5px,#4f00a1 266.5px,#4d009a 268.5px,#990097 410.5px,#907 482.5px,#990063 546.5px)"></i><i style="margin-left:125px;width:544px;background:linear-gradient(90deg,#002399 0,#00149a 114.5px,#00159d 115.5px,#0016a8 116.5px,#0019bc 117.5px,#011cd7 118.5px,#011eed 119.5px,#0220f9 120.5px,#0420ff 122.5px,#7301fe 255.5px,#7101f7 257.5px,#6d00ed 258.5px,#6000cc 260.5px,#5100ab 262.5px,#4d00a1 263.5px,#4b009a 265.5px,#990097 411.5px,#907 484.5px,#990064 543.5px)"></i><i style="margin-left:126px;width:541px;background:linear-gradient(90deg,#002399 0,#00149a 113.5px,#00149c 114.5px,#0015a3 115.5px,#0017b4 116.5px,#011de4 118.5px,#021ff5 119.5px,#021ffc 120.5px,#071eff 126.5px,#7001fe 252.5px,#6e01f7 254.5px,#6b00ed 255.5px,#5d00cc 257.5px,#5000ab 259.5px,#4c00a1 260.5px,#49009a 262.5px,#990097 412.5px,#907 485.5px,#906 540.5px)"></i><i style="margin-left:127px;width:538px;background:linear-gradient(90deg,#029 0,#00149a 113.5px,#00149f 114.5px,#0015ab 115.5px,#0018c1 116.5px,#011bdc 117.5px,#011df0 118.5px,#021ffb 119.5px,#041fff 121.5px,#6d01fe 249.5px,#6c01f7 251.5px,#6800ed 252.5px,#5b00cc 254.5px,#4e00ab 256.5px,#4a00a1 257.5px,#48009a 259.5px,#990097 413.5px,#907 487.5px,#990067 537.5px)"></i><i style="margin-left:129px;width:534px;background:linear-gradient(90deg,#002199 0,#00139a 111.5px,#00139d 112.5px,#0015a8 113.5px,#0017bc 114.5px,#011ad7 115.5px,#011ded 116.5px,#021ef9 117.5px,#031eff 119.5px,#6b01fe 245.5px,#6901f7 247.5px,#6601ed 248.5px,#5900cc 250.5px,#4c00ab 252.5px,#4800a1 253.5px,#46009a 255.5px,#990097 413.5px,#907 487.5px,#990068 533.5px)"></i><i style="margin-left:130px;width:531px;background:linear-gradient(90deg,#002199 0,#00139a 110.5px,#00139c 111.5px,#0014a3 112.5px,#0015b4 113.5px,#011be4 115.5px,#021df5 116.5px,#021dfc 117.5px,#071cff 123.5px,#6801fe 242.5px,#6701f7 244.5px,#6401ed 245.5px,#5700cc 247.5px,#4a00ab 249.5px,#4700a1 250.5px,#44009a 252.5px,#990097 414.5px,#907 488.5px,#99006a 530.5px)"></i><i style="margin-left:131px;width:528px;background:linear-gradient(90deg,#002099 0,#00129a 110.5px,#00139f 111.5px,#0014ab 112.5px,#0016c1 113.5px,#0119dc 114.5px,#011cf0 115.5px,#021dfb 116.5px,#041dff 118.5px,#6601fe 239.5px,#6401f7 241.5px,#6101ed 242.5px,#50c 244.5px,#4800ab 246.5px,#4500a1 247.5px,#43009a 249.5px,#990097 415.5px,#907 490.5px,#99006b 527.5px)"></i><i style="margin-left:132px;width:525px;background:linear-gradient(90deg,#002099 0,#00129a 109.5px,#00129e 110.5px,#0013a9 111.5px,#0016be 112.5px,#0118d9 113.5px,#011bef 114.5px,#021cfa 115.5px,#031cff 117.5px,#6301fe 236.5px,#6201f7 238.5px,#5f01ed 239.5px,#5300cc 241.5px,#4700ab 243.5px,#4300a1 244.5px,#41009a 246.5px,#990097 416.5px,#907 491.5px,#99006c 524.5px)"></i><i style="margin-left:133px;width:522px;background:linear-gradient(90deg,#001f99 0,#00129a 108.5px,#00129d 109.5px,#0013a6 110.5px,#0015b9 111.5px,#011aea 113.5px,#021bf8 114.5px,#021bfd 115.5px,#5f02ff 231.5px,#6101fc 234.5px,#5f01f7 235.5px,#5c01ed 236.5px,#5100cc 238.5px,#4500ab 240.5px,#4200a1 241.5px,#40009a 243.5px,#990097 417.5px,#907 493.5px,#99006e 521.5px)"></i><i style="margin-left:135px;width:518px;background:linear-gradient(90deg,#001e99 0,#00119b 107.5px,#0012a0 108.5px,#0013ae 109.5px,#0118df 111.5px,#011af2 112.5px,#021bfb 113.5px,#041aff 116.5px,#5e01fe 229.5px,#5d01f7 231.5px,#5a01ed 232.5px,#4f00cc 234.5px,#4300ab 236.5px,#4000a1 237.5px,#3e009a 239.5px,#990097 417.5px,#907 493.5px,#99006f 517.5px)"></i><i style="margin-left:136px;width:515px;background:linear-gradient(90deg,#001e99 0,#00119a 106.5px,#00119e 107.5px,#0012a9 108.5px,#0014bf 109.5px,#0117d9 110.5px,#0119ef 111.5px,#021afa 112.5px,#031aff 114.5px,#5c01fe 226.5px,#5b01f7 228.5px,#5801ed 229.5px,#4d00cc 231.5px,#4200ab 233.5px,#3e00a1 234.5px,#3d009a 236.5px,#990097 418.5px,#907 494.5px,#990070 514.5px)"></i><i style="margin-left:137px;width:512px;background:linear-gradient(90deg,#001d99 0,#00109a 105.5px,#00119d 106.5px,#0011a6 107.5px,#0013b9 108.5px,#0118ea 110.5px,#0219f8 111.5px,#0219fd 112.5px,#5901ff 222.5px,#5901fc 224.5px,#5801f7 225.5px,#5601ed 226.5px,#4b00cc 228.5px,#4000ab 230.5px,#3d00a1 231.5px,#3b009a 233.5px,#990097 419.5px,#907 496.5px,#990072 511.5px)"></i><i style="margin-left:138px;width:510px;background:linear-gradient(90deg,#001d99 0,#00109b 105.5px,#0010a0 106.5px,#0012ae 107.5px,#0116df 109.5px,#0118f2 110.5px,#0219fb 111.5px,#0418ff 114.5px,#5701fe 220.5px,#5601f7 222.5px,#5301ed 223.5px,#4900cc 225.5px,#3e00ab 227.5px,#3b00a1 228.5px,#3a009a 230.5px,#990098 420.5px,#907 497.5px,#990073 509.5px)"></i><i style="margin-left:139px;width:507px;background:linear-gradient(90deg,#001c99 0,#00109a 104.5px,#00109e 105.5px,#0011a9 106.5px,#0013bf 107.5px,#0115d9 108.5px,#0117ef 109.5px,#0218fa 110.5px,#0318ff 112.5px,#5501fe 217.5px,#5401f7 219.5px,#5101ed 220.5px,#4700cc 222.5px,#3d00ab 224.5px,#3a00a1 225.5px,#38009a 227.5px,#990098 421.5px,#907 499.5px,#990074 506.5px)"></i><i style="margin-left:141px;width:503px;background:linear-gradient(90deg,#001c99 0,#000f9a 102.5px,#000f9d 103.5px,#0010a6 104.5px,#0012b9 105.5px,#0116ea 107.5px,#0217f8 108.5px,#0218fd 109.5px,#5201ff 212.5px,#5201fc 214.5px,#5201f7 215.5px,#4f01ed 216.5px,#4500cc 218.5px,#3b00ab 220.5px,#3800a1 221.5px,#37009a 223.5px,#990098 421.5px,#907 499.5px,#990076 502.5px)"></i><i style="margin-left:142px;width:500px;background:linear-gradient(90deg,#001b99 0,#000f9b 102.5px,#000fa0 103.5px,#0010ae 104.5px,#0115df 106.5px,#0116f2 107.5px,#0217fb 108.5px,#0417ff 111.5px,#5001fe 210.5px,#4f01f7 212.5px,#4d01ed 213.5px,#4300cc 215.5px,#3a00ab 217.5px,#3700a1 218.5px,#35009a 220.5px,#990098 422.5px,#907 499.5px)"></i><i style="margin-left:143px;width:497px;background:linear-gradient(90deg,#001b99 0,#000e9a 101.5px,#000f9e 102.5px,#0010a9 103.5px,#0011bf 104.5px,#0114d9 105.5px,#0115ef 106.5px,#0216fa 107.5px,#0316ff 109.5px,#4e01fe 207.5px,#4d01f7 209.5px,#4b01ed 210.5px,#4200cc 212.5px,#3800ab 214.5px,#3500a1 215.5px,#34009a 217.5px,#990098 423.5px,#990079 496.5px)"></i><i style="margin-left:144px;width:494px;background:linear-gradient(90deg,#001a99 0,#000e9a 100.5px,#000e9d 101.5px,#000fa6 102.5px,#0010b9 103.5px,#0114ea 105.5px,#0215f8 106.5px,#0216fd 107.5px,#4c01ff 204.5px,#4c01f9 206.5px,#4901ef 207.5px,#4500e0 208.5px,#3b00ba 210.5px,#3700ab 211.5px,#3400a1 212.5px,#33009a 214.5px,#990097 425.5px,#99007a 493.5px)"></i><i style="margin-left:146px;width:490px;background:linear-gradient(90deg,#001999 0,#000e9b 99.5px,#000ea0 100.5px,#000fae 101.5px,#0113df 103.5px,#0114f2 104.5px,#0215fb 105.5px,#0415ff 108.5px,#4a01fe 201.5px,#4901f6 203.5px,#4600ea 204.5px,#3600ae 207.5px,#3300a2 208.5px,#31009a 210.5px,#990097 425.5px,#99007c 489.5px)"></i><i style="margin-left:147px;width:487px;background:linear-gradient(90deg,#001999 0,#000d9a 98.5px,#000d9e 99.5px,#000ea9 100.5px,#0010bf 101.5px,#0112d9 102.5px,#0114ef 103.5px,#0214fa 104.5px,#0314ff 106.5px,#4801fe 198.5px,#4701f7 200.5px,#4500ed 201.5px,#4200de 202.5px,#3700b8 204.5px,#3300a9 205.5px,#31009f 206.5px,#300099 208.5px,#990097 426.5px,#99007d 486.5px)"></i><i style="margin-left:148px;width:484px;background:linear-gradient(90deg,#001999 0,#000d9a 97.5px,#000d9d 98.5px,#000ea6 99.5px,#000fb9 100.5px,#0113ea 102.5px,#0214f8 103.5px,#0214fd 104.5px,#4501ff 194.5px,#4601fc 196.5px,#4501f7 197.5px,#4300ed 198.5px,#3b00cc 200.5px,#3300ab 202.5px,#3000a1 203.5px,#2f009a 205.5px,#990097 427.5px,#99007f 483.5px)"></i><i style="margin-left:149px;width:481px;background:linear-gradient(90deg,#001899 0,#000d9b 97.5px,#000da0 98.5px,#000eae 99.5px,#0111df 101.5px,#0113f2 102.5px,#0213fb 103.5px,#0413ff 106.5px,#4401fe 192.5px,#4301f7 194.5px,#4100ed 195.5px,#3900cc 197.5px,#3100ab 199.5px,#2f00a1 200.5px,#2e009a 202.5px,#990097 428.5px,#990081 480.5px)"></i><i style="margin-left:151px;width:477px;background:linear-gradient(90deg,#001799 0,#000c9a 95.5px,#000c9e 96.5px,#000da9 97.5px,#000fbf 98.5px,#0111da 99.5px,#0112ef 100.5px,#0213fa 101.5px,#0313ff 103.5px,#4201fe 188.5px,#4101f7 190.5px,#3f00ed 191.5px,#3800cc 193.5px,#3000ab 195.5px,#2e00a1 196.5px,#2c009a 198.5px,#990097 428.5px,#990082 476.5px)"></i><i style="margin-left:152px;width:474px;background:linear-gradient(90deg,#001799 0,#000c9a 94.5px,#000c9d 95.5px,#000da8 96.5px,#000ebc 97.5px,#0110d7 98.5px,#0111ed 99.5px,#0212f9 100.5px,#0312ff 102.5px,#4001fe 185.5px,#3f01f7 187.5px,#3d00ed 188.5px,#3600cc 190.5px,#2e00ab 192.5px,#2c00a1 193.5px,#2b009a 195.5px,#990097 429.5px,#990084 473.5px)"></i><i style="margin-left:153px;width:471px;background:linear-gradient(90deg,#001799 0,#000c9a 93.5px,#000c9c 94.5px,#000ca3 95.5px,#000db4 96.5px,#0110e4 98.5px,#0111f5 99.5px,#0212fc 100.5px,#0611ff 106.5px,#3e01fe 182.5px,#3d01f7 184.5px,#3b00ed 185.5px,#3400cc 187.5px,#2d00ab 189.5px,#2b00a1 190.5px,#2a009a 192.5px,#990097 430.5px,#990086 470.5px)"></i><i style="margin-left:154px;width:468px;background:linear-gradient(90deg,#001699 0,#000b9a 93.5px,#000b9f 94.5px,#000cab 95.5px,#000ec1 96.5px,#010fdc 97.5px,#0111f0 98.5px,#0211fb 99.5px,#0311ff 101.5px,#3b01fe 179.5px,#3b01f7 181.5px,#3a00ed 182.5px,#30c 184.5px,#2c00ab 186.5px,#2a00a1 187.5px,#29009a 189.5px,#990097 431.5px,#990087 467.5px)"></i><i style="margin-left:156px;width:464px;background:linear-gradient(90deg,#001599 0,#000b9a 91.5px,#000b9d 92.5px,#000ca8 93.5px,#000dbc 94.5px,#010fd7 95.5px,#0110ed 96.5px,#0210f9 97.5px,#0310ff 99.5px,#3901fe 175.5px,#3901f7 177.5px,#3800ed 178.5px,#3100cc 180.5px,#2a00ab 182.5px,#2800a1 183.5px,#27009a 185.5px,#960099 421.5px,#990092 441.5px,#990089 463.5px)"></i><i style="margin-left:157px;width:461px;background:linear-gradient(90deg,#001599 0,#000b9a 90.5px,#000b9c 91.5px,#000ba3 92.5px,#000cb4 93.5px,#010fe4 95.5px,#0110f5 96.5px,#0210fc 97.5px,#060fff 103.5px,#3801fe 172.5px,#3701f7 174.5px,#3600ed 175.5px,#2f00cc 177.5px,#2900ab 179.5px,#2700a1 180.5px,#26009a 182.5px,#950099 420.5px,#990094 438.5px,#99008b 460.5px)"></i><i style="margin-left:158px;width:458px;background:linear-gradient(90deg,#001599 0,#000a9a 90.5px,#000a9f 91.5px,#000bab 92.5px,#000cc1 93.5px,#010edc 94.5px,#010ff0 95.5px,#020ffb 96.5px,#030fff 98.5px,#3601fe 169.5px,#3501f7 171.5px,#3400ed 172.5px,#2e00cc 174.5px,#2700ab 176.5px,#2600a1 177.5px,#25009a 179.5px,#940099 419.5px,#990095 437.5px,#99008c 457.5px)"></i><i style="margin-left:160px;width:455px;background:linear-gradient(90deg,#001499 0,#000a9a 88.5px,#000a9d 89.5px,#000ba8 90.5px,#000cbc 91.5px,#010dd7 92.5px,#010eed 93.5px,#020ff9 94.5px,#030fff 96.5px,#3401fe 165.5px,#3301f7 167.5px,#3200ed 168.5px,#2c00cc 170.5px,#2600ab 172.5px,#2400a1 173.5px,#24009a 175.5px,#920099 416.5px,#990096 436.5px,#99008e 454.5px)"></i><i style="margin-left:161px;width:452px;background:linear-gradient(90deg,#001499 0,#000a9a 87.5px,#000a9c 88.5px,#000aa3 89.5px,#000bb4 90.5px,#010de4 92.5px,#010ef5 93.5px,#020efc 94.5px,#060dff 100.5px,#3201fe 162.5px,#3201f7 164.5px,#3000ed 165.5px,#2b00cc 167.5px,#2500ab 169.5px,#2300a1 170.5px,#22009a 172.5px,#910099 415.5px,#990096 436.5px,#99008f 451.5px)"></i><i style="margin-left:162px;width:449px;background:linear-gradient(90deg,#001399 0,#00099a 87.5px,#00099f 88.5px,#000aab 89.5px,#000bc1 90.5px,#010cdc 91.5px,#010df0 92.5px,#020efb 93.5px,#030eff 95.5px,#3001fe 159.5px,#3001f7 161.5px,#2f00ed 162.5px,#2900cc 164.5px,#2300ab 166.5px,#2200a1 167.5px,#21009a 169.5px,#910099 414.5px,#990096 437.5px,#990091 448.5px)"></i><i style="margin-left:163px;width:446px;background:linear-gradient(90deg,#001399 0,#00099a 86.5px,#00099d 87.5px,#0009a8 88.5px,#000abc 89.5px,#010cd7 90.5px,#010ded 91.5px,#020df9 92.5px,#030dff 94.5px,#2e01fe 156.5px,#2e01f7 158.5px,#2d00ed 159.5px,#2800cc 161.5px,#2200ab 163.5px,#2100a1 164.5px,#20009a 166.5px,#900099 413.5px,#990096 438.5px,#990093 445.5px)"></i><i style="margin-left:165px;width:442px;background:linear-gradient(90deg,#001299 0,#00099a 84.5px,#00099c 85.5px,#0009a3 86.5px,#000ab4 87.5px,#010ce4 89.5px,#010df5 90.5px,#020dfc 91.5px,#060cff 97.5px,#2c01fe 152.5px,#2c01f7 154.5px,#2b00ed 155.5px,#2600cc 157.5px,#2100ab 159.5px,#2000a1 160.5px,#1f009a 162.5px,#8e0099 410.5px,#990097 437.5px,#990095 441.5px)"></i><i style="margin-left:166px;width:439px;background:linear-gradient(90deg,#001299 0,#00089a 84.5px,#00089f 85.5px,#0009ab 86.5px,#000ac1 87.5px,#010bdc 88.5px,#010cf0 89.5px,#020cfb 90.5px,#030cff 92.5px,#2a01fe 149.5px,#2a01f7 151.5px,#2900ed 152.5px,#2500cc 154.5px,#2000ab 156.5px,#1e00a1 157.5px,#1e009a 159.5px,#8d0099 409.5px,#990097 438.5px)"></i><i style="margin-left:167px;width:436px;background:linear-gradient(90deg,#019 0,#00089a 83.5px,#00089d 84.5px,#0008a8 85.5px,#0009bc 86.5px,#010bd7 87.5px,#010bed 88.5px,#020cf9 89.5px,#030cff 91.5px,#2801fe 146.5px,#2901f7 148.5px,#2800ed 149.5px,#2300cc 151.5px,#1e00ab 153.5px,#1d00a1 154.5px,#1d009a 156.5px,#8c0099 408.5px,#990098 435.5px)"></i><i style="margin-left:169px;width:432px;background:linear-gradient(90deg,#019 0,#00089a 81.5px,#00089c 82.5px,#0008a3 83.5px,#0009b4 84.5px,#010be4 86.5px,#010bf5 87.5px,#020bfc 88.5px,#060aff 94.5px,#2701fe 142.5px,#2701f7 144.5px,#2600ed 145.5px,#20c 147.5px,#1d00ab 149.5px,#1c00a1 150.5px,#1c009a 152.5px,#8b0099 405.5px,#970099 431.5px)"></i><i style="margin-left:170px;width:429px;background:linear-gradient(90deg,#001099 0,#00079a 81.5px,#00079f 82.5px,#0008ab 83.5px,#0009c1 84.5px,#010adc 85.5px,#010bf0 86.5px,#020bfb 87.5px,#030bff 89.5px,#2501fe 139.5px,#2501f7 141.5px,#2400ed 142.5px,#2000cc 144.5px,#1c00ab 146.5px,#1b00a1 147.5px,#1b009a 149.5px,#8a0099 404.5px,#950099 428.5px)"></i><i style="margin-left:171px;width:426px;background:linear-gradient(90deg,#001099 0,#00079a 80.5px,#00079d 81.5px,#0007a8 82.5px,#0008bc 83.5px,#0109d7 84.5px,#010aed 85.5px,#020af9 86.5px,#030aff 88.5px,#2301fe 136.5px,#2301f7 138.5px,#2300ed 139.5px,#1f00cc 141.5px,#1b00ab 143.5px,#1a00a1 144.5px,#19009a 146.5px,#890099 403.5px,#940099 425.5px)"></i><i style="margin-left:173px;width:422px;background:linear-gradient(90deg,#000f99 0,#00079a 78.5px,#00079c 79.5px,#0007a3 80.5px,#0008b4 81.5px,#0109e4 83.5px,#010af5 84.5px,#020afc 85.5px,#0609ff 91.5px,#2101fe 132.5px,#2201f7 134.5px,#2100ed 135.5px,#1d00cc 137.5px,#1a00ab 139.5px,#1900a1 140.5px,#18009a 142.5px,#890099 401.5px,#920099 421.5px)"></i><i style="margin-left:174px;width:419px;background:linear-gradient(90deg,#000f99 0,#00069a 78.5px,#00079f 79.5px,#0007ab 80.5px,#0008c1 81.5px,#0109dc 82.5px,#0109f0 83.5px,#0209fb 84.5px,#0309ff 86.5px,#2001fe 130.5px,#2101fb 131.5px,#2001f3 132.5px,#1f00e4 133.5px,#1a00bc 135.5px,#1900ac 136.5px,#1800a2 137.5px,#17009a 139.5px,#870099 399.5px,#900099 418.5px)"></i><i style="margin-left:175px;width:416px;background:linear-gradient(90deg,#000f99 0,#00069a 77.5px,#00069e 78.5px,#0007a9 79.5px,#0007be 80.5px,#0108d9 81.5px,#0109ef 82.5px,#0209fa 83.5px,#0309ff 85.5px,#1f01fe 127.5px,#1f01f6 129.5px,#1e00ec 130.5px,#1d00dc 131.5px,#1800b4 133.5px,#1700a5 134.5px,#16009d 135.5px,#170099 138.5px,#8a0099 405.5px,#8e0099 415.5px)"></i><i style="margin-left:177px;width:412px;background:linear-gradient(90deg,#000e99 0,#00069a 75.5px,#00069d 76.5px,#0006a6 77.5px,#0007b9 78.5px,#0108ea 80.5px,#0109f8 81.5px,#0209fd 82.5px,#1d01fe 123.5px,#1d01f7 125.5px,#1d00ed 126.5px,#1a00cc 128.5px,#1700ab 130.5px,#1600a1 131.5px,#16009a 133.5px,#860099 398.5px,#8c0099 411.5px)"></i><i style="margin-left:178px;width:409px;background:linear-gradient(90deg,#000e99 0,#00069b 75.5px,#0006a0 76.5px,#0006ae 77.5px,#0107df 79.5px,#0108f2 80.5px,#0208fb 81.5px,#0408ff 84.5px,#1b01fe 120.5px,#1c01f7 122.5px,#1b00ed 123.5px,#1800cc 125.5px,#1500ab 127.5px,#1500a1 128.5px,#15009a 130.5px,#850099 395.5px,#8b0099 408.5px)"></i><i style="margin-left:180px;width:405px;background:linear-gradient(90deg,#000d99 0,#00059a 73.5px,#00059e 74.5px,#0006a9 75.5px,#0006bf 76.5px,#0107d9 77.5px,#0107ef 78.5px,#0208fa 79.5px,#0307ff 81.5px,#1a01fe 116.5px,#1a01f7 118.5px,#1a00ed 119.5px,#1700cc 121.5px,#1400ab 123.5px,#1400a1 124.5px,#14009a 126.5px,#840099 393.5px,#890099 404.5px)"></i><i style="margin-left:181px;width:403px;background:linear-gradient(90deg,#000d99 0,#00059a 72.5px,#00059d 73.5px,#0005a6 74.5px,#0006b9 75.5px,#0107ea 77.5px,#0107f8 78.5px,#0207fd 79.5px,#1801fe 113.5px,#1901f7 115.5px,#1800ed 116.5px,#1600cc 118.5px,#1300ab 120.5px,#1300a1 121.5px,#13009a 123.5px,#830099 392.5px,#809 402.5px)"></i><i style="margin-left:182px;width:400px;background:linear-gradient(90deg,#000d99 0,#00059b 72.5px,#0005a0 73.5px,#0005ae 74.5px,#0106df 76.5px,#0107f2 77.5px,#0207fb 78.5px,#0406ff 81.5px,#1601fe 110.5px,#1701f7 112.5px,#1700ed 113.5px,#1400cc 115.5px,#1200ab 117.5px,#1100a1 118.5px,#12009a 120.5px,#820099 391.5px,#860099 399.5px)"></i><i style="margin-left:184px;width:396px;background:linear-gradient(90deg,#000c99 0,#00059a 70.5px,#00059e 71.5px,#0005a9 72.5px,#0005bf 73.5px,#0106d9 74.5px,#0106ef 75.5px,#0206fa 76.5px,#0306ff 78.5px,#1501fe 106.5px,#1501f7 108.5px,#1500ed 109.5px,#1300cc 111.5px,#1100ab 113.5px,#1000a1 114.5px,#11009a 116.5px,#810099 388.5px,#840099 395.5px)"></i><i style="margin-left:185px;width:393px;background:linear-gradient(90deg,#000c99 0,#00049a 69.5px,#00049d 70.5px,#0004a6 71.5px,#0005b9 72.5px,#0106ea 74.5px,#0106f8 75.5px,#0206fd 76.5px,#1301fe 103.5px,#1401f7 105.5px,#1400ed 106.5px,#1200cc 108.5px,#1000ab 110.5px,#0f00a1 111.5px,#10009a 113.5px,#800099 387.5px,#830099 392.5px)"></i><i style="margin-left:186px;width:390px;background:linear-gradient(90deg,#000b99 0,#00049b 69.5px,#0004a0 70.5px,#0004ae 71.5px,#0105df 73.5px,#0105f2 74.5px,#0205fb 75.5px,#0405ff 78.5px,#1201fe 100.5px,#1201f7 102.5px,#1200ed 103.5px,#10c 105.5px,#0f00ab 107.5px,#0e00a1 108.5px,#0f009a 110.5px,#800099 386.5px,#810099 389.5px)"></i><i style="margin-left:188px;width:386px;background:linear-gradient(90deg,#000b99 0,#00049a 67.5px,#00049e 68.5px,#0004a9 69.5px,#0004bf 70.5px,#0105d9 71.5px,#0105ef 72.5px,#0205fa 73.5px,#0305ff 75.5px,#1001fe 96.5px,#1101f7 98.5px,#1100ed 99.5px,#0f00cc 101.5px,#0e00ab 103.5px,#0d00a1 104.5px,#0e009a 106.5px,#7e0099 383.5px,#7f0099 385.5px)"></i><i style="margin-left:189px;width:383px;background:linear-gradient(90deg,#000a99 0,#00039a 66.5px,#00039d 67.5px,#0004a6 68.5px,#0004b9 69.5px,#0104ea 71.5px,#0105f8 72.5px,#0204fd 73.5px,#0f01fe 93.5px,#0f01f7 95.5px,#0f00ed 96.5px,#0e00cc 98.5px,#0d00ab 100.5px,#0c00a1 101.5px,#0d009a 103.5px,#7e0099 382.5px)"></i><i style="margin-left:191px;width:379px;background:linear-gradient(90deg,#000a99 0,#00039b 65.5px,#0003a0 66.5px,#0003ae 67.5px,#0104df 69.5px,#0104f2 70.5px,#0204fb 71.5px,#0404ff 74.5px,#0d01fe 89.5px,#0e01f7 91.5px,#0e00ed 92.5px,#0d00cc 94.5px,#0c00ab 96.5px,#0b00a1 97.5px,#0c009a 99.5px,#7c0099 378.5px)"></i><i style="margin-left:192px;width:376px;background:linear-gradient(90deg,#000a99 0,#00039a 64.5px,#00039e 65.5px,#0003a9 66.5px,#0003bf 67.5px,#0103d9 68.5px,#0104ef 69.5px,#0204fa 70.5px,#0303ff 72.5px,#0c01fe 86.5px,#0c01f7 88.5px,#0c00ed 89.5px,#0c00cc 91.5px,#0b00ab 93.5px,#0a00a1 94.5px,#0b009a 96.5px,#7a0099 375.5px)"></i><i style="margin-left:194px;width:372px;background:linear-gradient(90deg,#000999 0,#00039a 62.5px,#00039d 63.5px,#0003a6 64.5px,#0003b9 65.5px,#0103ea 67.5px,#0103f8 68.5px,#0203fd 69.5px,#0a01fe 82.5px,#0b01f7 84.5px,#0b00ed 85.5px,#0a00cc 87.5px,#0a00ab 89.5px,#0900a1 90.5px,#0a009a 92.5px,#790099 371.5px)"></i><i style="margin-left:195px;width:369px;background:linear-gradient(90deg,#000999 0,#00029b 62.5px,#0002a0 63.5px,#0002ae 64.5px,#0103df 66.5px,#0103f2 67.5px,#0203fb 68.5px,#0402ff 71.5px,#0901fe 79.5px,#0901f7 81.5px,#0a00ed 82.5px,#0900cc 84.5px,#0900ab 86.5px,#0900a1 87.5px,#09009a 89.5px,#709 368.5px)"></i><i style="margin-left:196px;width:366px;background:linear-gradient(90deg,#000899 0,#00029a 61.5px,#00029e 62.5px,#0002a9 63.5px,#0002bf 64.5px,#0102da 65.5px,#0102ef 66.5px,#0202fa 67.5px,#0302ff 69.5px,#0701fe 76.5px,#0801f7 78.5px,#0800ed 79.5px,#0800cc 81.5px,#0800ab 83.5px,#0800a1 84.5px,#08009a 86.5px,#760099 365.5px)"></i><i style="margin-left:198px;width:362px;background:linear-gradient(90deg,#000899 0,#00029a 59.5px,#00029d 60.5px,#0002a8 61.5px,#0002bc 62.5px,#0002d7 63.5px,#0102ed 64.5px,#0102f9 65.5px,#0302ff 67.5px,#0601fe 72.5px,#0701f7 74.5px,#0700ed 75.5px,#0700cc 77.5px,#0700ab 79.5px,#0700a1 80.5px,#07009a 82.5px,#740099 361.5px)"></i><i style="margin-left:199px;width:359px;background:linear-gradient(90deg,#000899 0,#00029a 58.5px,#00029c 59.5px,#0002a3 60.5px,#0002b4 61.5px,#0102e4 63.5px,#0102f5 64.5px,#0202fc 65.5px,#0401fe 69.5px,#0501f7 71.5px,#0600ed 72.5px,#0600cc 74.5px,#0600ab 76.5px,#0600a1 77.5px,#06009a 79.5px,#730099 358.5px)"></i><i style="margin-left:201px;width:355px;background:linear-gradient(90deg,#000799 0,#00019a 57.5px,#00019f 58.5px,#0001ab 59.5px,#0001c1 60.5px,#0101dc 61.5px,#0101f0 62.5px,#0201fb 63.5px,#0301fe 65.5px,#0401f7 67.5px,#0400ed 68.5px,#0500cc 70.5px,#0500ab 72.5px,#0500a1 73.5px,#05009a 75.5px,#710099 354.5px)"></i><i style="margin-left:202px;width:352px;background:linear-gradient(90deg,#000799 0,#00019a 56.5px,#00019d 57.5px,#0001a8 58.5px,#0001bc 59.5px,#0001d7 60.5px,#0101ed 61.5px,#0101f8 62.5px,#0201fa 63.5px,#0201f6 64.5px,#0300ed 65.5px,#0300cc 67.5px,#0400ab 69.5px,#0400a1 70.5px,#04009a 72.5px,#700099 351.5px)"></i><i style="margin-left:204px;width:348px;background:linear-gradient(90deg,#000799 0,#00019a 54.5px,#00019c 55.5px,#0001a3 56.5px,#0001b3 57.5px,#0101e1 59.5px,#0101ed 60.5px,#0200ea 61.5px,#0200de 62.5px,#0300ba 64.5px,#0300ab 65.5px,#0300a1 66.5px,#04009a 68.5px,#6e0099 347.5px)"></i><i style="margin-left:205px;width:346px;background:linear-gradient(90deg,#000699 0,#00019a 54.5px,#00019e 55.5px,#0000a9 56.5px,#0100cc 58.5px,#0100d1 59.5px,#0100c9 60.5px,#0200ab 62.5px,#0200a1 63.5px,#03009a 65.5px,#6d0099 345.5px)"></i><i style="margin-left:207px;width:342px;background:linear-gradient(90deg,#000699 0,#00009a 52.5px,#00009c 53.5px,#0000a2 54.5px,#0000b4 56.5px,#0100b3 57.5px,#0100a2 59.5px,#02009a 61.5px,#6c0099 341.5px)"></i><i style="margin-left:208px;width:339px;background:linear-gradient(90deg,#000599 0,#00009a 52.5px,#0000a1 55.5px,#020099 60.5px,#6b0099 338.5px)"></i><i style="margin-left:210px;width:335px;background:linear-gradient(90deg,#000599 0,#020099 59.5px,#690099 334.5px)"></i><i style="margin-left:211px;width:332px;background:linear-gradient(90deg,#000599 0,#020099 58.5px,#680099 331.5px)"></i><i style="margin-left:213px;width:328px;background:linear-gradient(90deg,#000499 0,#020099 57.5px,#609 327.5px)"></i><i style="margin-left:214px;width:325px;background:linear-gradient(90deg,#000499 0,#020099 56.5px,#650099 324.5px)"></i><i style="margin-left:216px;width:321px;background:linear-gradient(90deg,#000499 0,#020099 54.5px,#640099 320.5px)"></i><i style="margin-left:218px;width:317px;background:linear-gradient(90deg,#000399 0,#020099 53.5px,#620099 316.5px)"></i><i style="margin-left:219px;width:314px;background:linear-gradient(90deg,#000399 0,#020099 52.5px,#610099 313.5px)"></i><i style="margin-left:221px;width:310px;background:linear-gradient(90deg,#000299 0,#020099 50.5px,#600099 309.5px)"></i><i style="margin-left:222px;width:307px;background:linear-gradient(90deg,#000299 0,#020099 50.5px,#5e0099 306.5px)"></i><i style="margin-left:224px;width:303px;background:linear-gradient(90deg,#000299 0,#020099 48.5px,#5d0099 302.5px)"></i><i style="margin-left:225px;width:300px;background:linear-gradient(90deg,#000199 0,#020099 48.5px,#5c0099 299.5px)"></i><i style="margin-left:227px;width:296px;background:linear-gradient(90deg,#000199 0,#020099 46.5px,#5b0099 295.5px)"></i><i style="margin-left:229px;width:292px;background:linear-gradient(90deg,#000199 0,#020099 44.5px,#590099 291.5px)"></i><i style="margin-left:230px;width:290px;background:linear-gradient(90deg,#009 0,#020099 44.5px,#580099 289.5px)"></i><i style="margin-left:232px;width:286px;background:linear-gradient(90deg,#009 0,#020099 42.5px,#570099 285.5px)"></i><i style="margin-left:234px;width:282px;background:linear-gradient(90deg,#009 0,#020099 41.5px,#560099 281.5px)"></i><i style="margin-left:235px;width:279px;background:linear-gradient(90deg,#009 0,#020099 40.5px,#509 278.5px)"></i><i style="margin-left:237px;width:275px;background:linear-gradient(90deg,#009 0,#020099 39.5px,#540099 274.5px)"></i><i style="margin-left:239px;width:271px;background:linear-gradient(90deg,#009 0,#020099 37.5px,#520099 270.5px)"></i><i style="margin-left:240px;width:268px;background:linear-gradient(90deg,#009 0,#020099 36.5px,#510099 267.5px)"></i><i style="margin-left:242px;width:264px;background:linear-gradient(90deg,#009 0,#020099 35.5px,#500099 263.5px)"></i><i style="margin-left:244px;width:260px;background:linear-gradient(90deg,#009 0,#020099 33.5px,#4f0099 259.5px)"></i><i style="margin-left:246px;width:256px;background:linear-gradient(90deg,#009 0,#020099 32.5px,#4e0099 255.5px)"></i><i style="margin-left:247px;width:253px;background:linear-gradient(90deg,#009 0,#020099 31.5px,#4d0099 252.5px)"></i><i style="margin-left:249px;width:249px;background:linear-gradient(90deg,#009 0,#030099 30.5px,#4c0099 248.5px)"></i><i style="margin-left:251px;width:245px;background:linear-gradient(90deg,#009 0,#030099 29.5px,#4a0099 244.5px)"></i><i style="margin-left:253px;width:241px;background:linear-gradient(90deg,#009 0,#030099 27.5px,#490099 240.5px)"></i><i style="margin-left:254px;width:238px;background:linear-gradient(90deg,#009 0,#030099 27.5px,#480099 237.5px)"></i><i style="margin-left:256px;width:234px;background:linear-gradient(90deg,#009 0,#030099 26.5px,#470099 233.5px)"></i><i style="margin-left:258px;width:230px;background:linear-gradient(90deg,#009 0,#030099 25.5px,#460099 229.5px)"></i><i style="margin-left:260px;width:227px;background:linear-gradient(90deg,#009 0,#040099 25.5px,#450099 226.5px)"></i><i style="margin-left:262px;width:223px;background:linear-gradient(90deg,#009 0,#040099 25.5px,#409 222.5px)"></i><i style="margin-left:264px;width:219px;background:linear-gradient(90deg,#009 0,#060099 28.5px,#430099 218.5px)"></i><i style="margin-left:266px;width:215px;background:linear-gradient(90deg,#009 0,#090099 36.5px,#420099 214.5px)"></i><i style="margin-left:268px;width:211px;background:linear-gradient(90deg,#009 0,#1c0099 95.5px,#410099 210.5px)"></i><i style="margin-left:270px;width:207px;background:linear-gradient(90deg,#009 0,#400099 206.5px)"></i><i style="margin-left:272px;width:203px;background:linear-gradient(90deg,#009 0,#3f0099 202.5px)"></i><i style="margin-left:274px;width:199px;background:linear-gradient(90deg,#009 0,#3e0099 198.5px)"></i><i style="margin-left:276px;width:195px;background:linear-gradient(90deg,#009 0,#3d0099 194.5px)"></i><i style="margin-left:278px;width:191px;background:linear-gradient(90deg,#010099 0,#3c0099 190.5px)"></i><i style="margin-left:280px;width:187px;background:linear-gradient(90deg,#010099 0,#3b0099 186.5px)"></i><i style="margin-left:282px;width:183px;background:linear-gradient(90deg,#020099 0,#3a0099 182.5px)"></i><i style="margin-left:285px;width:178px;background:linear-gradient(90deg,#020099 0,#390099 177.5px)"></i><i style="margin-left:287px;width:174px;background:linear-gradient(90deg,#030099 0,#380099 173.5px)"></i><i style="margin-left:289px;width:170px;background:linear-gradient(90deg,#030099 0,#370099 169.5px)"></i><i style="margin-left:291px;width:166px;background:linear-gradient(90deg,#040099 0,#370099 165.5px)"></i><i style="margin-left:293px;width:163px;background:linear-gradient(90deg,#040099 0,#360099 162.5px)"></i><i style="margin-left:296px;width:158px;background:linear-gradient(90deg,#050099 0,#350099 157.5px)"></i><i style="margin-left:298px;width:154px;background:linear-gradient(90deg,#060099 0,#340099 153.5px)"></i><i style="margin-left:300px;width:150px;background:linear-gradient(90deg,#060099 0,#309 149.5px)"></i><i style="margin-left:303px;width:145px;background:linear-gradient(90deg,#070099 0,#320099 144.5px)"></i><i style="margin-left:305px;width:141px;background:linear-gradient(90deg,#070099 0,#310099 140.5px)"></i><i style="margin-left:307px;width:137px;background:linear-gradient(90deg,#080099 0,#300099 136.5px)"></i><i style="margin-left:310px;width:132px;background:linear-gradient(90deg,#090099 0,#300099 131.5px)"></i><i style="margin-left:312px;width:128px;background:linear-gradient(90deg,#090099 0,#2f0099 127.5px)"></i><i style="margin-left:314px;width:124px;background:linear-gradient(90deg,#090099 0,#2e0099 123.5px)"></i><i style="margin-left:317px;width:119px;background:linear-gradient(90deg,#0a0099 0,#2d0099 118.5px)"></i><i style="margin-left:319px;width:115px;background:linear-gradient(90deg,#0b0099 0,#2c0099 114.5px)"></i><i style="margin-left:322px;width:110px;background:linear-gradient(90deg,#0b0099 0,#2b0099 109.5px)"></i><i style="margin-left:324px;width:106px;background:linear-gradient(90deg,#0c0099 0,#2a0099 105.5px)"></i><i style="margin-left:326px;width:102px;background:linear-gradient(90deg,#0c0099 0,#2a0099 101.5px)"></i><i style="margin-left:329px;width:97px;background:linear-gradient(90deg,#0d0099 0,#290099 96.5px)"></i><i style="margin-left:331px;width:93px;background:linear-gradient(90deg,#0d0099 0,#280099 92.5px)"></i><i style="margin-left:334px;width:89px;background:linear-gradient(90deg,#0e0099 0,#270099 88.5px)"></i><i style="margin-left:336px;width:85px;background:linear-gradient(90deg,#0f0099 0,#270099 84.5px)"></i><i style="margin-left:339px;width:80px;background:linear-gradient(90deg,#0f0099 0,#260099 79.5px)"></i><i style="margin-left:341px;width:76px;background:linear-gradient(90deg,#100099 0,#250099 75.5px)"></i><i style="margin-left:343px;width:72px;background:linear-gradient(90deg,#100099 0,#240099 71.5px)"></i><i style="margin-left:346px;width:67px;background:linear-gradient(90deg,#109 0,#230099 66.5px)"></i><i style="margin-left:348px;width:63px;background:linear-gradient(90deg,#109 0,#230099 62.5px)"></i><i style="margin-left:350px;width:59px;background:linear-gradient(90deg,#120099 0,#209 58.5px)"></i><i style="margin-left:353px;width:54px;background:linear-gradient(90deg,#120099 0,#210099 53.5px)"></i><i style="margin-left:355px;width:50px;background:linear-gradient(90deg,#130099 0,#200099 49.5px)"></i><i style="margin-left:357px;width:46px;background:linear-gradient(90deg,#130099 0,#200099 45.5px)"></i><i style="margin-left:360px;width:41px;background:linear-gradient(90deg,#140099 0,#1f0099 40.5px)"></i><i style="margin-left:362px;width:37px;background:linear-gradient(90deg,#140099 0,#1e0099 36.5px)"></i><i style="margin-left:365px;width:32px;background:linear-gradient(90deg,#150099 0,#1d0099 31.5px)"></i><i style="margin-left:367px;width:28px;background:linear-gradient(90deg,#150099 0,#1d0099 27.5px)"></i><i style="margin-left:370px;width:23px;background:linear-gradient(90deg,#160099 0,#1c0099 22.5px)"></i><i style="margin-left:373px;width:19px;background:linear-gradient(90deg,#170099 0,#1b0099 18.5px)"></i><i style="margin-left:376px;width:14px;background:linear-gradient(90deg,#170099 0,#1b0099 13.5px)"></i><i></i><i></i><i></i><i></i><i></i><i></i><i></i><i></i><i></i></div>
<div style="left:1639px;top:971.3px;width:2px;height:8.5px;background:#c8c8c8"></div>
<span class="t" style="left:1634.42px;top:983px;font-size:21px;color:#d4d4d4;transform:scaleX(0.9550);">0</span>
<div style="left:1631px;top:969.5px;width:8px;height:1.8px;background:#dcdcdc"></div>
<span class="t" style="left:1619.45px;top:960px;font-size:21px;color:#d4d4d4;transform:scaleX(0.9550);">0</span>
<div style="left:1714.33px;top:971.3px;width:2px;height:8.5px;background:#c8c8c8"></div>
<span class="t" style="left:1695.81px;top:983px;font-size:21px;color:#d4d4d4;transform:scaleX(0.9550);">0.05</span>
<div style="left:1631px;top:911.67px;width:8px;height:1.8px;background:#dcdcdc"></div>
<span class="t" style="left:1591.57px;top:902px;font-size:21px;color:#d4d4d4;transform:scaleX(0.9550);">0.05</span>
<div style="left:1789.65px;top:971.3px;width:2px;height:8.5px;background:#c8c8c8"></div>
<span class="t" style="left:1776.71px;top:983px;font-size:21px;color:#d4d4d4;transform:scaleX(0.9550);">0.1</span>
<div style="left:1631px;top:853.85px;width:8px;height:1.8px;background:#dcdcdc"></div>
<span class="t" style="left:1602.72px;top:845px;font-size:21px;color:#d4d4d4;transform:scaleX(0.9550);">0.1</span>
<div style="left:1864.97px;top:971.3px;width:2px;height:8.5px;background:#c8c8c8"></div>
<span class="t" style="left:1846.46px;top:983px;font-size:21px;color:#d4d4d4;transform:scaleX(0.9550);">0.15</span>
<div style="left:1631px;top:796.02px;width:8px;height:1.8px;background:#dcdcdc"></div>
<span class="t" style="left:1591.57px;top:787px;font-size:21px;color:#d4d4d4;transform:scaleX(0.9550);">0.15</span>
<div style="left:1940.3px;top:971.3px;width:2px;height:8.5px;background:#c8c8c8"></div>
<span class="t" style="left:1927.36px;top:983px;font-size:21px;color:#d4d4d4;transform:scaleX(0.9550);">0.2</span>
<div style="left:1631px;top:738.2px;width:8px;height:1.8px;background:#dcdcdc"></div>
<span class="t" style="left:1602.72px;top:729px;font-size:21px;color:#d4d4d4;transform:scaleX(0.9550);">0.2</span>
<div style="left:2015.62px;top:971.3px;width:2px;height:8.5px;background:#c8c8c8"></div>
<span class="t" style="left:1997.11px;top:983px;font-size:21px;color:#d4d4d4;transform:scaleX(0.9550);">0.25</span>
<div style="left:1631px;top:680.38px;width:8px;height:1.8px;background:#dcdcdc"></div>
<span class="t" style="left:1591.57px;top:671px;font-size:21px;color:#d4d4d4;transform:scaleX(0.9550);">0.25</span>
<div style="left:2090.95px;top:971.3px;width:2px;height:8.5px;background:#c8c8c8"></div>
<span class="t" style="left:2078.01px;top:983px;font-size:21px;color:#d4d4d4;transform:scaleX(0.9550);">0.3</span>
<div style="left:1631px;top:622.55px;width:8px;height:1.8px;background:#dcdcdc"></div>
<span class="t" style="left:1602.72px;top:613px;font-size:21px;color:#d4d4d4;transform:scaleX(0.9550);">0.3</span>
<div style="left:2166.28px;top:971.3px;width:2px;height:8.5px;background:#c8c8c8"></div>
<span class="t" style="left:2147.76px;top:983px;font-size:21px;color:#d4d4d4;transform:scaleX(0.9550);">0.35</span>
<div style="left:1631px;top:564.73px;width:8px;height:1.8px;background:#dcdcdc"></div>
<span class="t" style="left:1591.57px;top:556px;font-size:21px;color:#d4d4d4;transform:scaleX(0.9550);">0.35</span>
<div style="left:2241.6px;top:971.3px;width:2px;height:8.5px;background:#c8c8c8"></div>
<span class="t" style="left:2228.66px;top:983px;font-size:21px;color:#d4d4d4;transform:scaleX(0.9550);">0.4</span>
<div style="left:1631px;top:506.9px;width:8px;height:1.8px;background:#dcdcdc"></div>
<span class="t" style="left:1602.72px;top:498px;font-size:21px;color:#d4d4d4;transform:scaleX(0.9550);">0.4</span>
<div style="left:2316.93px;top:971.3px;width:2px;height:8.5px;background:#c8c8c8"></div>
<span class="t" style="left:2298.41px;top:983px;font-size:21px;color:#d4d4d4;transform:scaleX(0.9550);">0.45</span>
<div style="left:1631px;top:449.07px;width:8px;height:1.8px;background:#dcdcdc"></div>
<span class="t" style="left:1591.57px;top:440px;font-size:21px;color:#d4d4d4;transform:scaleX(0.9550);">0.45</span>
<div style="left:2392.25px;top:971.3px;width:2px;height:8.5px;background:#c8c8c8"></div>
<span class="t" style="left:2379.31px;top:983px;font-size:21px;color:#d4d4d4;transform:scaleX(0.9550);">0.5</span>
<div style="left:1631px;top:391.25px;width:8px;height:1.8px;background:#dcdcdc"></div>
<span class="t" style="left:1602.72px;top:382px;font-size:21px;color:#d4d4d4;transform:scaleX(0.9550);">0.5</span>
<div style="left:2467.57px;top:971.3px;width:2px;height:8.5px;background:#c8c8c8"></div>
<span class="t" style="left:2449.06px;top:983px;font-size:21px;color:#d4d4d4;transform:scaleX(0.9550);">0.55</span>
<div style="left:1631px;top:333.42px;width:8px;height:1.8px;background:#dcdcdc"></div>
<span class="t" style="left:1591.57px;top:324px;font-size:21px;color:#d4d4d4;transform:scaleX(0.9550);">0.55</span>
<svg class="a" style="left:1577px;top:231px" width="983" height="789"><rect x="420.35" y="174.35" width="18.3" height="18.3" fill="none" stroke="#fff" stroke-width="2.1"/><circle cx="429.2" cy="183.8" r="5.7" fill="#c0a0a0" stroke="#000" stroke-width="1.5"/><rect x="495.35" y="160.75" width="18.3" height="18.3" fill="none" stroke="#fff" stroke-width="2.1"/><circle cx="502.9" cy="170.2" r="5.7" fill="#c08080" stroke="#000" stroke-width="1.5"/><rect x="564.35" y="151.45" width="18.3" height="18.3" fill="none" stroke="#fff" stroke-width="2.1"/><circle cx="567.6" cy="158.5" r="5.7" fill="#c06464" stroke="#000" stroke-width="1.5"/><rect x="641.45" y="137.45" width="18.3" height="18.3" fill="none" stroke="#fff" stroke-width="2.1"/><circle cx="646.9" cy="147.25" r="5.7" fill="#c04444" stroke="#000" stroke-width="1.5"/><rect x="732.05" y="122.35" width="18.3" height="18.3" fill="none" stroke="#fff" stroke-width="2.1"/><circle cx="743" cy="131.7" r="5.7" fill="#c40000" stroke="#000" stroke-width="1.5"/><rect x="321.65" y="155.25" width="18.3" height="18.3" fill="none" stroke="#fff" stroke-width="2.1"/><circle cx="330.8" cy="165.7" r="5.7" fill="#a0c0a0" stroke="#000" stroke-width="1.5"/><rect x="296.95" y="131.95" width="18.3" height="18.3" fill="none" stroke="#fff" stroke-width="2.1"/><circle cx="306.1" cy="141.4" r="5.7" fill="#80c080" stroke="#000" stroke-width="1.5"/><rect x="275.25" y="110.35" width="18.3" height="18.3" fill="none" stroke="#fff" stroke-width="2.1"/><circle cx="283.1" cy="119.9" r="5.7" fill="#64c064" stroke="#000" stroke-width="1.5"/><rect x="258.35" y="93.35" width="18.3" height="18.3" fill="none" stroke="#fff" stroke-width="2.1"/><circle cx="265.6" cy="102.5" r="5.7" fill="#48c048" stroke="#000" stroke-width="1.5"/><rect x="241.35" y="76.25" width="18.3" height="18.3" fill="none" stroke="#fff" stroke-width="2.1"/><circle cx="251.8" cy="85.4" r="5.7" fill="#00c000" stroke="#000" stroke-width="1.5"/><rect x="346.85" y="228.35" width="18.3" height="18.3" fill="none" stroke="#fff" stroke-width="2.1"/><circle cx="356.2" cy="240.75" r="5.7" fill="#a0a0c0" stroke="#000" stroke-width="1.5"/><rect x="343.45" y="280.35" width="18.3" height="18.3" fill="none" stroke="#fff" stroke-width="2.1"/><circle cx="352.1" cy="292.75" r="5.7" fill="#8484c4" stroke="#000" stroke-width="1.5"/><rect x="337.45" y="343.35" width="18.3" height="18.3" fill="none" stroke="#fff" stroke-width="2.1"/><circle cx="344.65" cy="353.3" r="5.7" fill="#6868c4" stroke="#000" stroke-width="1.5"/><rect x="329.35" y="424.35" width="18.3" height="18.3" fill="none" stroke="#fff" stroke-width="2.1"/><circle cx="336.9" cy="430.3" r="5.7" fill="#4848c4" stroke="#000" stroke-width="1.5"/><rect x="318.35" y="545.95" width="18.3" height="18.3" fill="none" stroke="#fff" stroke-width="2.1"/><circle cx="325.1" cy="555.1" r="5.7" fill="#1010c0" stroke="#000" stroke-width="1.5"/><rect x="333.05" y="189.15" width="18.3" height="18.3" fill="none" stroke="#fff" stroke-width="2.1"/><circle cx="340.6" cy="198.9" r="5.7" fill="#a0c0c0" stroke="#000" stroke-width="1.5"/><rect x="316.35" y="191.45" width="18.3" height="18.3" fill="none" stroke="#fff" stroke-width="2.1"/><circle cx="323.5" cy="202.5" r="5.7" fill="#84c0c0" stroke="#000" stroke-width="1.5"/><rect x="297.45" y="195.45" width="18.3" height="18.3" fill="none" stroke="#fff" stroke-width="2.1"/><circle cx="304.1" cy="206.6" r="5.7" fill="#68c0c0" stroke="#000" stroke-width="1.5"/><rect x="279.65" y="197.35" width="18.3" height="18.3" fill="none" stroke="#fff" stroke-width="2.1"/><circle cx="288.7" cy="210.7" r="5.7" fill="#4cc0c0" stroke="#000" stroke-width="1.5"/><rect x="262.15" y="201.35" width="18.3" height="18.3" fill="none" stroke="#fff" stroke-width="2.1"/><circle cx="271.5" cy="210.7" r="5.7" fill="#00bcc0" stroke="#000" stroke-width="1.5"/><rect x="375.35" y="208.85" width="18.3" height="18.3" fill="none" stroke="#fff" stroke-width="2.1"/><circle cx="383.2" cy="220" r="5.7" fill="#c0a0c0" stroke="#000" stroke-width="1.5"/><rect x="402.35" y="235.95" width="18.3" height="18.3" fill="none" stroke="#fff" stroke-width="2.1"/><circle cx="412.15" cy="247.05" r="5.7" fill="#c084c0" stroke="#000" stroke-width="1.5"/><rect x="429.35" y="264.45" width="18.3" height="18.3" fill="none" stroke="#fff" stroke-width="2.1"/><circle cx="440.45" cy="275.9" r="5.7" fill="#c068c0" stroke="#000" stroke-width="1.5"/><rect x="466.25" y="301.35" width="18.3" height="18.3" fill="none" stroke="#fff" stroke-width="2.1"/><circle cx="471.7" cy="310.5" r="5.7" fill="#c04cc0" stroke="#000" stroke-width="1.5"/><rect x="512.35" y="345.45" width="18.3" height="18.3" fill="none" stroke="#fff" stroke-width="2.1"/><circle cx="517.6" cy="356.55" r="5.7" fill="#c000c0" stroke="#000" stroke-width="1.5"/><rect x="354.25" y="161.35" width="18.3" height="18.3" fill="none" stroke="#fff" stroke-width="2.1"/><circle cx="363.9" cy="170.5" r="5.7" fill="#bdbca0" stroke="#000" stroke-width="1.5"/><rect x="356.25" y="139.15" width="18.3" height="18.3" fill="none" stroke="#fff" stroke-width="2.1"/><circle cx="364.6" cy="148.9" r="5.7" fill="#bdbc85" stroke="#000" stroke-width="1.5"/><rect x="358.05" y="120.35" width="18.3" height="18.3" fill="none" stroke="#fff" stroke-width="2.1"/><circle cx="368" cy="129.6" r="5.7" fill="#bdbc69" stroke="#000" stroke-width="1.5"/><rect x="359.55" y="104.25" width="18.3" height="18.3" fill="none" stroke="#fff" stroke-width="2.1"/><circle cx="369.6" cy="114" r="5.7" fill="#bcbc4b" stroke="#000" stroke-width="1.5"/><rect x="360.85" y="87.45" width="18.3" height="18.3" fill="none" stroke="#fff" stroke-width="2.1"/><circle cx="369.7" cy="96.9" r="5.7" fill="#bebe00" stroke="#000" stroke-width="1.5"/><rect x="350.55" y="186.15" width="18.1" height="18.1" fill="none" stroke="#000" stroke-width="2.3"/><circle cx="359.6" cy="195.2" r="5.7" fill="#fff" stroke="#000" stroke-width="1.5"/></svg>
<div style="left:2232px;top:751px;width:308px;height:212px;background:#333"></div>
<div style="left:2236px;top:755px;width:300px;height:204px;background:#999"></div>
<div class="cie c1" style="left:2238px;top:757px;width:296px;height:200px;overflow:hidden"><i style="margin-left:0px;width:296px;background:linear-gradient(90deg,#629900 0,#999600 247.5px,#998b00 295.5px)"></i><i style="margin-left:0px;width:296px;background:linear-gradient(90deg,#629900 0,#999600 246.5px,#998b00 295.5px)"></i><i style="margin-left:0px;width:296px;background:linear-gradient(90deg,#629900 0,#999700 245.5px,#998b00 295.5px)"></i><i style="margin-left:0px;width:296px;background:linear-gradient(90deg,#629900 0,#999700 244.5px,#998b00 295.5px)"></i><i style="margin-left:0px;width:296px;background:linear-gradient(90deg,#629900 0,#999700 243.5px,#998b00 295.5px)"></i><i style="margin-left:0px;width:296px;background:linear-gradient(90deg,#629900 0,#999700 242.5px,#998a00 295.5px)"></i><i style="margin-left:0px;width:296px;background:linear-gradient(90deg,#639900 0,#999700 241.5px,#998a00 295.5px)"></i><i style="margin-left:0px;width:296px;background:linear-gradient(90deg,#639900 0,#999600 241.5px,#998a00 295.5px)"></i><i style="margin-left:0px;width:296px;background:linear-gradient(90deg,#639900 0,#999600 240.5px,#998a00 295.5px)"></i><i style="margin-left:0px;width:296px;background:linear-gradient(90deg,#639900 0,#999600 239.5px,#998a00 295.5px)"></i><i style="margin-left:0px;width:296px;background:linear-gradient(90deg,#639900 0,#999600 238.5px,#998900 295.5px)"></i><i style="margin-left:0px;width:296px;background:linear-gradient(90deg,#639900 0,#999600 237.5px,#998900 295.5px)"></i><i style="margin-left:0px;width:296px;background:linear-gradient(90deg,#649900 0,#999700 236.5px,#998900 295.5px)"></i><i style="margin-left:0px;width:296px;background:linear-gradient(90deg,#649900 0,#999700 235.5px,#998900 295.5px)"></i><i style="margin-left:0px;width:296px;background:linear-gradient(90deg,#649900 0,#999700 234.5px,#998900 295.5px)"></i><i style="margin-left:0px;width:296px;background:linear-gradient(90deg,#649900 0,#999700 233.5px,#980 295.5px)"></i><i style="margin-left:0px;width:296px;background:linear-gradient(90deg,#649900 0,#999700 232.5px,#980 295.5px)"></i><i style="margin-left:0px;width:296px;background:linear-gradient(90deg,#649900 0,#999600 232.5px,#980 295.5px)"></i><i style="margin-left:0px;width:296px;background:linear-gradient(90deg,#659900 0,#999600 231.5px,#980 295.5px)"></i><i style="margin-left:0px;width:296px;background:linear-gradient(90deg,#669b00 0,#999600 230.5px,#980 295.5px)"></i><i style="margin-left:0px;width:296px;background:linear-gradient(90deg,#72ac00 0,#6aa100 1.5px,#669a00 3.5px,#999600 229.5px,#998700 295.5px)"></i><i style="margin-left:0px;width:296px;background:linear-gradient(90deg,#8ed800 0,#7ebf00 1.5px,#6ba100 3.5px,#679a00 5.5px,#999600 228.5px,#998700 295.5px)"></i><i style="margin-left:0px;width:296px;background:linear-gradient(90deg,#a3f600 0,#90d900 2.5px,#7fbf00 3.5px,#6ca100 5.5px,#679a00 7.5px,#999600 227.5px,#998700 295.5px)"></i><i style="margin-left:0px;width:296px;background:linear-gradient(90deg,#a9fe00 0,#a4f700 2.5px,#91d900 4.5px,#80bf00 5.5px,#6ca100 7.5px,#689a00 9.5px,#999700 226.5px,#998700 295.5px)"></i><i style="margin-left:0px;width:296px;background:linear-gradient(90deg,#a9ff01 0,#a9fd00 3.5px,#a5f700 4.5px,#92d900 6.5px,#81bf00 7.5px,#6da100 9.5px,#689a00 11.5px,#999700 225.5px,#998700 295.5px)"></i><i style="margin-left:0px;width:296px;background:linear-gradient(90deg,#aaff01 0,#aafd00 5.5px,#a6f700 6.5px,#93d900 8.5px,#81bf00 9.5px,#6ea100 11.5px,#699a00 13.5px,#999600 225.5px,#998600 295.5px)"></i><i style="margin-left:0px;width:296px;background:linear-gradient(90deg,#aaff01 0,#abfd00 7.5px,#a7f700 8.5px,#94d900 10.5px,#82bf00 11.5px,#6ea100 13.5px,#6a9a00 15.5px,#999600 224.5px,#998600 295.5px)"></i><i style="margin-left:0px;width:296px;background:linear-gradient(90deg,#aaff01 0,#acfd00 9.5px,#a8f700 10.5px,#95d900 12.5px,#83bf00 13.5px,#6fa100 15.5px,#6a9a00 16.5px,#999600 223.5px,#998600 295.5px)"></i><i style="margin-left:0px;width:296px;background:linear-gradient(90deg,#aaff01 0,#adfd00 11.5px,#a9f700 12.5px,#95d900 14.5px,#80b900 15.5px,#70a200 16.5px,#6c9b00 17.5px,#999600 222.5px,#998600 295.5px)"></i><i style="margin-left:0px;width:296px;background:linear-gradient(90deg,#abff01 0,#aefd00 13.5px,#aaf600 14.5px,#9adf00 15.5px,#85bf00 16.5px,#70a100 18.5px,#6b9a00 20.5px,#999600 221.5px,#998600 295.5px)"></i><i style="margin-left:0px;width:296px;background:linear-gradient(90deg,#abff01 0,#affe00 14.5px,#abf700 15.5px,#97d900 17.5px,#85bf00 18.5px,#71a100 20.5px,#6c9a00 22.5px,#999600 220.5px,#998500 295.5px)"></i><i style="margin-left:0px;width:296px;background:linear-gradient(90deg,#abff02 0,#b0fd00 16.5px,#acf700 17.5px,#98d900 19.5px,#86bf00 20.5px,#71a100 22.5px,#6d9a00 24.5px,#999600 219.5px,#998500 295.5px)"></i><i style="margin-left:0px;width:296px;background:linear-gradient(90deg,#acff02 0,#b1fd00 18.5px,#adf700 19.5px,#99d900 21.5px,#87bf00 22.5px,#72a100 24.5px,#6d9a00 26.5px,#999600 218.5px,#998500 295.5px)"></i><i style="margin-left:0px;width:296px;background:linear-gradient(90deg,#acff02 0,#b2fd00 20.5px,#aef700 21.5px,#9ad900 23.5px,#87bf00 24.5px,#73a100 26.5px,#6e9a00 28.5px,#999700 217.5px,#998500 295.5px)"></i><i style="margin-left:0px;width:296px;background:linear-gradient(90deg,#acff02 0,#b3fd00 22.5px,#aff700 23.5px,#9bd900 25.5px,#88bf00 26.5px,#73a100 28.5px,#6f9a00 29.5px,#999600 217.5px,#998500 295.5px)"></i><i style="margin-left:0px;width:296px;background:linear-gradient(90deg,#acff02 0,#b4fd00 24.5px,#b0f700 25.5px,#9bd900 27.5px,#85b900 28.5px,#75a200 29.5px,#709b00 30.5px,#999600 216.5px,#998400 295.5px)"></i><i style="margin-left:0px;width:296px;background:linear-gradient(90deg,#adff02 0,#b5fd00 26.5px,#b0f600 27.5px,#a0df00 28.5px,#8abf00 29.5px,#74a100 31.5px,#709a00 33.5px,#999600 215.5px,#998400 295.5px)"></i><i style="margin-left:0px;width:296px;background:linear-gradient(90deg,#adff03 0,#b6fe00 27.5px,#b2f700 28.5px,#9dd900 30.5px,#8abf00 31.5px,#75a100 33.5px,#709a00 35.5px,#999600 214.5px,#998400 295.5px)"></i><i style="margin-left:0px;width:296px;background:linear-gradient(90deg,#adff03 0,#b7fd00 29.5px,#b3f700 30.5px,#9ed900 32.5px,#8bbf00 33.5px,#76a100 35.5px,#719a00 37.5px,#999600 213.5px,#998400 295.5px)"></i><i style="margin-left:0px;width:296px;background:linear-gradient(90deg,#aeff03 0,#b8fd00 31.5px,#b4f700 32.5px,#9fd900 34.5px,#8cbf00 35.5px,#77a100 37.5px,#719a00 39.5px,#999600 212.5px,#998400 295.5px)"></i><i style="margin-left:0px;width:296px;background:linear-gradient(90deg,#aeff03 0,#b9fd00 33.5px,#b5f700 34.5px,#a0d900 36.5px,#8dbf00 37.5px,#77a100 39.5px,#729a00 41.5px,#999600 211.5px,#998300 295.5px)"></i><i style="margin-left:0px;width:296px;background:linear-gradient(90deg,#aeff03 0,#bafd00 35.5px,#b6f700 36.5px,#a1d900 38.5px,#8dbf00 39.5px,#77a100 41.5px,#739a00 42.5px,#999600 211.5px,#998300 295.5px)"></i><i style="margin-left:0px;width:296px;background:linear-gradient(90deg,#aeff03 0,#bbfd00 37.5px,#b7f700 38.5px,#a1d900 40.5px,#8ab900 41.5px,#79a200 42.5px,#749b00 43.5px,#999600 210.5px,#998300 295.5px)"></i><i style="margin-left:0px;width:296px;background:linear-gradient(90deg,#afff04 0,#bcfd00 39.5px,#b7f600 40.5px,#a6df00 41.5px,#8fbf00 42.5px,#79a100 44.5px,#749a00 46.5px,#999600 209.5px,#998300 295.5px)"></i><i style="margin-left:0px;width:296px;background:linear-gradient(90deg,#afff04 0,#bdfe00 40.5px,#b9f700 41.5px,#a3d900 43.5px,#90bf00 44.5px,#7aa100 46.5px,#759a00 48.5px,#999600 208.5px,#998300 295.5px)"></i><i style="margin-left:0px;width:296px;background:linear-gradient(90deg,#afff04 0,#befd00 42.5px,#baf700 43.5px,#a4d900 45.5px,#90bf00 46.5px,#7aa100 48.5px,#759a00 50.5px,#999600 207.5px,#998200 295.5px)"></i><i style="margin-left:0px;width:296px;background:linear-gradient(90deg,#b0ff04 0,#bffd00 44.5px,#bbf700 45.5px,#a5d900 47.5px,#91bf00 48.5px,#7ba100 50.5px,#769a00 52.5px,#999600 206.5px,#998200 295.5px)"></i><i style="margin-left:0px;width:296px;background:linear-gradient(90deg,#b0ff04 0,#c0fd00 46.5px,#bcf700 47.5px,#a6d900 49.5px,#92bf00 50.5px,#7ca100 52.5px,#769a00 54.5px,#999600 205.5px,#998200 295.5px)"></i><i style="margin-left:0px;width:296px;background:linear-gradient(90deg,#b0ff04 0,#c1fd00 48.5px,#bdf700 49.5px,#a7d900 51.5px,#93bf00 52.5px,#7ca100 54.5px,#779a00 56.5px,#999600 204.5px,#998200 295.5px)"></i><i style="margin-left:0px;width:296px;background:linear-gradient(90deg,#b1ff05 0,#c2fd00 50.5px,#bef700 51.5px,#a8d900 53.5px,#94bf00 54.5px,#7da100 56.5px,#789a00 57.5px,#999600 204.5px,#998200 295.5px)"></i><i style="margin-left:0px;width:296px;background:linear-gradient(90deg,#b1ff05 0,#c3fd00 52.5px,#bff700 53.5px,#a8d900 55.5px,#90b900 56.5px,#7ea200 57.5px,#799b00 58.5px,#999600 203.5px,#998100 295.5px)"></i><i style="margin-left:0px;width:296px;background:linear-gradient(90deg,#b1ff05 0,#c4fd00 54.5px,#bff600 55.5px,#addf00 56.5px,#95bf00 57.5px,#7ea100 59.5px,#799a00 61.5px,#999600 202.5px,#998100 295.5px)"></i><i style="margin-left:0px;width:296px;background:linear-gradient(90deg,#b1ff05 0,#c6fe00 55.5px,#c1f700 56.5px,#aad900 58.5px,#96bf00 59.5px,#7fa100 61.5px,#7a9a00 63.5px,#999600 201.5px,#998100 295.5px)"></i><i style="margin-left:0px;width:296px;background:linear-gradient(90deg,#b2ff05 0,#c6fd00 57.5px,#c2f700 58.5px,#abd900 60.5px,#97bf00 61.5px,#80a100 63.5px,#7a9a00 65.5px,#999600 200.5px,#998100 295.5px)"></i><i style="margin-left:0px;width:296px;background:linear-gradient(90deg,#b2ff05 0,#c7fd00 59.5px,#c3f700 60.5px,#acd900 62.5px,#98bf00 63.5px,#80a100 65.5px,#7b9a00 67.5px,#999600 199.5px,#998100 295.5px)"></i><i style="margin-left:0px;width:296px;background:linear-gradient(90deg,#b2ff06 0,#c8fd00 61.5px,#c4f700 62.5px,#add900 64.5px,#98bf00 65.5px,#81a100 67.5px,#7c9a00 69.5px,#999600 198.5px,#998000 295.5px)"></i><i style="margin-left:0px;width:296px;background:linear-gradient(90deg,#b3ff06 0,#c9fd00 63.5px,#c5f700 64.5px,#aed900 66.5px,#99bf00 67.5px,#81a100 69.5px,#7c9a00 70.5px,#999600 197.5px,#998000 295.5px)"></i><i style="margin-left:0px;width:296px;background:linear-gradient(90deg,#b3ff06 0,#cbfd00 65.5px,#c6f700 66.5px,#afd900 68.5px,#96b900 69.5px,#83a200 70.5px,#7e9b00 71.5px,#999600 197.5px,#998000 295.5px)"></i><i style="margin-left:0px;width:296px;background:linear-gradient(90deg,#b3ff06 0,#ccfd00 67.5px,#c6f600 68.5px,#b4df00 69.5px,#9bbf00 70.5px,#83a100 72.5px,#7d9a00 74.5px,#999600 195.5px,#998000 295.5px)"></i><i style="margin-left:0px;width:296px;background:linear-gradient(90deg,#b3ff06 0,#cdfe00 68.5px,#c8f700 69.5px,#b1d900 71.5px,#9bbf00 72.5px,#84a100 74.5px,#7e9a00 76.5px,#999600 195.5px,#998000 295.5px)"></i><i style="margin-left:0px;width:296px;background:linear-gradient(90deg,#b4ff06 0,#cdfd00 70.5px,#c9f700 71.5px,#b2d900 73.5px,#9cbf00 74.5px,#84a100 76.5px,#7f9a00 78.5px,#999600 194.5px,#997f00 295.5px)"></i><i style="margin-left:0px;width:296px;background:linear-gradient(90deg,#b4ff07 0,#cffd00 72.5px,#caf700 73.5px,#b3d900 75.5px,#9dbf00 76.5px,#85a100 78.5px,#809a00 80.5px,#999600 193.5px,#997f00 295.5px)"></i><i style="margin-left:0px;width:296px;background:linear-gradient(90deg,#b4ff07 0,#d0fd00 74.5px,#cbf700 75.5px,#b4d900 77.5px,#9ebf00 78.5px,#86a100 80.5px,#809a00 82.5px,#999600 192.5px,#997f00 295.5px)"></i><i style="margin-left:0px;width:296px;background:linear-gradient(90deg,#b5ff07 0,#d1fd00 76.5px,#ccf700 77.5px,#b5d900 79.5px,#9fbf00 80.5px,#86a100 82.5px,#819a00 83.5px,#999600 192.5px,#997f00 295.5px)"></i><i style="margin-left:0px;width:296px;background:linear-gradient(90deg,#b5ff07 0,#d2fd00 78.5px,#cef700 79.5px,#b5d900 81.5px,#9bb900 82.5px,#88a200 83.5px,#839b00 84.5px,#999600 191.5px,#997f00 295.5px)"></i><i style="margin-left:0px;width:296px;background:linear-gradient(90deg,#b5ff07 0,#d3fd00 80.5px,#cef600 81.5px,#bbdf00 82.5px,#a1bf00 83.5px,#88a100 85.5px,#829a00 87.5px,#999600 190.5px,#997f00 295.5px)"></i><i style="margin-left:0px;width:296px;background:linear-gradient(90deg,#b6ff07 0,#d5fe00 81.5px,#d0f700 82.5px,#b7d900 84.5px,#a1bf00 85.5px,#89a100 87.5px,#839a00 89.5px,#999600 189.5px,#997e00 295.5px)"></i><i style="margin-left:0px;width:296px;background:linear-gradient(90deg,#b6ff08 0,#d5fd00 83.5px,#d1f700 84.5px,#b8d900 86.5px,#a2bf00 87.5px,#89a100 89.5px,#839a00 91.5px,#999600 188.5px,#997e00 295.5px)"></i><i style="margin-left:0px;width:296px;background:linear-gradient(90deg,#b6ff08 0,#d6fd00 85.5px,#d2f700 86.5px,#b9d900 88.5px,#a3bf00 89.5px,#8aa100 91.5px,#849a00 93.5px,#999600 187.5px,#997e00 295.5px)"></i><i style="margin-left:0px;width:296px;background:linear-gradient(90deg,#b6ff08 0,#d7fd00 87.5px,#d3f700 88.5px,#bad900 90.5px,#a4bf00 91.5px,#8ba100 93.5px,#859a00 95.5px,#999600 186.5px,#997e00 295.5px)"></i><i style="margin-left:0px;width:296px;background:linear-gradient(90deg,#b7ff08 0,#d9fd00 89.5px,#d4f700 90.5px,#bbd900 92.5px,#a5bf00 93.5px,#8ca100 95.5px,#869a00 97.5px,#999600 185.5px,#997e00 295.5px)"></i><i style="margin-left:0px;width:296px;background:linear-gradient(90deg,#b7ff08 0,#dafd00 91.5px,#d5f700 92.5px,#bcd900 94.5px,#a6bf00 95.5px,#8ca100 97.5px,#879a00 98.5px,#999600 185.5px,#997d00 295.5px)"></i><i style="margin-left:0px;width:296px;background:linear-gradient(90deg,#b7ff08 0,#dbfd00 93.5px,#d6f700 94.5px,#bdd900 96.5px,#a2b900 97.5px,#8ea200 98.5px,#889b00 99.5px,#999600 185.5px,#997d00 295.5px)"></i><i style="margin-left:0px;width:296px;background:linear-gradient(90deg,#b8ff09 0,#dcfd00 95.5px,#d6f600 96.5px,#c2df00 97.5px,#a8bf00 98.5px,#8ea100 100.5px,#889a00 102.5px,#999600 183.5px,#997d00 295.5px)"></i><i style="margin-left:0px;width:296px;background:linear-gradient(90deg,#b8ff09 0,#defe00 96.5px,#d9f700 97.5px,#bfd900 99.5px,#a8bf00 100.5px,#8ea100 102.5px,#889a00 104.5px,#999600 182.5px,#997d00 295.5px)"></i><i style="margin-left:0px;width:296px;background:linear-gradient(90deg,#b8ff09 0,#defd00 98.5px,#d9f700 99.5px,#c0d900 101.5px,#a9bf00 102.5px,#8fa100 104.5px,#899a00 106.5px,#999600 181.5px,#997d00 295.5px)"></i><i style="margin-left:0px;width:296px;background:linear-gradient(90deg,#b9ff09 0,#dffd00 100.5px,#daf700 101.5px,#c1d900 103.5px,#aabf00 104.5px,#90a100 106.5px,#8a9a00 108.5px,#999600 181.5px,#997c00 295.5px)"></i><i style="margin-left:0px;width:296px;background:linear-gradient(90deg,#b9ff09 0,#e0fd00 102.5px,#dcf700 103.5px,#c2d900 105.5px,#abbf00 106.5px,#91a100 108.5px,#8a9a00 110.5px,#999600 180.5px,#997c00 295.5px)"></i><i style="margin-left:0px;width:296px;background:linear-gradient(90deg,#b9ff09 0,#e2fd00 104.5px,#ddf700 105.5px,#c3d900 107.5px,#acbf00 108.5px,#91a100 110.5px,#8b9a00 111.5px,#999600 180.5px,#997c00 295.5px)"></i><i style="margin-left:0px;width:296px;background:linear-gradient(90deg,#baff0a 0,#e3fd00 106.5px,#def700 107.5px,#c4d900 109.5px,#a8b900 110.5px,#93a200 111.5px,#8d9b00 112.5px,#999500 180.5px,#997c00 295.5px)"></i><i style="margin-left:0px;width:296px;background:linear-gradient(90deg,#baff0a 0,#e4fd00 108.5px,#def600 109.5px,#cadf00 110.5px,#aebf00 111.5px,#93a100 113.5px,#8c9a00 115.5px,#999600 178.5px,#997c00 295.5px)"></i><i style="margin-left:0px;width:296px;background:linear-gradient(90deg,#baff0a 0,#e6fe00 109.5px,#e0f700 110.5px,#c6d900 112.5px,#aebf00 113.5px,#93a100 115.5px,#8d9a00 117.5px,#999600 177.5px,#997b00 295.5px)"></i><i style="margin-left:0px;width:296px;background:linear-gradient(90deg,#baff0a 0,#e6fd00 111.5px,#e1f700 112.5px,#c7d900 114.5px,#afbf00 115.5px,#94a100 117.5px,#8e9a00 119.5px,#999500 177.5px,#997b00 295.5px)"></i><i style="margin-left:0px;width:296px;background:linear-gradient(90deg,#bbff0a 0,#e7fd00 113.5px,#e2f700 114.5px,#c8d900 116.5px,#b0bf00 117.5px,#95a100 119.5px,#8f9a00 121.5px,#999500 176.5px,#997b00 295.5px)"></i><i style="margin-left:0px;width:296px;background:linear-gradient(90deg,#bbff0a 0,#e8fd00 115.5px,#e4f700 116.5px,#c9d900 118.5px,#b1bf00 119.5px,#96a100 121.5px,#8f9a00 123.5px,#999500 175.5px,#997b00 295.5px)"></i><i style="margin-left:0px;width:296px;background:linear-gradient(90deg,#bbff0b 0,#eafd00 117.5px,#e5f700 118.5px,#cad900 120.5px,#b2bf00 121.5px,#96a100 123.5px,#909a00 124.5px,#999500 176.5px,#997b00 295.5px)"></i><i style="margin-left:0px;width:296px;background:linear-gradient(90deg,#bcff0b 0,#ebfd00 119.5px,#e6f700 120.5px,#cbd900 122.5px,#aeb900 123.5px,#98a200 124.5px,#929b00 125.5px,#999400 180.5px,#997b00 295.5px)"></i><i style="margin-left:0px;width:296px;background:linear-gradient(90deg,#bcff0b 0,#ecfd00 121.5px,#e6f600 122.5px,#d1df00 123.5px,#b4bf00 124.5px,#98a100 126.5px,#919a00 128.5px,#999500 175.5px,#997a00 295.5px)"></i><i style="margin-left:0px;width:296px;background:linear-gradient(90deg,#bcff0b 0,#eefe00 122.5px,#e8f700 123.5px,#cdd900 125.5px,#b4bf00 126.5px,#99a100 128.5px,#929a00 130.5px,#999500 175.5px,#997a00 295.5px)"></i><i style="margin-left:0px;width:296px;background:linear-gradient(90deg,#bdff0b 0,#eefd00 124.5px,#e9f700 125.5px,#ced900 127.5px,#b5bf00 128.5px,#99a100 130.5px,#939a00 132.5px,#999400 175.5px,#997a00 295.5px)"></i><i style="margin-left:0px;width:296px;background:linear-gradient(90deg,#bdff0c 0,#effd00 126.5px,#eaf700 127.5px,#cfd900 129.5px,#b6bf00 130.5px,#9aa100 132.5px,#949a00 134.5px,#999400 177.5px,#997a00 295.5px)"></i><i style="margin-left:0px;width:296px;background:linear-gradient(90deg,#bdff0c 0,#f1fd00 128.5px,#ecf700 129.5px,#d0d900 131.5px,#b7bf00 132.5px,#9ba100 134.5px,#949a00 136.5px,#999200 181.5px,#997a00 295.5px)"></i><i style="margin-left:0px;width:296px;background:linear-gradient(90deg,#beff0c 0,#f2fd00 130.5px,#edf700 131.5px,#d1d900 133.5px,#b8bf00 134.5px,#9ca100 136.5px,#959a00 138.5px,#999000 189.5px,#997900 295.5px)"></i><i style="margin-left:0px;width:296px;background:linear-gradient(90deg,#beff0c 0,#f3fd00 132.5px,#eef700 133.5px,#d2d900 135.5px,#b9bf00 136.5px,#9ca100 138.5px,#969a00 139.5px,#997a00 291.5px,#997900 295.5px)"></i><i style="margin-left:0px;width:296px;background:linear-gradient(90deg,#beff0c 0,#f5fd00 134.5px,#eff700 135.5px,#d3d900 137.5px,#b5b900 138.5px,#9ea200 139.5px,#989b00 140.5px,#997900 295.5px)"></i><i style="margin-left:0px;width:296px;background:linear-gradient(90deg,#bfff0c 0,#f6fd00 136.5px,#eff600 137.5px,#d9df00 138.5px,#bbbf00 139.5px,#9ea100 141.5px,#979a00 143.5px,#997900 295.5px)"></i><i style="margin-left:0px;width:296px;background:linear-gradient(90deg,#bfff0d 0,#f8fe00 137.5px,#f2f700 138.5px,#d5d900 140.5px,#bcbf00 141.5px,#9fa100 143.5px,#989a00 145.5px,#997900 295.5px)"></i><i style="margin-left:0px;width:296px;background:linear-gradient(90deg,#bfff0d 0,#f8fd00 139.5px,#f3f700 140.5px,#d6d900 142.5px,#bcbf00 143.5px,#a0a100 145.5px,#999a00 147.5px,#997800 295.5px)"></i><i style="margin-left:0px;width:296px;background:linear-gradient(90deg,#c0ff0d 0,#f9fd00 141.5px,#f4f700 142.5px,#d7d900 144.5px,#bdbf00 145.5px,#a0a100 147.5px,#999a00 149.5px,#997800 295.5px)"></i><i style="margin-left:0px;width:296px;background:linear-gradient(90deg,#c0ff0d 0,#fafd00 143.5px,#f5f700 144.5px,#d8d900 146.5px,#bebf00 147.5px,#a1a100 149.5px,#9a9900 151.5px,#997800 295.5px)"></i><i style="margin-left:0px;width:296px;background:linear-gradient(90deg,#c0ff0d 0,#fcfd00 145.5px,#f6f700 146.5px,#d9d900 148.5px,#bfbe00 149.5px,#a1a000 151.5px,#9a9900 152.5px,#997800 295.5px)"></i><i style="margin-left:0px;width:296px;background:linear-gradient(90deg,#c1ff0e 0,#fefe00 146.5px,#f7f600 148.5px,#d9d700 150.5px,#b9b800 151.5px,#a2a100 152.5px,#9b9900 153.5px,#997c00 273.5px,#997800 295.5px)"></i><i style="margin-left:0px;width:296px;background:linear-gradient(90deg,#c1ff0e 0,#fefd00 148.5px,#fdfb00 149.5px,#f6f400 150.5px,#dfdc00 151.5px,#bfbd00 152.5px,#a19f00 154.5px,#9a9700 156.5px,#997800 295.5px)"></i><i style="margin-left:0px;width:296px;background:linear-gradient(90deg,#c1ff0e 0,#fffd00 149.5px,#fefb00 150.5px,#f7f500 151.5px,#d9d600 153.5px,#bfbc00 154.5px,#a19e00 156.5px,#9a9600 158.5px,#970 295.5px)"></i><i style="margin-left:0px;width:296px;background:linear-gradient(90deg,#c1ff0e 0,#fffd01 149.5px,#fdf900 152.5px,#f7f300 153.5px,#d9d500 155.5px,#bfbb00 156.5px,#a19d00 158.5px,#9a9500 160.5px,#970 295.5px)"></i><i style="margin-left:0px;width:296px;background:linear-gradient(90deg,#c2ff0e 0,#fffd01 148.5px,#fdf800 154.5px,#f7f200 155.5px,#d9d400 157.5px,#bfba00 158.5px,#a19c00 160.5px,#9a9500 162.5px,#970 295.5px)"></i><i style="margin-left:0px;width:296px;background:linear-gradient(90deg,#c2ff0e 0,#fffd01 147.5px,#fdf700 156.5px,#f7f000 157.5px,#d9d300 159.5px,#bfb900 160.5px,#a19c00 162.5px,#9a9400 164.5px,#970 295.5px)"></i><i style="margin-left:0px;width:296px;background:linear-gradient(90deg,#c2ff0f 0,#fffd01 146.5px,#fdf500 158.5px,#f7ef00 159.5px,#d9d200 161.5px,#bfb800 162.5px,#a19a00 164.5px,#9a9400 165.5px,#970 295.5px)"></i><i style="margin-left:0px;width:296px;background:linear-gradient(90deg,#c3ff0f 0,#fffc02 146.5px,#fdf400 160.5px,#f7ee00 161.5px,#d9d000 163.5px,#b9b200 164.5px,#a29b00 165.5px,#9b9400 166.5px,#970 294.5px,#997600 295.5px)"></i><i style="margin-left:0px;width:296px;background:linear-gradient(90deg,#c3ff0f 0,#fffc02 145.5px,#fdf300 162.5px,#f6ec00 163.5px,#dfd500 164.5px,#bfb700 165.5px,#a19900 167.5px,#9a9200 169.5px,#997600 295.5px)"></i><i style="margin-left:0px;width:296px;background:linear-gradient(90deg,#c3ff0f 0,#fffc02 144.5px,#fef300 163.5px,#f7ed00 164.5px,#d9cf00 166.5px,#bfb500 167.5px,#a19900 169.5px,#9a9100 171.5px,#997600 295.5px)"></i><i style="margin-left:0px;width:296px;background:linear-gradient(90deg,#c4ff0f 0,#fffd02 143.5px,#fdf100 165.5px,#f7eb00 166.5px,#d9ce00 168.5px,#bfb500 169.5px,#a19800 171.5px,#9a9000 173.5px,#997600 295.5px)"></i><i style="margin-left:0px;width:296px;background:linear-gradient(90deg,#c4ff10 0,#fffd03 142.5px,#fdf000 167.5px,#f7ea00 168.5px,#d9cd00 170.5px,#bfb400 171.5px,#a19700 173.5px,#9a9000 175.5px,#997600 295.5px)"></i><i style="margin-left:0px;width:296px;background:linear-gradient(90deg,#c4ff10 0,#fffd03 141.5px,#fdee00 169.5px,#f7e800 170.5px,#d9cc00 172.5px,#bfb300 173.5px,#a19600 175.5px,#9a8f00 177.5px,#997600 295.5px)"></i><i style="margin-left:0px;width:296px;background:linear-gradient(90deg,#c5ff10 0,#fffd03 140.5px,#fded00 171.5px,#f7e700 172.5px,#d9cb00 174.5px,#bfb200 175.5px,#a19600 177.5px,#9a8e00 179.5px,#997500 295.5px)"></i><i style="margin-left:0px;width:296px;background:linear-gradient(90deg,#c5ff10 0,#fffd04 139.5px,#fdec00 173.5px,#f7e600 174.5px,#d9ca00 176.5px,#bfb100 177.5px,#a19400 179.5px,#9a8e00 180.5px,#997500 295.5px)"></i><i style="margin-left:0px;width:296px;background:linear-gradient(90deg,#c5ff10 0,#fffd04 138.5px,#fdeb00 175.5px,#f7e500 176.5px,#d9c800 178.5px,#b9ab00 179.5px,#a29500 180.5px,#9b8f00 181.5px,#997500 295.5px)"></i><i style="margin-left:0px;width:296px;background:linear-gradient(90deg,#c6ff10 0,#fffd04 137.5px,#fdea00 177.5px,#f6e300 178.5px,#dfcd00 179.5px,#bfb000 180.5px,#a19400 182.5px,#9a8c00 184.5px,#997500 295.5px)"></i><i style="margin-left:0px;width:296px;background:linear-gradient(90deg,#c6ff11 0,#fffc04 137.5px,#feea00 178.5px,#f7e400 179.5px,#d9c700 181.5px,#bfaf00 182.5px,#a19300 184.5px,#9a8c00 186.5px,#997500 295.5px)"></i><i style="margin-left:0px;width:296px;background:linear-gradient(90deg,#c6ff11 0,#fffc05 136.5px,#fde800 180.5px,#f7e200 181.5px,#d9c600 183.5px,#bfae00 184.5px,#a19200 186.5px,#9a8b00 188.5px,#997400 295.5px)"></i><i style="margin-left:0px;width:296px;background:linear-gradient(90deg,#c7ff11 0,#fffc05 135.5px,#fde700 182.5px,#f7e100 183.5px,#d9c500 185.5px,#bfad00 186.5px,#a19100 188.5px,#9a8a00 190.5px,#997400 295.5px)"></i><i style="margin-left:0px;width:296px;background:linear-gradient(90deg,#c7ff11 0,#fffd05 134.5px,#fde500 184.5px,#f7e000 185.5px,#d9c400 187.5px,#bfac00 188.5px,#a19100 190.5px,#9a8a00 192.5px,#997400 295.5px)"></i><i style="margin-left:0px;width:296px;background:linear-gradient(90deg,#c7ff11 0,#fffd05 133.5px,#fde400 186.5px,#f7df00 187.5px,#d9c300 189.5px,#bfab00 190.5px,#a19000 192.5px,#9a8a00 193.5px,#997400 295.5px)"></i><i style="margin-left:0px;width:296px;background:linear-gradient(90deg,#c8ff12 0,#fffd06 132.5px,#fde300 188.5px,#f7de00 189.5px,#d9c200 191.5px,#b9a600 192.5px,#a29100 193.5px,#9b8a00 194.5px,#997400 295.5px)"></i><i style="margin-left:0px;width:296px;background:linear-gradient(90deg,#c8ff12 0,#fffd06 131.5px,#fde200 190.5px,#f6db00 191.5px,#dfc600 192.5px,#bfaa00 193.5px,#a18f00 195.5px,#9a8800 197.5px,#997400 295.5px)"></i><i style="margin-left:0px;width:296px;background:linear-gradient(90deg,#c8ff12 0,#fffd06 130.5px,#fee200 191.5px,#f7dc00 192.5px,#d9c100 194.5px,#bfa900 195.5px,#a18e00 197.5px,#9a8700 199.5px,#997300 295.5px)"></i><i style="margin-left:0px;width:296px;background:linear-gradient(90deg,#c9ff12 0,#fffd07 129.5px,#fde000 193.5px,#f7db00 194.5px,#d9c000 196.5px,#bfa800 197.5px,#a18d00 199.5px,#9a8600 201.5px,#997300 295.5px)"></i><i style="margin-left:0px;width:296px;background:linear-gradient(90deg,#c9ff12 0,#fffc07 129.5px,#fddf00 195.5px,#f7da00 196.5px,#d9bf00 198.5px,#bfa700 199.5px,#a18d00 201.5px,#9a8600 203.5px,#997300 295.5px)"></i><i style="margin-left:0px;width:296px;background:linear-gradient(90deg,#c9ff13 0,#fffc07 128.5px,#fdde00 197.5px,#f7d800 198.5px,#d9be00 200.5px,#bfa600 201.5px,#a18c00 203.5px,#9a8500 205.5px,#997300 295.5px)"></i><i style="margin-left:0px;width:296px;background:linear-gradient(90deg,#caff13 0,#fffc07 127.5px,#fddd00 199.5px,#f7d700 200.5px,#d9bd00 202.5px,#bfa600 203.5px,#a18b00 205.5px,#9a8500 206.5px,#997300 295.5px)"></i><i style="margin-left:0px;width:296px;background:linear-gradient(90deg,#caff13 0,#fffc08 126.5px,#fddc00 201.5px,#f7d600 202.5px,#d9bb00 204.5px,#b9a000 205.5px,#a28c00 206.5px,#9b8600 207.5px,#997200 295.5px)"></i><i style="margin-left:0px;width:296px;background:linear-gradient(90deg,#caff13 0,#fffd08 125.5px,#fddb00 203.5px,#f6d400 204.5px,#dfc000 205.5px,#bfa500 206.5px,#a18a00 208.5px,#9a8300 210.5px,#997200 295.5px)"></i><i style="margin-left:0px;width:296px;background:linear-gradient(90deg,#cbff13 0,#fffd08 124.5px,#fedb00 204.5px,#f7d500 205.5px,#d9ba00 207.5px,#bfa300 208.5px,#a18a00 210.5px,#9a8300 212.5px,#997200 295.5px)"></i><i style="margin-left:0px;width:296px;background:linear-gradient(90deg,#cbff13 0,#fffd08 123.5px,#fdd900 206.5px,#f7d400 207.5px,#d9b900 209.5px,#bfa300 210.5px,#a18900 212.5px,#9a8200 214.5px,#997200 295.5px)"></i><i style="margin-left:0px;width:296px;background:linear-gradient(90deg,#ccff14 0,#fffd09 122.5px,#fdd800 208.5px,#f7d300 209.5px,#d9b900 211.5px,#bfa200 212.5px,#a18800 214.5px,#9a8100 216.5px,#997200 295.5px)"></i><i style="margin-left:0px;width:296px;background:linear-gradient(90deg,#ccff14 0,#fffd09 121.5px,#fdd700 210.5px,#f7d100 211.5px,#d9b800 213.5px,#bfa100 214.5px,#a18800 216.5px,#9a8100 218.5px,#997200 295.5px)"></i><i style="margin-left:0px;width:296px;background:linear-gradient(90deg,#ccff14 0,#fffd09 120.5px,#fdd600 212.5px,#f7d000 213.5px,#d9b700 215.5px,#bfa000 216.5px,#a18700 218.5px,#9a8000 220.5px,#997100 295.5px)"></i><i style="margin-left:0px;width:296px;background:linear-gradient(90deg,#cdff14 0,#fffc09 120.5px,#fdd500 214.5px,#f7cf00 215.5px,#d9b600 217.5px,#bfa000 218.5px,#a18600 220.5px,#9a8000 221.5px,#997100 295.5px)"></i><i style="margin-left:0px;width:296px;background:linear-gradient(90deg,#cdff14 0,#fffc0a 119.5px,#fdd400 216.5px,#f7ce00 217.5px,#d9b500 219.5px,#b99a00 220.5px,#a28700 221.5px,#9b8100 222.5px,#997100 295.5px)"></i><i style="margin-left:0px;width:296px;background:linear-gradient(90deg,#cdff15 0,#fffc0a 118.5px,#fdd300 218.5px,#f6cd00 219.5px,#dfb900 220.5px,#bf9f00 221.5px,#a18500 223.5px,#9a7f00 225.5px,#997100 295.5px)"></i><i style="margin-left:0px;width:296px;background:linear-gradient(90deg,#ceff15 0,#fffc0a 117.5px,#fed300 219.5px,#f7cd00 220.5px,#d9b400 222.5px,#bf9d00 223.5px,#a18400 225.5px,#9a7e00 227.5px,#997100 295.5px)"></i><i style="margin-left:0px;width:296px;background:linear-gradient(90deg,#ceff15 0,#fffd0b 116.5px,#fdd100 221.5px,#f7cc00 222.5px,#d9b300 224.5px,#bf9d00 225.5px,#a18400 227.5px,#9a7d00 229.5px,#997000 295.5px)"></i><i style="margin-left:0px;width:296px;background:linear-gradient(90deg,#ceff15 0,#fffd0b 115.5px,#fdd000 223.5px,#f7cb00 224.5px,#d9b200 226.5px,#bf9c00 227.5px,#a18300 229.5px,#9a7d00 231.5px,#997000 295.5px)"></i><i style="margin-left:0px;width:296px;background:linear-gradient(90deg,#cfff15 0,#fffd0b 114.5px,#fdcf00 225.5px,#f7ca00 226.5px,#d9b100 228.5px,#bf9b00 229.5px,#a18300 231.5px,#9a7c00 233.5px,#997000 295.5px)"></i><i style="margin-left:0px;width:296px;background:linear-gradient(90deg,#cfff16 0,#fffd0b 113.5px,#fdce00 227.5px,#f7c900 228.5px,#d9b000 230.5px,#bf9a00 231.5px,#a18200 233.5px,#9a7c00 234.5px,#997000 295.5px)"></i><i style="margin-left:0px;width:296px;background:linear-gradient(90deg,#cfff16 0,#fffd0c 112.5px,#fdcd00 229.5px,#f7c800 230.5px,#d9af00 232.5px,#b99500 233.5px,#a28200 234.5px,#9b7d00 235.5px,#997000 295.5px)"></i><i style="margin-left:0px;width:296px;background:linear-gradient(90deg,#d0ff16 0,#fffd0c 111.5px,#fdcc00 231.5px,#f6c600 232.5px,#dfb300 233.5px,#bf9a00 234.5px,#a18100 236.5px,#9a7b00 238.5px,#997000 295.5px)"></i><i style="margin-left:0px;width:296px;background:linear-gradient(90deg,#d0ff16 0,#fffc0c 111.5px,#fecc00 232.5px,#f7c700 233.5px,#d9ae00 235.5px,#bf9800 236.5px,#a18000 238.5px,#9a7a00 240.5px,#996f00 295.5px)"></i><i style="margin-left:0px;width:296px;background:linear-gradient(90deg,#d0ff16 0,#fffc0c 110.5px,#fdca00 234.5px,#f7c500 235.5px,#d9ad00 237.5px,#bf9800 238.5px,#a18000 240.5px,#9a7900 242.5px,#996f00 295.5px)"></i><i style="margin-left:0px;width:296px;background:linear-gradient(90deg,#d1ff17 0,#fffc0d 109.5px,#fdc900 236.5px,#f7c400 237.5px,#d9ac00 239.5px,#bf9700 240.5px,#a17f00 242.5px,#9a7900 244.5px,#996f00 295.5px)"></i><i style="margin-left:0px;width:296px;background:linear-gradient(90deg,#d1ff17 0,#fffc0d 108.5px,#fdc800 238.5px,#f7c300 239.5px,#d9ab00 241.5px,#bf9600 242.5px,#a17e00 244.5px,#9a7800 246.5px,#996f00 295.5px)"></i><i style="margin-left:0px;width:296px;background:linear-gradient(90deg,#d1ff17 0,#fffd0d 107.5px,#fdc700 240.5px,#f7c200 241.5px,#d9aa00 243.5px,#bf9600 244.5px,#a17d00 246.5px,#9a7800 247.5px,#996f00 295.5px)"></i><i style="margin-left:0px;width:296px;background:linear-gradient(90deg,#d2ff17 0,#fffd0e 106.5px,#fdc600 242.5px,#f7c200 243.5px,#d9a900 245.5px,#b99100 246.5px,#a27e00 247.5px,#9b7900 248.5px,#996f00 295.5px)"></i><i style="margin-left:0px;width:296px;background:linear-gradient(90deg,#d2ff17 0,#fffd0e 105.5px,#fdc500 244.5px,#f6c000 245.5px,#dfad00 246.5px,#bf9500 247.5px,#a17d00 249.5px,#9a7700 251.5px,#996e00 295.5px)"></i><i style="margin-left:0px;width:296px;background:linear-gradient(90deg,#d3ff18 0,#fffd0e 104.5px,#fec600 245.5px,#f7c000 246.5px,#d9a800 248.5px,#bf9400 249.5px,#a17c00 251.5px,#9a7600 253.5px,#996e00 295.5px)"></i><i style="margin-left:0px;width:296px;background:linear-gradient(90deg,#d3ff18 0,#fffd0e 103.5px,#ffc701 244.5px,#fdc400 247.5px,#f7bf00 248.5px,#d9a700 250.5px,#bf9300 251.5px,#a17c00 253.5px,#9a7600 255.5px,#996e00 295.5px)"></i><i style="margin-left:0px;width:296px;background:linear-gradient(90deg,#d3ff18 0,#fffc0f 103.5px,#ffc601 244.5px,#fdc300 249.5px,#f7be00 250.5px,#d9a700 252.5px,#bf9200 253.5px,#a17b00 255.5px,#9a7500 257.5px,#996e00 295.5px)"></i><i style="margin-left:0px;width:296px;background:linear-gradient(90deg,#d4ff18 0,#fffc0f 102.5px,#ffc601 243.5px,#fdc200 251.5px,#f7bd00 252.5px,#d9a600 254.5px,#bf9200 255.5px,#a17a00 257.5px,#9a7400 259.5px,#996e00 295.5px)"></i><i style="margin-left:0px;width:296px;background:linear-gradient(90deg,#d4ff18 0,#fffc0f 101.5px,#ffc601 242.5px,#fdc100 253.5px,#f7bc00 254.5px,#d9a500 256.5px,#bf9100 257.5px,#a17a00 259.5px,#9a7400 261.5px,#996d00 295.5px)"></i><i style="margin-left:0px;width:296px;background:linear-gradient(90deg,#d4ff19 0,#fffc10 100.5px,#ffc601 241.5px,#fdc000 255.5px,#f7bb00 256.5px,#d9a400 258.5px,#bf9000 259.5px,#a17900 261.5px,#9a7400 262.5px,#996d00 295.5px)"></i><i style="margin-left:0px;width:296px;background:linear-gradient(90deg,#d5ff19 0,#fffc10 99.5px,#ffc702 239.5px,#fdbf00 257.5px,#f7bb00 258.5px,#d9a300 260.5px,#b98b00 261.5px,#a27a00 262.5px,#9b7400 263.5px,#996d00 295.5px)"></i><i style="margin-left:0px;width:296px;background:linear-gradient(90deg,#d5ff19 0,#fffd10 98.5px,#ffc702 238.5px,#fdbe00 259.5px,#f6b900 260.5px,#dfa700 261.5px,#bf8f00 262.5px,#a17800 264.5px,#9a7200 266.5px,#996d00 295.5px)"></i><i style="margin-left:0px;width:296px;background:linear-gradient(90deg,#d5ff19 0,#fffd10 97.5px,#ffc702 237.5px,#febf00 260.5px,#f7b900 261.5px,#d9a200 263.5px,#bf8e00 264.5px,#a17800 266.5px,#9a7200 268.5px,#996d00 295.5px)"></i><i style="margin-left:0px;width:296px;background:linear-gradient(90deg,#d6ff19 0,#fffd11 96.5px,#ffc702 236.5px,#fdbd00 262.5px,#f7b800 263.5px,#d9a100 265.5px,#bf8e00 266.5px,#a17700 268.5px,#9a7100 270.5px,#996d00 295.5px)"></i><i style="margin-left:0px;width:296px;background:linear-gradient(90deg,#d6ff1a 0,#fffd11 95.5px,#ffc703 235.5px,#fdbc00 264.5px,#f7b700 265.5px,#d9a100 267.5px,#bf8d00 268.5px,#a17700 270.5px,#9a7100 272.5px,#996c00 295.5px)"></i><i style="margin-left:0px;width:296px;background:linear-gradient(90deg,#d7ff1a 0,#fffd11 94.5px,#ffc703 234.5px,#fdbb00 266.5px,#f7b600 267.5px,#d9a000 269.5px,#bf8c00 270.5px,#a17600 272.5px,#9a7000 274.5px,#996c00 295.5px)"></i><i style="margin-left:0px;width:296px;background:linear-gradient(90deg,#d7ff1a 0,#fffc11 94.5px,#ffc603 234.5px,#fdba00 268.5px,#f7b600 269.5px,#d99f00 271.5px,#bf8c00 272.5px,#a17500 274.5px,#9a7000 275.5px,#996c00 295.5px)"></i><i style="margin-left:0px;width:296px;background:linear-gradient(90deg,#d7ff1a 0,#fffc12 93.5px,#ffc603 233.5px,#fdb900 270.5px,#f7b500 271.5px,#d99e00 273.5px,#b98700 274.5px,#a27600 275.5px,#9b7100 276.5px,#996c00 295.5px)"></i><i style="margin-left:0px;width:296px;background:linear-gradient(90deg,#d8ff1a 0,#fffc12 92.5px,#ffc604 232.5px,#fdb800 272.5px,#f6b300 273.5px,#dfa200 274.5px,#bf8b00 275.5px,#a17500 277.5px,#9a6f00 279.5px,#996c00 295.5px)"></i><i style="margin-left:0px;width:296px;background:linear-gradient(90deg,#d8ff1b 0,#fffc12 91.5px,#ffc604 231.5px,#feb900 273.5px,#f7b400 274.5px,#d99d00 276.5px,#bf8a00 277.5px,#a17400 279.5px,#9a6e00 281.5px,#996c00 295.5px)"></i><i style="margin-left:0px;width:296px;background:linear-gradient(90deg,#d8ff1b 0,#fffc13 90.5px,#ffc704 229.5px,#fdb700 275.5px,#f7b200 276.5px,#d99c00 278.5px,#bf8900 279.5px,#a17300 281.5px,#9a6e00 283.5px,#996b00 295.5px)"></i><i style="margin-left:0px;width:296px;background:linear-gradient(90deg,#d9ff1b 0,#fffd13 89.5px,#ffc704 228.5px,#fdb600 277.5px,#f7b200 278.5px,#d99c00 280.5px,#bf8900 281.5px,#a17300 283.5px,#9a6d00 285.5px,#996b00 295.5px)"></i><i style="margin-left:0px;width:296px;background:linear-gradient(90deg,#d9ff1b 0,#fffd13 88.5px,#ffc705 227.5px,#fdb500 279.5px,#f7b100 280.5px,#d99b00 282.5px,#bf8800 283.5px,#a17200 285.5px,#9a6d00 287.5px,#996b00 295.5px)"></i><i style="margin-left:0px;width:296px;background:linear-gradient(90deg,#d9ff1c 0,#fffd14 87.5px,#ffc705 226.5px,#fdb400 281.5px,#f7b000 282.5px,#d99a00 284.5px,#bf8700 285.5px,#a17100 287.5px,#9a6d00 288.5px,#996b00 295.5px)"></i><i style="margin-left:0px;width:296px;background:linear-gradient(90deg,#daff1c 0,#fffd14 86.5px,#ffc705 225.5px,#fdb300 283.5px,#f7af00 284.5px,#d99900 286.5px,#b98300 287.5px,#a27200 288.5px,#9b6d00 289.5px,#996b00 295.5px)"></i><i style="margin-left:0px;width:296px;background:linear-gradient(90deg,#daff1c 0,#fffc14 86.5px,#ffc605 225.5px,#fdb300 285.5px,#f6ad00 286.5px,#df9d00 287.5px,#bf8700 288.5px,#a17100 290.5px,#9a6b00 292.5px,#996a00 295.5px)"></i><i style="margin-left:0px;width:296px;background:linear-gradient(90deg,#dbff1c 0,#fffc14 85.5px,#ffc605 224.5px,#feb300 286.5px,#f7ae00 287.5px,#d99800 289.5px,#bf8600 290.5px,#a17000 292.5px,#9a6b00 294.5px,#996a00 295.5px)"></i><i style="margin-left:0px;width:296px;background:linear-gradient(90deg,#dbff1c 0,#fffc15 84.5px,#ffc606 223.5px,#fdb100 288.5px,#f7ad00 289.5px,#d99800 291.5px,#bf8500 292.5px,#a17000 294.5px,#9c6c00 295.5px)"></i><i style="margin-left:0px;width:296px;background:linear-gradient(90deg,#dbff1d 0,#fffc15 83.5px,#ffc606 222.5px,#fdb000 290.5px,#f7ac00 291.5px,#d99700 293.5px,#bf8500 294.5px,#b47c00 295.5px)"></i><i style="margin-left:0px;width:296px;background:linear-gradient(90deg,#dcff1d 0,#fffc15 82.5px,#ffc606 221.5px,#fdb000 292.5px,#f7ab00 293.5px,#eba300 294.5px,#e69f00 295.5px)"></i><i style="margin-left:0px;width:296px;background:linear-gradient(90deg,#dcff1d 0,#fffc16 81.5px,#ffc706 219.5px,#fdaf00 295.5px)"></i><i style="margin-left:0px;width:296px;background:linear-gradient(90deg,#dcff1d 0,#fffd16 80.5px,#ffc707 218.5px,#ffb000 295.5px)"></i><i style="margin-left:0px;width:296px;background:linear-gradient(90deg,#ddff1d 0,#fffd16 79.5px,#ffc707 217.5px,#ffaf00 295.5px)"></i><i style="margin-left:0px;width:296px;background:linear-gradient(90deg,#ddff1e 0,#fffd16 78.5px,#ffc707 216.5px,#ffaf01 295.5px)"></i><i style="margin-left:0px;width:296px;background:linear-gradient(90deg,#deff1e 0,#fffd17 77.5px,#ffc707 215.5px,#ffaf01 295.5px)"></i><i style="margin-left:0px;width:296px;background:linear-gradient(90deg,#deff1e 0,#fffc17 77.5px,#ffc608 215.5px,#ffaf01 295.5px)"></i><i style="margin-left:0px;width:296px;background:linear-gradient(90deg,#deff1e 0,#fffc17 76.5px,#ffc608 214.5px,#ffae01 295.5px)"></i><i style="margin-left:0px;width:296px;background:linear-gradient(90deg,#dfff1e 0,#fffc18 75.5px,#ffc608 213.5px,#ffae01 295.5px)"></i><i style="margin-left:0px;width:296px;background:linear-gradient(90deg,#dfff1f 0,#fffc18 74.5px,#ffc608 212.5px,#ffae01 295.5px)"></i><i style="margin-left:0px;width:296px;background:linear-gradient(90deg,#e0ff1f 0,#fffc18 73.5px,#ffc609 211.5px,#ffad01 295.5px)"></i><i style="margin-left:0px;width:296px;background:linear-gradient(90deg,#e0ff1f 0,#fffc19 72.5px,#ffc709 209.5px,#ffad02 295.5px)"></i><i style="margin-left:0px;width:296px;background:linear-gradient(90deg,#e0ff1f 0,#fffd19 71.5px,#ffc709 208.5px,#ffad02 295.5px)"></i><i style="margin-left:0px;width:296px;background:linear-gradient(90deg,#e1ff20 0,#fffd19 70.5px,#ffc709 207.5px,#ffad02 295.5px)"></i><i style="margin-left:0px;width:296px;background:linear-gradient(90deg,#e1ff20 0,#fffd19 69.5px,#ffc70a 206.5px,#ffac02 295.5px)"></i><i style="margin-left:0px;width:296px;background:linear-gradient(90deg,#e1ff20 0,#fffc1a 69.5px,#ffc60a 206.5px,#ffac02 295.5px)"></i><i style="margin-left:0px;width:296px;background:linear-gradient(90deg,#e2ff20 0,#fffc1a 68.5px,#ffc60a 205.5px,#ffac02 295.5px)"></i><i style="margin-left:0px;width:296px;background:linear-gradient(90deg,#e2ff20 0,#fffc1a 67.5px,#ffc60a 204.5px,#ffab02 295.5px)"></i><i style="margin-left:0px;width:296px;background:linear-gradient(90deg,#e3ff21 0,#fffc1b 66.5px,#ffc60b 203.5px,#ffab03 295.5px)"></i><i style="margin-left:0px;width:296px;background:linear-gradient(90deg,#e3ff21 0,#fffc1b 65.5px,#ffc60b 202.5px,#ffab03 295.5px)"></i><i style="margin-left:0px;width:296px;background:linear-gradient(90deg,#e3ff21 0,#fffd1b 64.5px,#ffc70b 200.5px,#ffab03 295.5px)"></i></div>
<svg class="a" style="left:2238px;top:757px" width="296" height="200"><rect x="137.15" y="89.35" width="18.3" height="18.3" fill="none" stroke="#fff" stroke-width="2.1"/><circle cx="145.1" cy="99.1" r="5.7" fill="#c2c000" stroke="#000" stroke-width="1.5"/></svg>
<!-- s_bottom -->
<div style="left:200px;top:1490px;width:2360px;height:62px;background:linear-gradient(#464646,#3a3a3a 40%,#2b2b2b)"></div>
<div style="left:201px;top:1490px;width:45px;height:61px;background:linear-gradient(#a9a9a9,#8a8a8a 45%,#666);border-radius:4px 4px 3px 3px;"></div>
<div style="left:216.3px;top:1492.2px;width:14.6px;height:14.6px;border-radius:50%;background:linear-gradient(#5a5a5a,#8c8c8c)"></div>
<svg class="a" style="left:219.5px;top:1495.5px" width="9" height="6"><path d="M0.2 5.6L4.3 0.4l4.1 5.2z" fill="#222"/></svg>
<div style="left:206px;top:1516.3px;width:35.2px;height:29.5px;background:#ff0;border-radius:3px;box-shadow:0 0 1px #cc0"></div>
<div style="left:252.2px;top:1490px;width:149.6px;height:61px;background:linear-gradient(#a9a9a9,#8a8a8a 45%,#666);border-radius:4px 4px 3px 3px;"></div>
<div style="left:257.5px;top:1495.2px;width:139.6px;height:36px;background:#c2c2a6;border-radius:3.5px;box-shadow:inset 0 0 1.5px rgba(0,0,0,.45)"></div>
<span class="t" style="left:316.4px;top:1537px;font-size:10.6px;color:#262626;transform:scaleX(0.9898);-webkit-text-stroke:0.3px #262626;">20%</span>
<div style="left:404px;top:1490px;width:149.6px;height:61px;background:linear-gradient(#a9a9a9,#8a8a8a 45%,#666);border-radius:4px 4px 3px 3px;"></div>
<div style="left:409.3px;top:1495.2px;width:139.6px;height:36px;background:#c2c28a;border-radius:3.5px;box-shadow:inset 0 0 1.5px rgba(0,0,0,.45)"></div>
<span class="t" style="left:468.2px;top:1537px;font-size:10.6px;color:#262626;transform:scaleX(0.9898);-webkit-text-stroke:0.3px #262626;">40%</span>
<div style="left:556.3px;top:1490px;width:149.6px;height:61px;background:linear-gradient(#a9a9a9,#8a8a8a 45%,#666);border-radius:4px 4px 3px 3px;"></div>
<div style="left:561.6px;top:1495.2px;width:139.6px;height:36px;background:#c2c26e;border-radius:3.5px;box-shadow:inset 0 0 1.5px rgba(0,0,0,.45)"></div>
<span class="t" style="left:620.5px;top:1537px;font-size:10.6px;color:#262626;transform:scaleX(0.9898);-webkit-text-stroke:0.3px #262626;">60%</span>
<div style="left:708.3px;top:1490px;width:149.6px;height:61px;background:linear-gradient(#a9a9a9,#8a8a8a 45%,#666);border-radius:4px 4px 3px 3px;"></div>
<div style="left:713.6px;top:1495.2px;width:139.6px;height:36px;background:#c2c250;border-radius:3.5px;box-shadow:inset 0 0 1.5px rgba(0,0,0,.45)"></div>
<span class="t" style="left:772.5px;top:1537px;font-size:10.6px;color:#262626;transform:scaleX(0.9898);-webkit-text-stroke:0.3px #262626;">80%</span>
<div style="left:860.2px;top:1490px;width:149.6px;height:61px;background:linear-gradient(#1a1a1a,#262626 60%,#2e2e2e);border-radius:4px 4px 3px 3px;"></div>
<div style="left:865.5px;top:1495.2px;width:139.6px;height:36px;background:#c6c400;border-radius:3.5px;box-shadow:inset 0 0 1.5px rgba(0,0,0,.45)"></div>
<span class="t" style="left:921.4px;top:1537px;font-size:10.6px;color:#fff;font-weight:700;transform:scaleX(0.9959);">100%</span>
<div style="left:2237px;top:1492.5px;width:323px;height:60px;background:#7c7c7c;border-radius:4px 0 0 0"></div>
<div style="left:2286.6px;top:1492.5px;width:45px;height:27px;background:linear-gradient(#b9b9b9,#a0a0a0 45%,#848484);border-radius:3px"></div>
<div style="left:2300.1px;top:1496.5px;width:19px;height:19px;border-radius:50%;background:linear-gradient(#8a8a8a,#bcbcbc)"></div>
<div style="left:2332.6px;top:1492.5px;width:43.9px;height:27px;background:linear-gradient(#b9b9b9,#a0a0a0 45%,#848484);border-radius:3px"></div>
<div style="left:2345.55px;top:1496.5px;width:19px;height:19px;border-radius:50%;background:linear-gradient(#8a8a8a,#bcbcbc)"></div>
<div style="left:2377.5px;top:1492.5px;width:43.7px;height:27px;background:linear-gradient(#b9b9b9,#a0a0a0 45%,#848484);border-radius:3px"></div>
<div style="left:2390.35px;top:1496.5px;width:19px;height:19px;border-radius:50%;background:linear-gradient(#8a8a8a,#bcbcbc)"></div>
<div style="left:2422.2px;top:1492.5px;width:44.1px;height:27px;background:linear-gradient(#b9b9b9,#a0a0a0 45%,#848484);border-radius:3px"></div>
<div style="left:2435.25px;top:1496.5px;width:19px;height:19px;border-radius:50%;background:linear-gradient(#8a8a8a,#bcbcbc)"></div>
<div style="left:2467.3px;top:1492.5px;width:44px;height:27px;background:linear-gradient(#b9b9b9,#a0a0a0 45%,#848484);border-radius:3px"></div>
<div style="left:2480.3px;top:1496.5px;width:19px;height:19px;border-radius:50%;background:linear-gradient(#8a8a8a,#bcbcbc)"></div>
<div style="left:2512.3px;top:1492.5px;width:44px;height:27px;background:linear-gradient(#b9b9b9,#a0a0a0 45%,#848484);border-radius:3px"></div>
<div style="left:2525.3px;top:1496.5px;width:19px;height:19px;border-radius:50%;background:linear-gradient(#8a8a8a,#bcbcbc)"></div>
<svg class="a" style="left:2303.6px;top:1500px" width="12" height="12"><rect x="3" y="3" width="6" height="6" fill="#333"/></svg>
<svg class="a" style="left:2349.05px;top:1500px" width="12" height="12"><path d="M3.5 2.5v7l6-3.5z" fill="#333"/></svg>
<svg class="a" style="left:2393.85px;top:1500px" width="12" height="12"><rect x="2.5" y="2.5" width="7" height="7" fill="none" stroke="#333" stroke-width="1.4"/><rect x="4.7" y="4.7" width="2.6" height="2.6" fill="#333"/></svg>
<svg class="a" style="left:2438.75px;top:1500px" width="12" height="12"><path d="M1.5 7c1.5-4 3-4 4.5-1s3 3 4.5-1" fill="none" stroke="#333" stroke-width="1.5"/></svg>
<svg class="a" style="left:2483.8px;top:1500px" width="12" height="12"><path d="M9.5 6a3.5 3.5 0 1 1-1.2-2.6" fill="none" stroke="#333" stroke-width="1.4"/><path d="M7.2 1.6l2.6 1.6-2.4 1.6z" fill="#333"/></svg>
<svg class="a" style="left:2528.8px;top:1500px" width="12" height="12"><circle cx="6" cy="6" r="3" fill="#333"/></svg>
<div style="left:2237px;top:1507px;width:48.5px;height:45px;background:linear-gradient(#b9b9b9,#a0a0a0 45%,#848484);border-radius:4px"></div>
<div style="left:2246px;top:1514.5px;width:30px;height:34px;border:2px solid #2a2a2a;border-radius:5px;box-sizing:border-box;background:#b0b0b0"></div>
<div style="left:2254.6px;top:1523.4px;width:13.4px;height:13px;background:#000"></div>
<div style="left:2286.3px;top:1521px;width:135.4px;height:31px;background:linear-gradient(#b9b9b9,#a0a0a0 45%,#848484);border-radius:4px 0 0 0;box-shadow:inset 0 1px 0 #d0d0d0"></div>
<div style="left:2422.7px;top:1521px;width:135px;height:31px;background:linear-gradient(#b9b9b9,#a0a0a0 45%,#848484);box-shadow:inset 0 1px 0 #d0d0d0"></div>
<div style="left:2307.3px;top:1526.4px;width:19.4px;height:19.4px;border-radius:50%;background:linear-gradient(#8c8c8c,#c0c0c0)"></div>
<div style="left:2520.4px;top:1526.4px;width:19.4px;height:19.4px;border-radius:50%;background:linear-gradient(#8c8c8c,#c0c0c0)"></div>
<span class="t" style="left:2312.83px;top:1528px;font-size:15px;color:#2a2a2a;">«</span>
<span class="t" style="left:2525.93px;top:1528px;font-size:15px;color:#2a2a2a;">»</span>
<span class="t" style="left:2344.3px;top:1526px;font-size:21.4px;color:#2c2c2c;transform:scaleX(1.0404);">Back</span>
<span class="t" style="left:2450.6px;top:1526px;font-size:21.4px;color:#2c2c2c;transform:scaleX(1.1727);">Next</span>
<div style="left:0;top:0;opacity:.8"><svg class="a" style="left:2160px;top:1452px" width="400" height="100" fill="none" stroke-linejoin="miter" stroke-linecap="round"><path d="M17.53 20.78 L65.75 31.66 L62.5 55.19 L27.92 61.36" stroke="rgba(225,225,225,.5)" stroke-width="7.2"/><path d="M17.53 20.78 L19.81 62.99 L48.7 81.17 L99.35 65.42 L73.86 60.88" stroke="rgba(225,225,225,.5)" stroke-width="7.2"/><path d="M17.53 20.78 L65.75 31.66 L62.5 55.19 L27.92 61.36" stroke="#7d2026" stroke-width="5"/><path d="M17.53 20.78 L19.81 62.99 L48.7 81.17 L99.35 65.42 L73.86 60.88" stroke="#7d2026" stroke-width="5"/><path d="M31.66 36.53 L43.83 52.27 L71.43 17.05" stroke="rgba(225,225,225,.55)" stroke-width="6.4"/><path d="M31.66 36.53 L43.83 52.27 L71.43 17.05" stroke="#3a3636" stroke-width="4.2"/></svg></div>
<div style="left:0;top:0;opacity:.7"><span class="t" style="left:2236.3px;top:1476px;font-size:39px;color:#981a22;font-weight:700;transform:scaleX(0.8609);-webkit-text-stroke:1.5px #981a22;letter-spacing:-0.5px;text-shadow:2.10px 0.00px 0 #dadada,1.94px 0.80px 0 #dadada,1.48px 1.48px 0 #dadada,0.80px 1.94px 0 #dadada,0.00px 2.10px 0 #dadada,-0.80px 1.94px 0 #dadada,-1.48px 1.48px 0 #dadada,-1.94px 0.80px 0 #dadada,-2.10px 0.00px 0 #dadada,-1.94px -0.80px 0 #dadada,-1.48px -1.48px 0 #dadada,-0.80px -1.94px 0 #dadada,-0.00px -2.10px 0 #dadada,0.80px -1.94px 0 #dadada,1.48px -1.48px 0 #dadada,1.94px -0.80px 0 #dadada;">NOTEBOOK</span><span class="t" style="left:2430.6px;top:1476px;font-size:39px;color:#262626;font-weight:700;transform:scaleX(0.8581);-webkit-text-stroke:1.5px #262626;letter-spacing:-0.5px;text-shadow:2.10px 0.00px 0 #dadada,1.94px 0.80px 0 #dadada,1.48px 1.48px 0 #dadada,0.80px 1.94px 0 #dadada,0.00px 2.10px 0 #dadada,-0.80px 1.94px 0 #dadada,-1.48px 1.48px 0 #dadada,-1.94px 0.80px 0 #dadada,-2.10px 0.00px 0 #dadada,-1.94px -0.80px 0 #dadada,-1.48px -1.48px 0 #dadada,-0.80px -1.94px 0 #dadada,-0.00px -2.10px 0 #dadada,0.80px -1.94px 0 #dadada,1.48px -1.48px 0 #dadada,1.94px -0.80px 0 #dadada;">CHECK</span></div>
</body></html>
